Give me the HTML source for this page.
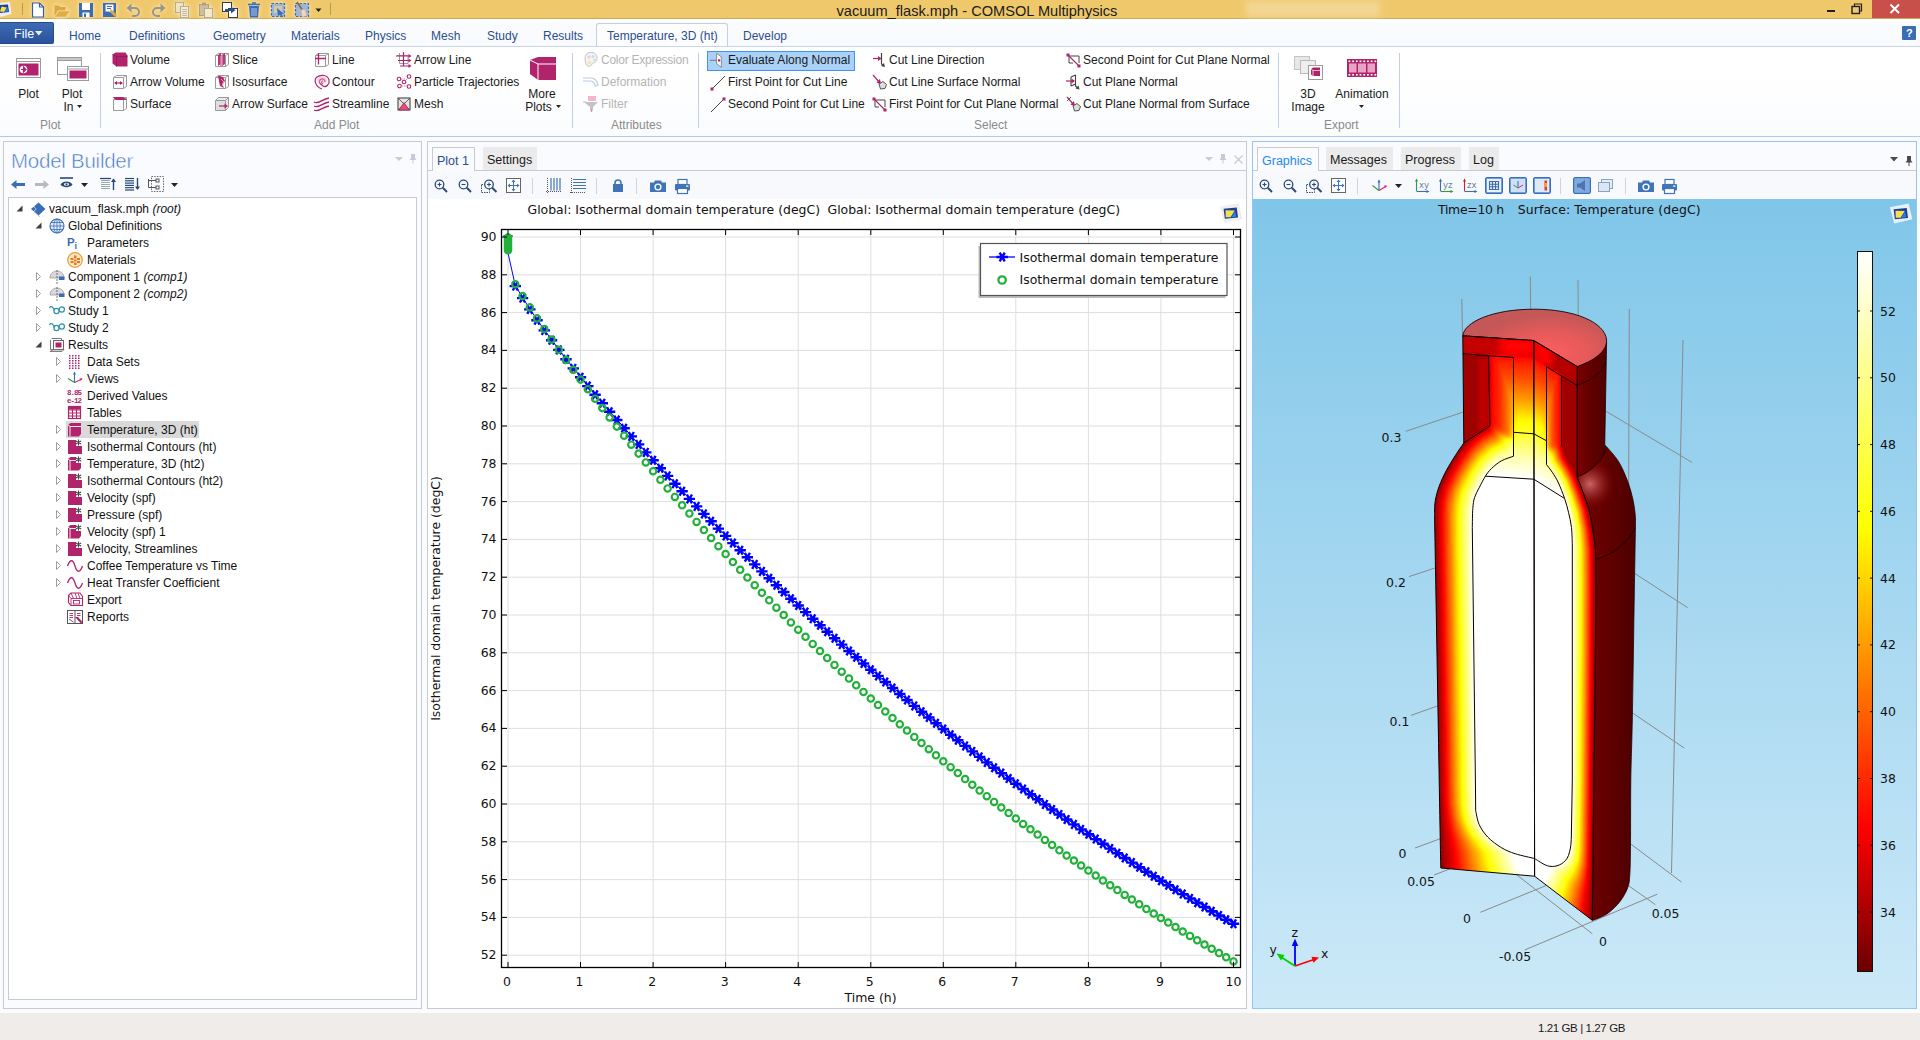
<!DOCTYPE html>
<html lang="en"><head><meta charset="utf-8"><title>vacuum_flask.mph - COMSOL Multiphysics</title>
<style>
html,body{margin:0;padding:0}
body{width:1920px;height:1040px;overflow:hidden;position:relative;background:#fafbfe;font-family:"Liberation Sans",sans-serif;font-size:12px;color:#111}
.a{position:absolute}
.t{position:absolute;white-space:nowrap;line-height:16px;height:16px}
.dj{font-family:"DejaVu Sans","Liberation Sans",sans-serif}
svg{position:absolute;overflow:visible}
#titlebar{left:0;top:0;width:1920px;height:18px;background:#f0c86c;border-bottom:1px solid #cdab55}
#tabs{left:0;top:19px;width:1920px;height:28px;background:linear-gradient(#fff 0,#fff 3px,#fafbfe 3px)}
#ribbon{left:0;top:46px;width:1920px;height:89px;background:linear-gradient(#fff,#fff 25%,#fbfcfe);border-bottom:1px solid #b8c8de;border-top:1px solid #c9d5e6}
#status{left:0;top:1013px;width:1920px;height:27px;background:#f0ecea}
.panel{position:absolute;border:1px solid #c9cacd;background:#fafbfe;box-sizing:border-box}
.rt{color:#1a1a1a}
.rg{color:#8b8b8b}
.dis{color:#b4b4b4}
.tab{color:#2a4f8f}
.sep{position:absolute;width:1px;background:#c2cfe2}
.tsep{position:absolute;width:1px;background:#cfd3da}
i{font-style:italic}

</style></head>
<body>
<div id="titlebar" class="a">
<div class="a" style="left:1246px;top:1px;width:134px;height:16px;background:#f4d898;filter:blur(3px);opacity:.9"></div>
<div class="t" style="left:836.5px;top:1.5px;font-size:14.6px;line-height:19px;height:19px;color:#1b1b1b">vacuum_flask.mph - COMSOL Multiphysics</div>
<svg style="left:0;top:2px" width="14" height="16" viewBox="0 0 14 16"><path d="M-2 1 L10 0 L11.500 12 L1 15 L-2 13Z" fill="#ececf2"/><path d="M-1 3 L8 2.500 L9 10 L-1 11Z" fill="#1d3f9c"/><path d="M0 9.500 L1.500 4.500 L7 5.500 L4 10Z" fill="#f0e04a"/><path d="M4.500 10 L7.500 5.800 L8.300 9.600Z" fill="#2c7fe0"/></svg>
<div class="a" style="left:22px;top:3px;width:1px;height:12px;background:#b99a55"></div>
<div class="a" style="left:330px;top:3px;width:1px;height:12px;background:#b99a55"></div>
<svg style="left:31px;top:2px;filter:drop-shadow(0 0 2px rgba(255,244,214,.9))" width="16" height="16" viewBox="0 0 16 16"><path d="M1.500 1 H8.500 L12.500 5 V15 H1.500Z" fill="#fff" stroke="#2f5fa8" stroke-width="1.200"/><path d="M8.500 1 V5 H12.500" fill="none" stroke="#2f5fa8" stroke-width="1.200"/></svg>
<svg style="left:54px;top:2px;filter:drop-shadow(0 0 2px rgba(255,244,214,.9))" width="16" height="16" viewBox="0 0 16 16"><path d="M.5 3.500 H5 L6.500 5 H11.500 V8.500 H4 L.5 14.500Z" fill="#dba83f"/><path d="M4.500 9 H16 L11.500 15 H.5Z" fill="#e2ad45" stroke="#f3d9a0" stroke-width=".5"/></svg>
<svg style="left:78px;top:2px;filter:drop-shadow(0 0 2px rgba(255,244,214,.9))" width="16" height="16" viewBox="0 0 16 16"><path d="M1 1 H15 V15 H1Z" fill="#3a6db5"/><rect x="4" y="1" width="8" height="7" fill="#fff"/><rect x="4.5" y="10.5" width="7" height="4.5" fill="#fff"/><rect x="6" y="11.5" width="2" height="3.5" fill="#3a6db5"/></svg>
<svg style="left:102px;top:2px;filter:drop-shadow(0 0 2px rgba(255,244,214,.9))" width="16" height="16" viewBox="0 0 16 16"><path d="M1 1 H14 V15 H1Z" fill="#3a6db5"/><rect x="3.5" y="2.5" width="8" height="7" fill="#fff"/><path d="M5 4.5 H10 M5 6.5 H9" stroke="#3a6db5" stroke-width="1"/><path d="M7 9 L9 7 L15 13 L13 15Z" fill="#e0a83a"/><path d="M6.5 8.5 L9 7.5 L7.5 10Z" fill="#fff"/></svg>
<svg style="left:126px;top:2px;filter:drop-shadow(0 0 2px rgba(255,244,214,.9))" width="16" height="16" viewBox="0 0 16 16"><path d="M4 6 H9 A4 4 0 0 1 9 14 H6" fill="none" stroke="#9a9687" stroke-width="2"/><path d="M0.5 6 L5.5 1.5 V10.5Z" fill="#9a9687"/></svg>
<svg style="left:150px;top:2px;filter:drop-shadow(0 0 2px rgba(255,244,214,.9))" width="16" height="16" viewBox="0 0 16 16"><path d="M12 6 H7 A4 4 0 0 0 7 14 H10" fill="none" stroke="#9a9687" stroke-width="2"/><path d="M15.5 6 L10.5 1.5 V10.5Z" fill="#9a9687"/></svg>
<svg style="left:174px;top:2px;filter:drop-shadow(0 0 2px rgba(255,244,214,.9))" width="16" height="16" viewBox="0 0 16 16"><rect x="1.5" y="0.5" width="8" height="10" fill="#efe3c4" stroke="#b8ac90"/><rect x="6.5" y="4.5" width="8" height="11" fill="#f5ecd4" stroke="#b8ac90"/><path d="M8 7.5 H13 M8 9.5 H13 M8 11.5 H13 M8 13.5 H13" stroke="#b8ac90" stroke-width=".8"/></svg>
<svg style="left:198px;top:2px;filter:drop-shadow(0 0 2px rgba(255,244,214,.9))" width="16" height="16" viewBox="0 0 16 16"><rect x="1.5" y="2.5" width="9" height="11" fill="#cdbf9c" stroke="#b0a27e"/><rect x="4" y="0.5" width="4" height="3" fill="#b0a27e"/><rect x="6.5" y="6.5" width="8" height="9" fill="#f4ead0" stroke="#b8ac90"/></svg>
<svg style="left:222px;top:2px;filter:drop-shadow(0 0 2px rgba(255,244,214,.9))" width="16" height="16" viewBox="0 0 16 16"><rect x="0.5" y="0.5" width="9" height="9" fill="#fff" stroke="#3d3d3d"/><rect x="6.500" y="6.5" width="9" height="9" fill="#fff" stroke="#3d3d3d"/><path d="M3 8 H10" stroke="#2b4f8f" stroke-width="2"/><path d="M9 4.500 L13.500 8 L9 11.500Z" fill="#2b4f8f"/></svg>
<svg style="left:246px;top:2px;filter:drop-shadow(0 0 2px rgba(255,244,214,.9))" width="16" height="16" viewBox="0 0 16 16"><path d="M3 4 H13 L12 15.5 H4Z" fill="#3a6db5"/><path d="M2 2.500 H14" stroke="#3a6db5" stroke-width="1.600"/><path d="M6 1 H10" stroke="#3a6db5" stroke-width="1.500"/><path d="M6 6 V14 M8 6 V14 M10 6 V14" stroke="#cfe0f5" stroke-width=".8"/></svg>
<svg style="left:270px;top:2px;filter:drop-shadow(0 0 2px rgba(255,244,214,.9))" width="16" height="16" viewBox="0 0 16 16"><rect x="1.500" y="1.500" width="13" height="13" fill="#9db5d6" stroke="#3a6db5" stroke-dasharray="2.500 1.500" stroke-width="1.200"/><rect x="4" y="4" width="8" height="7" fill="#f3d48f" opacity=".6"/><path d="M7 6 L14 12 L11.500 12 L13 15 L11.500 15.500 L10 12.500 L8 14Z" fill="#3a6db5"/></svg>
<svg style="left:294px;top:2px;filter:drop-shadow(0 0 2px rgba(255,244,214,.9))" width="16" height="16" viewBox="0 0 16 16"><rect x="1.500" y="1.500" width="13" height="13" fill="#9db5d6" stroke="#3a6db5" stroke-dasharray="2.500 1.500" stroke-width="1.200"/><path d="M3 0 L9 9" stroke="#8a6a3a" stroke-width="1.600"/><path d="M7 8 L11 7 L13 14 L8 15Z" fill="#e8d9c0" stroke="#c9a" stroke-width=".5"/></svg>
<svg style="left:315px;top:8px" width="8" height="5" viewBox="0 0 8 5"><path d="M0.500 0.500 H6.500 L3.500 4Z" fill="#222"/></svg>
<div class="a" style="left:1827px;top:10px;width:8px;height:2px;background:#222"></div>
<svg style="left:1851px;top:3px" width="12" height="12" viewBox="0 0 12 12"><path d="M3.500 3 V1 H10.500 V8 H8.500" fill="none" stroke="#222" stroke-width="1.200"/><rect x="1" y="3.500" width="7.500" height="7" fill="none" stroke="#222" stroke-width="1.400"/></svg>
<div class="a" style="left:1872px;top:0;width:48px;height:18px;background:#c9504a"></div>
<svg style="left:1889px;top:3px" width="12" height="12" viewBox="0 0 12 12"><path d="M1.500 1.500 L10 10 M10 1.500 L1.500 10" stroke="#fff" stroke-width="2"/></svg>
</div>
<div id="tabs" class="a">
<div class="a" style="left:0;top:3px;width:54px;height:22px;background:linear-gradient(#3d6cb4,#2a5199);border:1px solid #244a8d;border-left:none;box-sizing:border-box;border-radius:0 2px 2px 0"></div>
<div class="t" style="left:14px;top:7px;color:#fff;font-size:12.500px">File</div>
<svg style="left:35px;top:12px" width="8" height="5" viewBox="0 0 8 5"><path d="M0 0 H7.500 L3.750 4.500Z" fill="#e8eef8"/></svg>
<div class="t tab" style="left:69px;top:9px">Home</div>
<div class="t tab" style="left:129px;top:9px">Definitions</div>
<div class="t tab" style="left:213px;top:9px">Geometry</div>
<div class="t tab" style="left:291px;top:9px">Materials</div>
<div class="t tab" style="left:365px;top:9px">Physics</div>
<div class="t tab" style="left:431px;top:9px">Mesh</div>
<div class="t tab" style="left:487px;top:9px">Study</div>
<div class="t tab" style="left:543px;top:9px">Results</div>
<div class="t tab" style="left:743px;top:9px">Develop</div>
<div class="a" style="left:596px;top:4px;width:132px;height:24px;background:#fdfdfe;border:1px solid #c3d0e3;border-bottom:none;box-sizing:border-box;border-radius:3px 3px 0 0"></div>
<div class="t tab" style="left:607px;top:9px">Temperature, 3D (ht)</div>
<div class="a" style="left:1902px;top:7px;width:14px;height:14px;background:#3a6db5;border-radius:1px"></div><div class="t" style="left:1906px;top:6px;color:#fff;font-size:11px;font-weight:bold">?</div>
</div>
<div id="ribbon" class="a">
<svg style="left:16px;top:11px" width="25" height="20" viewBox="0 0 25 20"><rect x=".5" y=".5" width="24" height="19" fill="#fff" stroke="#9b9b9b"/><path d="M.5 3.5 H24.5" stroke="#9b9b9b"/><rect x="2.5" y="5.5" width="20" height="12" fill="#b1246c"/><circle cx="7.500" cy="11.500" r="3.800" fill="#fff"/><path d="M5 11.500 H8 M7.500 9 L10 11.500 L7.500 14Z" stroke="#b1246c" fill="#b1246c" stroke-width="1.200"/></svg>
<div class="t rt" style="left:-31.5px;width:120px;text-align:center;top:39px">Plot</div>
<svg style="left:57px;top:10px" width="32" height="24" viewBox="0 0 32 24"><rect x=".5" y=".5" width="24" height="17" fill="#fff" stroke="#9b9b9b"/><rect x=".5" y=".5" width="24" height="3" fill="#c8c8c8" stroke="#9b9b9b"/><rect x="10.500" y="9.500" width="21" height="14" fill="#fff" stroke="#9b9b9b"/><path d="M10.500 12 H31.500" stroke="#9b9b9b"/><rect x="12.500" y="13.500" width="17" height="8" fill="#b1246c"/></svg>
<div class="t rt" style="left:12px;width:120px;text-align:center;top:39px">Plot</div>
<div class="t rt" style="left:8.5px;width:120px;text-align:center;top:52px">In</div>
<svg style="left:77px;top:58px" width="6" height="4" viewBox="0 0 6 4"><path d="M0 0 H5 L2.500 3Z" fill="#222"/></svg>
<div class="t rg" style="left:40px;top:70px;">Plot</div>
<div class="sep" style="left:100px;top:6px;height:75px"></div>
<svg style="left:112px;top:5px" width="16" height="16" viewBox="0 0 16 16"><path d="M.5 2.500 L3.500 .5 H13.500 L15.500 3.500 V14.500 H4.500 L.5 11.500Z" fill="#b1246c"/><path d="M.5 2.500 L4.500 4.500 H15.500 M4.500 4.500 V14.500" fill="none" stroke="#8a1a52" stroke-width=".8"/></svg>
<div class="t rt" style="left:130px;top:5px;">Volume</div>
<svg style="left:112px;top:27px" width="16" height="16" viewBox="0 0 16 16"><path d="M1.5 3.5 H11.5 V14.5 H1.5Z M1.5 3.500 L4.500 1.500 H14.500 V12.500 L11.500 14.500 M11.500 3.500 L14.500 1.500" fill="none" stroke="#9b9b9b" stroke-width="1"/><path d="M3 9 H10" stroke="#b1246c" stroke-width="1.200"/><path d="M2 9 L5 7 V11Z M11 9 L8 7 V11Z" fill="#b1246c"/></svg>
<div class="t rt" style="left:130px;top:27px;">Arrow Volume</div>
<svg style="left:112px;top:49px" width="16" height="16" viewBox="0 0 16 16"><path d="M1.5 3.5 H11.5 V14.5 H1.5Z M1.5 3.500 L4.500 1.500 H14.500 V12.500 L11.500 14.500 M11.500 3.500 L14.500 1.500" fill="none" stroke="#9b9b9b" stroke-width="1"/><path d="M.5 1 H11 L15 4 H4Z" fill="#b1246c"/></svg>
<div class="t rt" style="left:130px;top:49px;">Surface</div>
<svg style="left:214px;top:5px" width="16" height="16" viewBox="0 0 16 16"><path d="M1.5 3.5 H11.5 V14.5 H1.5Z M1.5 3.500 L4.500 1.500 H14.500 V12.500 L11.500 14.500 M11.500 3.500 L14.500 1.500" fill="none" stroke="#9b9b9b" stroke-width="1"/><path d="M4 3 L7 1 V12 L4 14Z M8 3 L11 1 V12 L8 14Z" fill="#b1246c" opacity=".9"/><path d="M6 4 L9 2 V13 L6 15Z" fill="#d77aa9" opacity=".8"/></svg>
<div class="t rt" style="left:232px;top:5px;">Slice</div>
<svg style="left:214px;top:27px" width="16" height="16" viewBox="0 0 16 16"><path d="M1.5 3.5 H11.5 V14.5 H1.5Z M1.5 3.500 L4.500 1.500 H14.500 V12.500 L11.500 14.500 M11.500 3.500 L14.500 1.500" fill="none" stroke="#9b9b9b" stroke-width="1"/><path d="M4 1.500 L9 3 L11 7 L8 10 L10 14 L6 12 L5 7Z" fill="#b1246c"/><path d="M7 5 L10 8 L8 12" fill="none" stroke="#e6a3c5" stroke-width="1"/></svg>
<div class="t rt" style="left:232px;top:27px;">Isosurface</div>
<svg style="left:214px;top:49px" width="16" height="16" viewBox="0 0 16 16"><path d="M1.500 4.500 H11.500 V14.500 H1.500Z" fill="#dedede"/><path d="M1.500 4.500 L4.500 1.500 H14.500 L11.500 4.500Z M11.500 4.500 L14.500 1.500 V11.500 L11.500 14.500Z" fill="#e8e8e8"/><path d="M1.500 4.500 H11.500 V14.500 H1.500Z M1.500 4.500 L4.500 1.500 H14.500 V11.500 L11.500 14.500 M11.500 4.500 L14.500 1.500" fill="none" stroke="#9b9b9b"/><path d="M5 10 H12" stroke="#b1246c" stroke-width="1.200"/><path d="M14 10 L10.500 7.500 V12.500Z" fill="#b1246c"/></svg>
<div class="t rt" style="left:232px;top:49px;">Arrow Surface</div>
<svg style="left:314px;top:5px" width="16" height="16" viewBox="0 0 16 16"><path d="M1.500 3.500 H11.500 V14.500 H1.500Z M1.5 3.500 L4.500 1.500 H14.500 V12.500 L11.500 14.500 M11.500 3.500 L14.500 1.500" fill="none" stroke="#9b9b9b" stroke-width="1"/><path d="M4.500 1 V12.500 M1 6.500 H12" stroke="#b1246c" stroke-width="1.300" fill="none"/></svg>
<div class="t rt" style="left:332px;top:5px;">Line</div>
<svg style="left:314px;top:27px" width="16" height="16" viewBox="0 0 16 16"><path d="M8 15 C2 13 -1 6 3 3 C7 0 14 1 15 6 C16 10 12 14 9 12 C6 10 4 8 6 6 C8 4 11 5 11 8" fill="none" stroke="#b1246c" stroke-width="1.200"/><path d="M9 10 C7 9 7 7 9 7" fill="none" stroke="#b1246c" stroke-width="1.200"/><ellipse cx="8" cy="6" rx="5" ry="3.500" fill="#e6a3c5" opacity=".5"/></svg>
<div class="t rt" style="left:332px;top:27px;">Contour</div>
<svg style="left:314px;top:49px" width="16" height="16" viewBox="0 0 16 16"><path d="M0 6 C4 9 8 3 15 2 M0 10 C4 13 8 7 15 6 M0 14 C4 17 8 11 15 10" fill="none" stroke="#b1246c" stroke-width="1.400"/></svg>
<div class="t rt" style="left:332px;top:49px;">Streamline</div>
<svg style="left:396px;top:5px" width="16" height="16" viewBox="0 0 16 16"><path d="M3.500 1 V11.500 H12 M1 3.500 H12 V11.500" fill="none" stroke="#9b9b9b"/><path d="M0 4 H13 M2 8.500 H13 M4 14 H13 M7.500 0 V14" stroke="#b1246c" stroke-width="1.200" fill="none"/><path d="M15.500 4 L12.500 2 V6Z M15.500 8.500 L12.500 6.500 V10.500Z M15.500 14 L12.500 12 V16Z" fill="#b1246c"/></svg>
<div class="t rt" style="left:414px;top:5px;">Arrow Line</div>
<svg style="left:396px;top:27px" width="16" height="16" viewBox="0 0 16 16"><g fill="none" stroke="#b1246c" stroke-width="1.100"><circle cx="3" cy="5" r="1.800"/><circle cx="8" cy="8" r="1.800"/><circle cx="13" cy="2.500" r="1.800"/><circle cx="3.500" cy="12" r="1.800"/><circle cx="13" cy="12.500" r="1.800"/></g><path d="M5 5 H9 M10 6 L12 4 M5.500 12 H11" stroke="#d77aa9" stroke-width="1" stroke-dasharray="1.500 1"/></svg>
<div class="t rt" style="left:414px;top:27px;">Particle Trajectories</div>
<svg style="left:396px;top:49px" width="16" height="16" viewBox="0 0 16 16"><rect x="2" y="2" width="12" height="12" fill="#e4e4e4" stroke="#555" stroke-width="1.200"/><path d="M2 2 L14 14 M14 2 L2 14" stroke="#555" stroke-width=".9"/><path d="M8 6.500 L13 14 H3Z" fill="#e0516f" stroke="#b1246c" stroke-width=".8"/></svg>
<div class="t rt" style="left:414px;top:49px;">Mesh</div>
<svg style="left:530px;top:10px" width="26" height="24" viewBox="0 0 26 24"><path d="M0 3 L8 0 H26 V23 H8 L0 17Z" fill="#b1246c"/><path d="M0 3 L8 7 H26 M8 7 V23" fill="none" stroke="#fdfdfe" stroke-width="1"/></svg>
<div class="t rt" style="left:482px;width:120px;text-align:center;top:39px">More</div>
<div class="t rt" style="left:478.5px;width:120px;text-align:center;top:52px">Plots</div>
<svg style="left:556px;top:58px" width="6" height="4" viewBox="0 0 6 4"><path d="M0 0 H5 L2.500 3Z" fill="#222"/></svg>
<div class="t rg" style="left:314px;top:70px;">Add Plot</div>
<div class="sep" style="left:572px;top:6px;height:75px"></div>
<svg style="left:583px;top:5px" width="16" height="16" viewBox="0 0 16 16"><path d="M5 1 C10 -1 15 2 14 7 C13 12 10 10 9 12 C8 15 4 15 3 12 C2 9 1 3 5 1Z" fill="#f3f3f3" stroke="#c4c4c4"/><circle cx="6" cy="5" r="1.500" fill="#f6c9d9"/><circle cx="10" cy="4.500" r="1.500" fill="#c7dbf2"/><circle cx="11.500" cy="8" r="1.500" fill="#cfeacc"/><circle cx="6.500" cy="10.500" r="1.500" fill="#f7dfb0"/></svg>
<div class="t dis" style="left:601px;top:5px;letter-spacing:-.25px">Color Expression</div>
<svg style="left:583px;top:27px" width="16" height="16" viewBox="0 0 16 16"><path d="M0 4 H8 C12 4 14 7 15 11 M0 7 H7 C10 7 11.500 9 12.500 12" fill="none" stroke="#b9cde6" stroke-width="1.200"/><path d="M12 12.500 L15.500 11" stroke="#b9cde6"/></svg>
<div class="t dis" style="left:601px;top:27px;">Deformation</div>
<svg style="left:583px;top:49px" width="16" height="16" viewBox="0 0 16 16"><rect x="5" y="0" width="8" height="5" fill="#f3b6cf"/><path d="M1 6 H15 L10 11 V14 H7 V11Z" fill="#c4c4c4"/><path d="M8.500 13 V16" stroke="#e98bb3" stroke-width="1.500"/><path d="M0 6 H3" stroke="#c4c4c4"/></svg>
<div class="t dis" style="left:601px;top:49px;">Filter</div>
<div class="t rg" style="left:611px;top:70px;">Attributes</div>
<div class="sep" style="left:698px;top:6px;height:75px"></div>
<div class="a" style="left:707px;top:4px;width:148px;height:20px;background:#aad2f8;border:1px solid #3d94e8;box-sizing:border-box"></div>
<svg style="left:708px;top:5px" width="16" height="16" viewBox="0 0 16 16"><path d="M8.600 1.200 L13.300 4.900 V15.300 L8.600 11.700Z" fill="#fff" stroke="#8a8a8a" stroke-width="1"/><path d="M2 8.300 H8.600" stroke="#777" stroke-width="1"/><rect x="10" y="7.300" width="2.200" height="2.200" fill="#b1246c"/></svg>
<div class="t rt" style="left:728px;top:5px;">Evaluate Along Normal</div>
<svg style="left:710px;top:28px" width="16" height="16" viewBox="0 0 16 16"><path d="M2 14 L15 1" stroke="#444" stroke-width="1"/><rect x="0.500" y="12.500" width="3" height="3" fill="#b1246c"/></svg>
<div class="t rt" style="left:728px;top:27px;">First Point for Cut Line</div>
<svg style="left:710px;top:50px" width="16" height="16" viewBox="0 0 16 16"><path d="M1 15 L14 2" stroke="#444" stroke-width="1"/><rect x="12.500" y="0.500" width="3" height="3" fill="#b1246c"/></svg>
<div class="t rt" style="left:728px;top:49px;">Second Point for Cut Line</div>
<svg style="left:872px;top:5px" width="16" height="16" viewBox="0 0 16 16"><path d="M9.500 1 V12 M9.500 12 L11.500 14" stroke="#444" stroke-width="1.200" fill="none"/><path d="M13 15 L9 14 L12 11Z" fill="#444"/><path d="M1 6.500 H9" stroke="#b1246c" stroke-width="1.200"/><path d="M9.500 6.500 L6 4 V9Z" fill="#b1246c"/></svg>
<div class="t rt" style="left:889px;top:5px;">Cut Line Direction</div>
<svg style="left:872px;top:27px" width="16" height="16" viewBox="0 0 16 16"><path d="M1 1 L8 9" stroke="#b1246c" stroke-width="1.200"/><path d="M9 10.500 L4.500 8.500 L8 5Z" fill="#b1246c"/><path d="M7 10 L11 7.500 L14.500 10.500 L13 14.500 L8.500 15Z" fill="#ddd" stroke="#444" stroke-width=".9"/></svg>
<div class="t rt" style="left:889px;top:27px;">Cut Line Surface Normal</div>
<svg style="left:872px;top:49px" width="16" height="16" viewBox="0 0 16 16"><path d="M3 4 H13 V11 M3 4 V11 H7" fill="none" stroke="#444" stroke-width="1"/><path d="M3 4 L13 14" stroke="#b1246c" stroke-width="1.100"/><rect x="0.500" y="1.500" width="3" height="3" fill="#b1246c"/><rect x="11.500" y="12.500" width="3" height="3" fill="#b1246c"/></svg>
<div class="t rt" style="left:889px;top:49px;">First Point for Cut Plane Normal</div>
<svg style="left:1066px;top:5px" width="16" height="16" viewBox="0 0 16 16"><path d="M3 4 H13 V11 M3 4 V11 H7" fill="none" stroke="#444" stroke-width="1"/><path d="M3 4 L13 14" stroke="#b1246c" stroke-width="1.100"/><rect x="0.500" y="1.500" width="3" height="3" fill="#b1246c"/><rect x="11.500" y="12.500" width="3" height="3" fill="#b1246c"/></svg>
<div class="t rt" style="left:1083px;top:5px;">Second Point for Cut Plane Normal</div>
<svg style="left:1066px;top:27px" width="16" height="16" viewBox="0 0 16 16"><path d="M9.500 1 V12 L12 14.500 M5 3 V12 M5 3 L9.500 1 M5 12 L9.500 10" stroke="#444" stroke-width="1.100" fill="none"/><path d="M13.500 15.500 L9.500 14.500 L12.500 11.500Z" fill="#444"/><path d="M0 7 H8" stroke="#b1246c" stroke-width="1.200"/><path d="M9 7 L5.500 4.500 V9.500Z" fill="#b1246c"/></svg>
<div class="t rt" style="left:1083px;top:27px;">Cut Plane Normal</div>
<svg style="left:1066px;top:49px" width="16" height="16" viewBox="0 0 16 16"><path d="M1 1 L8 9" stroke="#b1246c" stroke-width="1.200"/><path d="M9 10.500 L4.500 8.500 L8 5Z" fill="#b1246c"/><path d="M7 10 L11 7.500 L14.500 10.500 L13 14.500 L8.500 15Z" fill="#ddd" stroke="#444" stroke-width=".9"/><path d="M1 5 L5 1" stroke="#444" stroke-width=".9"/></svg>
<div class="t rt" style="left:1083px;top:49px;">Cut Plane Normal from Surface</div>
<div class="t rg" style="left:974px;top:70px;">Select</div>
<div class="sep" style="left:1278px;top:6px;height:75px"></div>
<svg style="left:1294px;top:9px" width="30" height="24" viewBox="0 0 30 24"><rect x="0.500" y="0.500" width="15" height="13" fill="#e8e8e8" stroke="#c4c4c4"/><rect x="6.500" y="4.500" width="15" height="13" fill="#eee" stroke="#b9b9b9"/><rect x="14.500" y="9.500" width="14" height="14" fill="#fff" stroke="#9b9b9b"/><path d="M17 13 L19 11.500 H26 V20 H19 L17 18.500Z" fill="#b1246c"/><path d="M17 13 L19 14.500 H26 M19 14.500 V20" stroke="#fff" stroke-width=".7" fill="none"/></svg>
<div class="t rt" style="left:1248px;width:120px;text-align:center;top:39px">3D</div>
<div class="t rt" style="left:1248px;width:120px;text-align:center;top:52px">Image</div>
<svg style="left:1347px;top:12px" width="30" height="18" viewBox="0 0 30 18"><rect x="0" y="0" width="30" height="18" fill="#b1246c"/><rect x="1.5" y="1.500" width="1.800" height="1.600" fill="#fff"/><rect x="1.5" y="15" width="1.800" height="1.600" fill="#fff"/><rect x="5.2" y="1.500" width="1.800" height="1.600" fill="#fff"/><rect x="5.2" y="15" width="1.800" height="1.600" fill="#fff"/><rect x="8.9" y="1.500" width="1.800" height="1.600" fill="#fff"/><rect x="8.9" y="15" width="1.800" height="1.600" fill="#fff"/><rect x="12.6" y="1.500" width="1.800" height="1.600" fill="#fff"/><rect x="12.6" y="15" width="1.800" height="1.600" fill="#fff"/><rect x="16.3" y="1.500" width="1.800" height="1.600" fill="#fff"/><rect x="16.3" y="15" width="1.800" height="1.600" fill="#fff"/><rect x="20" y="1.500" width="1.800" height="1.600" fill="#fff"/><rect x="20" y="15" width="1.800" height="1.600" fill="#fff"/><rect x="23.7" y="1.500" width="1.800" height="1.600" fill="#fff"/><rect x="23.7" y="15" width="1.800" height="1.600" fill="#fff"/><rect x="27.4" y="1.500" width="1.800" height="1.600" fill="#fff"/><rect x="27.4" y="15" width="1.800" height="1.600" fill="#fff"/><rect x="2" y="4.500" width="7.500" height="9" fill="#e6a3c5"/><rect x="11" y="4.500" width="8" height="9" fill="#e6a3c5"/><rect x="20.500" y="4.500" width="7.500" height="9" fill="#e6a3c5"/></svg>
<div class="t rt" style="left:1302px;width:120px;text-align:center;top:39px">Animation</div>
<svg style="left:1359px;top:58px" width="6" height="4" viewBox="0 0 6 4"><path d="M0 0 H5 L2.500 3Z" fill="#222"/></svg>
<div class="t rg" style="left:1324px;top:70px;">Export</div>
<div class="sep" style="left:1399px;top:6px;height:75px"></div>
</div>
<div class="panel" style="left:3px;top:141px;width:419px;height:868px"></div>
<div class="a" style="left:8px;top:197px;width:409px;height:803px;border:1px solid #c9cacd;background:#fff;box-sizing:border-box"></div>
<div class="t" style="left:11px;top:147px;font-size:20.500px;line-height:28px;height:28px;color:#3f76c0;letter-spacing:-.25px;-webkit-text-stroke:.55px #fafbfe">Model Builder</div>
<svg style="left:395px;top:157px" width="8" height="5" viewBox="0 0 8 5"><path d="M0 0 H8 L4 4Z" fill="#c5cad6"/></svg>
<svg style="left:409px;top:154px" width="8" height="10" viewBox="0 0 8 10"><path d="M2 0 H6 V4 L7.500 6 H.500 L2 4Z M3.500 6 H4.500 V9.500 H3.500Z" fill="#c5cad6"/></svg>
<svg style="left:11px;top:178.5px" width="14" height="11" viewBox="0 0 14 11"><path d="M0 5.500 L5.500 1 V4 H14 V7 H5.500 V10Z" fill="#3a6db5"/></svg>
<svg style="left:35px;top:178.5px" width="14" height="11" viewBox="0 0 14 11"><path d="M14 5.500 L8.500 1 V4 H0 V7 H8.500 V10Z" fill="#b9b9b9"/></svg>
<svg style="left:59px;top:177px" width="15" height="12" viewBox="0 0 15 12"><path d="M1 1 H14" stroke="#244a78" stroke-width="1.600"/><path d="M1.500 7.500 C4 3.500 11 3.500 13.500 7.500 C11 11 4 11 1.500 7.500Z" fill="#244a78"/><ellipse cx="7.500" cy="7.300" rx="2.600" ry="1.500" fill="#fff"/><circle cx="7.500" cy="7.300" r="1.100" fill="#244a78"/></svg>
<svg style="left:81px;top:182.5px" width="7" height="4" viewBox="0 0 7 4"><path d="M0 0 H7 L3.500 4Z" fill="#222"/></svg>
<svg style="left:100px;top:177px" width="16" height="14" viewBox="0 0 16 14"><path d="M0 1.500 H11" stroke="#244a78" stroke-width="1.300"/><path d="M1 3.5 H10" stroke="#9aa" stroke-width="1"/><path d="M1 5.5 H10" stroke="#9aa" stroke-width="1"/><path d="M1 7.5 H10" stroke="#9aa" stroke-width="1"/><path d="M1 9.5 H10" stroke="#9aa" stroke-width="1"/><path d="M1 11.5 H10" stroke="#9aa" stroke-width="1"/><path d="M13.500 13 V2" stroke="#244a78" stroke-width="1.400"/><path d="M11 5 L13.500 1.500 L16 5Z" fill="#244a78"/></svg>
<svg style="left:124px;top:177px" width="16" height="14" viewBox="0 0 16 14"><path d="M1 1.5 H10" stroke="#244a78" stroke-width="1.200"/><path d="M1 3.8 H10" stroke="#244a78" stroke-width="1.200"/><path d="M1 6.1 H10" stroke="#244a78" stroke-width="1.200"/><path d="M1 8.4 H10" stroke="#244a78" stroke-width="1.200"/><path d="M1 10.7 H10" stroke="#244a78" stroke-width="1.200"/><path d="M1 13 H10" stroke="#244a78" stroke-width="1.200"/><path d="M13.500 1 V12" stroke="#244a78" stroke-width="1.400"/><path d="M11 9.500 L13.500 13 L16 9.500Z" fill="#244a78"/></svg>
<svg style="left:148px;top:176px" width="16" height="16" viewBox="0 0 16 16"><rect x="3.500" y=".5" width="12" height="15" fill="none" stroke="#666" stroke-dasharray="1.500 1.200"/><path d="M.5 3 V11.500 H8 M.5 4.500 H8" fill="none" stroke="#555" stroke-width="1"/><rect x="8" y="3" width="3" height="3" fill="#fff" stroke="#555"/><rect x="8" y="10" width="3" height="3" fill="#fff" stroke="#555"/></svg>
<svg style="left:171px;top:182.5px" width="7" height="4" viewBox="0 0 7 4"><path d="M0 0 H7 L3.500 4Z" fill="#222"/></svg>
<svg style="left:15.5px;top:204.5px" width="7" height="7" viewBox="0 0 7 7"><path d="M6.500 .5 V6.500 H.5Z" fill="#404040"/></svg>
<svg style="left:30px;top:201px" width="16" height="16" viewBox="0 0 16 16"><path d="M8.500 1.500 L15.500 8 L8.500 14.500 L4 10.500 L6.500 8 L4 5.500Z" fill="#3a6db5"/><path d="M3.500 5.800 L6 8 L3.500 10.200 L1 8Z" fill="#3a6db5"/><path d="M8.500 14.500 L9.500 15.500 L4.500 11" fill="none" stroke="#aab" stroke-width=".8"/></svg>
<div class="t" style="left:49px;top:201px;">vacuum_flask.mph <i>(root)</i></div>
<svg style="left:34.5px;top:221.5px" width="7" height="7" viewBox="0 0 7 7"><path d="M6.500 .5 V6.500 H.5Z" fill="#404040"/></svg>
<svg style="left:49px;top:218px" width="16" height="16" viewBox="0 0 16 16"><circle cx="8" cy="8" r="7" fill="#e7eef8" stroke="#3a6db5" stroke-width="1.100"/><ellipse cx="8" cy="8" rx="3.200" ry="7" fill="none" stroke="#3a6db5" stroke-width=".8"/><path d="M1 8 H15 M2 4.500 H14 M2 11.500 H14 M8 1 V15" stroke="#3a6db5" stroke-width=".8"/></svg>
<div class="t" style="left:68px;top:218px;">Global Definitions</div>
<svg style="left:67px;top:235px" width="16" height="16" viewBox="0 0 16 16"><text x="0" y="11" font-family="Liberation Sans,sans-serif" font-size="11.500" font-weight="bold" fill="#3a6db5">P</text><text x="7.500" y="14" font-family="Liberation Sans,sans-serif" font-size="9" font-weight="bold" fill="#3a6db5">i</text></svg>
<div class="t" style="left:87px;top:235px;">Parameters</div>
<svg style="left:67px;top:252px" width="16" height="16" viewBox="0 0 16 16"><circle cx="8" cy="8" r="7.300" fill="#fce9c8" stroke="#f29a2e" stroke-width="1.200"/><g fill="#e8791e"><rect x="3.500" y="6" width="3" height="2"/><rect x="3.500" y="9" width="3" height="2"/><rect x="7" y="3.500" width="2.500" height="3"/><rect x="7" y="7.500" width="2.500" height="2"/><rect x="7" y="10.500" width="2.500" height="2.500"/><rect x="10" y="6" width="3" height="2"/><rect x="10" y="9" width="3" height="2"/></g></svg>
<div class="t" style="left:87px;top:252px;">Materials</div>
<svg style="left:36px;top:271.5px" width="5" height="9" viewBox="0 0 5 9"><path d="M.5 .5 L4.500 4.500 L.5 8.500Z" fill="#fff" stroke="#a0a0a0" stroke-width="1"/></svg>
<svg style="left:49px;top:269px" width="16" height="16" viewBox="0 0 16 16"><path d="M1 9 C1 4 5 2 8 2 C11 2 15 4 15 9 H8Z" fill="#d8d8d8" stroke="#999" stroke-width=".8"/><path d="M8 1 V16" stroke="#555" stroke-width=".8" stroke-dasharray="2 1"/><rect x="10" y="7.500" width="5.500" height="3.500" fill="#3a6db5"/></svg>
<div class="t" style="left:68px;top:269px;">Component 1 <i>(comp1)</i></div>
<svg style="left:36px;top:288.5px" width="5" height="9" viewBox="0 0 5 9"><path d="M.5 .5 L4.500 4.500 L.5 8.500Z" fill="#fff" stroke="#a0a0a0" stroke-width="1"/></svg>
<svg style="left:49px;top:286px" width="16" height="16" viewBox="0 0 16 16"><path d="M1 9 C1 4 5 2 8 2 C11 2 15 4 15 9 H8Z" fill="#d8d8d8" stroke="#999" stroke-width=".8"/><path d="M8 1 V16" stroke="#555" stroke-width=".8" stroke-dasharray="2 1"/><rect x="10" y="7.500" width="5.500" height="3.500" fill="#3a6db5"/></svg>
<div class="t" style="left:68px;top:286px;">Component 2 <i>(comp2)</i></div>
<svg style="left:36px;top:305.5px" width="5" height="9" viewBox="0 0 5 9"><path d="M.5 .5 L4.500 4.500 L.5 8.500Z" fill="#fff" stroke="#a0a0a0" stroke-width="1"/></svg>
<svg style="left:49px;top:303px" width="16" height="16" viewBox="0 0 16 16"><path d="M.5 5 C2 2 4 4 5.500 7.500" fill="none" stroke="#2a93a8" stroke-width="1.200"/><circle cx="7.500" cy="8" r="2.600" fill="none" stroke="#2a93a8" stroke-width="1.200"/><circle cx="12.800" cy="6.500" r="2.600" fill="none" stroke="#2a93a8" stroke-width="1.200"/></svg>
<div class="t" style="left:68px;top:303px;">Study 1</div>
<svg style="left:36px;top:322.5px" width="5" height="9" viewBox="0 0 5 9"><path d="M.5 .5 L4.500 4.500 L.5 8.500Z" fill="#fff" stroke="#a0a0a0" stroke-width="1"/></svg>
<svg style="left:49px;top:320px" width="16" height="16" viewBox="0 0 16 16"><path d="M.5 5 C2 2 4 4 5.500 7.500" fill="none" stroke="#2a93a8" stroke-width="1.200"/><circle cx="7.500" cy="8" r="2.600" fill="none" stroke="#2a93a8" stroke-width="1.200"/><circle cx="12.800" cy="6.500" r="2.600" fill="none" stroke="#2a93a8" stroke-width="1.200"/></svg>
<div class="t" style="left:68px;top:320px;">Study 2</div>
<svg style="left:34.5px;top:340.5px" width="7" height="7" viewBox="0 0 7 7"><path d="M6.500 .5 V6.500 H.5Z" fill="#404040"/></svg>
<svg style="left:49px;top:337px" width="16" height="16" viewBox="0 0 16 16"><path d="M2.500 1.500 H12.500 V10.500 M1.500 3 V12.500 H11" fill="none" stroke="#777" stroke-width="1"/><rect x="4.500" y="3.500" width="10" height="9" fill="#fff" stroke="#666" stroke-width="1"/><rect x="6.500" y="5.500" width="6" height="5" fill="#b1246c"/><path d="M1 14.500 L4 12.500 H15 L13 14.500Z" fill="#ccc" stroke="#666" stroke-width=".8"/></svg>
<div class="t" style="left:68px;top:337px;">Results</div>
<svg style="left:56px;top:356.5px" width="5" height="9" viewBox="0 0 5 9"><path d="M.5 .5 L4.500 4.500 L.5 8.500Z" fill="#fff" stroke="#a0a0a0" stroke-width="1"/></svg>
<svg style="left:67px;top:354px" width="16" height="16" viewBox="0 0 16 16"><rect x="2" y="1" width="1.500" height="1.500" fill="#b1246c"/><rect x="2" y="3.5" width="1.500" height="1.500" fill="#b1246c"/><rect x="2" y="6" width="1.500" height="1.500" fill="#b1246c"/><rect x="2" y="8.5" width="1.500" height="1.500" fill="#b1246c"/><rect x="2" y="11" width="1.500" height="1.500" fill="#b1246c"/><rect x="2" y="13.5" width="1.500" height="1.500" fill="#b1246c"/><rect x="5" y="1" width="1.500" height="1.500" fill="#b1246c"/><rect x="5" y="3.5" width="1.500" height="1.500" fill="#b1246c"/><rect x="5" y="6" width="1.500" height="1.500" fill="#b1246c"/><rect x="5" y="8.5" width="1.500" height="1.500" fill="#b1246c"/><rect x="5" y="11" width="1.500" height="1.500" fill="#b1246c"/><rect x="5" y="13.5" width="1.500" height="1.500" fill="#b1246c"/><rect x="8" y="1" width="1.500" height="1.500" fill="#b1246c"/><rect x="8" y="3.5" width="1.500" height="1.500" fill="#b1246c"/><rect x="8" y="6" width="1.500" height="1.500" fill="#b1246c"/><rect x="8" y="8.5" width="1.500" height="1.500" fill="#b1246c"/><rect x="8" y="11" width="1.500" height="1.500" fill="#b1246c"/><rect x="8" y="13.5" width="1.500" height="1.500" fill="#b1246c"/><rect x="11" y="1" width="1.500" height="1.500" fill="#b1246c"/><rect x="11" y="3.5" width="1.500" height="1.500" fill="#b1246c"/><rect x="11" y="6" width="1.500" height="1.500" fill="#b1246c"/><rect x="11" y="8.5" width="1.500" height="1.500" fill="#b1246c"/><rect x="11" y="11" width="1.500" height="1.500" fill="#b1246c"/><rect x="11" y="13.5" width="1.500" height="1.500" fill="#b1246c"/></svg>
<div class="t" style="left:87px;top:354px;">Data Sets</div>
<svg style="left:56px;top:373.5px" width="5" height="9" viewBox="0 0 5 9"><path d="M.5 .5 L4.500 4.500 L.5 8.500Z" fill="#fff" stroke="#a0a0a0" stroke-width="1"/></svg>
<svg style="left:67px;top:371px" width="16" height="16" viewBox="0 0 16 16"><path d="M7.500 11.500 V1.500" stroke="#3a6db5" stroke-width="1.100"/><path d="M6 3.500 L7.500 0.500 L9 3.500Z" fill="#3a6db5"/><path d="M7.500 11.500 L1 7.500" stroke="#2e9c3a" stroke-width="1.100"/><path d="M7.500 11.500 L15 8" stroke="#c8286e" stroke-width="1.100"/><path d="M15.500 7.500 L12.500 7.300 L13.700 9.800Z" fill="#c8286e"/></svg>
<div class="t" style="left:87px;top:371px;">Views</div>
<svg style="left:67px;top:388px" width="16" height="16" viewBox="0 0 16 16"><text x="0" y="7" font-family="Liberation Mono,monospace" font-size="7.500" font-weight="bold" fill="#b1246c" textLength="15">8.85</text><text x="0" y="14.500" font-family="Liberation Mono,monospace" font-size="7.500" font-weight="bold" fill="#b1246c" textLength="15">e-12</text></svg>
<div class="t" style="left:87px;top:388px;">Derived Values</div>
<svg style="left:67px;top:405px" width="16" height="16" viewBox="0 0 16 16"><rect x="1.500" y="1.500" width="12" height="12" fill="#fff" stroke="#b1246c" stroke-width="1.200"/><path d="M1.500 5 H13.500 M1.500 8 H13.500 M1.500 11 H13.500 M5.500 1.500 V13.500 M9.500 1.500 V13.500" stroke="#b1246c" stroke-width="1"/><rect x="1.500" y="1.500" width="12" height="3" fill="#b1246c"/></svg>
<div class="t" style="left:87px;top:405px;">Tables</div>
<svg style="left:56px;top:424.5px" width="5" height="9" viewBox="0 0 5 9"><path d="M.5 .5 L4.500 4.500 L.5 8.500Z" fill="#fff" stroke="#a0a0a0" stroke-width="1"/></svg>
<div class="a" style="left:66px;top:421px;width:133px;height:17px;background:#d9d9d9"></div>
<svg style="left:67px;top:422px" width="16" height="16" viewBox="0 0 16 16"><path d="M1 3 L3.500 1 H14 V12 L12 14.500 H1Z" fill="#b1246c"/><path d="M1 3 L3 4.500 H14 M3 4.500 V14.500" fill="none" stroke="#fff" stroke-width=".9"/></svg>
<div class="t" style="left:87px;top:422px;">Temperature, 3D (ht)</div>
<svg style="left:56px;top:441.5px" width="5" height="9" viewBox="0 0 5 9"><path d="M.5 .5 L4.500 4.500 L.5 8.500Z" fill="#fff" stroke="#a0a0a0" stroke-width="1"/></svg>
<svg style="left:67px;top:439px" width="16" height="16" viewBox="0 0 16 16"><path d="M1 1 H9 V7 H15 V15 H1Z" fill="#b1246c"/><path d="M11.500 .5 V6.500 M8.900 2 L14.100 5 M8.900 5 L14.100 2" stroke="#444" stroke-width="1.100"/></svg>
<div class="t" style="left:87px;top:439px;">Isothermal Contours (ht)</div>
<svg style="left:56px;top:458.5px" width="5" height="9" viewBox="0 0 5 9"><path d="M.5 .5 L4.500 4.500 L.5 8.500Z" fill="#fff" stroke="#a0a0a0" stroke-width="1"/></svg>
<svg style="left:67px;top:456px" width="16" height="16" viewBox="0 0 16 16"><path d="M1 3 L3.500 1 H9 V7 H14 V12 L12 14.500 H1Z" fill="#b1246c"/><path d="M1 3 L3 4.500 H9 M3 4.500 V14.500" fill="none" stroke="#fff" stroke-width=".9"/><path d="M11.500 .5 V6.500 M8.900 2 L14.100 5 M8.900 5 L14.100 2" stroke="#444" stroke-width="1.100"/></svg>
<div class="t" style="left:87px;top:456px;">Temperature, 3D (ht2)</div>
<svg style="left:56px;top:475.5px" width="5" height="9" viewBox="0 0 5 9"><path d="M.5 .5 L4.500 4.500 L.5 8.500Z" fill="#fff" stroke="#a0a0a0" stroke-width="1"/></svg>
<svg style="left:67px;top:473px" width="16" height="16" viewBox="0 0 16 16"><path d="M1 1 H9 V7 H15 V15 H1Z" fill="#b1246c"/><path d="M11.500 .5 V6.500 M8.900 2 L14.100 5 M8.900 5 L14.100 2" stroke="#444" stroke-width="1.100"/></svg>
<div class="t" style="left:87px;top:473px;">Isothermal Contours (ht2)</div>
<svg style="left:56px;top:492.5px" width="5" height="9" viewBox="0 0 5 9"><path d="M.5 .5 L4.500 4.500 L.5 8.500Z" fill="#fff" stroke="#a0a0a0" stroke-width="1"/></svg>
<svg style="left:67px;top:490px" width="16" height="16" viewBox="0 0 16 16"><path d="M1 1 H9 V7 H15 V15 H1Z" fill="#b1246c"/><path d="M11.500 .5 V6.500 M8.900 2 L14.100 5 M8.900 5 L14.100 2" stroke="#444" stroke-width="1.100"/></svg>
<div class="t" style="left:87px;top:490px;">Velocity (spf)</div>
<svg style="left:56px;top:509.5px" width="5" height="9" viewBox="0 0 5 9"><path d="M.5 .5 L4.500 4.500 L.5 8.500Z" fill="#fff" stroke="#a0a0a0" stroke-width="1"/></svg>
<svg style="left:67px;top:507px" width="16" height="16" viewBox="0 0 16 16"><path d="M1 1 H9 V7 H15 V15 H1Z" fill="#b1246c"/><path d="M11.500 .5 V6.500 M8.900 2 L14.100 5 M8.900 5 L14.100 2" stroke="#444" stroke-width="1.100"/></svg>
<div class="t" style="left:87px;top:507px;">Pressure (spf)</div>
<svg style="left:56px;top:526.5px" width="5" height="9" viewBox="0 0 5 9"><path d="M.5 .5 L4.500 4.500 L.5 8.500Z" fill="#fff" stroke="#a0a0a0" stroke-width="1"/></svg>
<svg style="left:67px;top:524px" width="16" height="16" viewBox="0 0 16 16"><path d="M1 3 L3.500 1 H9 V7 H14 V12 L12 14.500 H1Z" fill="#b1246c"/><path d="M1 3 L3 4.500 H9 M3 4.500 V14.500" fill="none" stroke="#fff" stroke-width=".9"/><path d="M11.500 .5 V6.500 M8.900 2 L14.100 5 M8.900 5 L14.100 2" stroke="#444" stroke-width="1.100"/></svg>
<div class="t" style="left:87px;top:524px;">Velocity (spf) 1</div>
<svg style="left:56px;top:543.5px" width="5" height="9" viewBox="0 0 5 9"><path d="M.5 .5 L4.500 4.500 L.5 8.500Z" fill="#fff" stroke="#a0a0a0" stroke-width="1"/></svg>
<svg style="left:67px;top:541px" width="16" height="16" viewBox="0 0 16 16"><path d="M1 1 H9 V7 H15 V15 H1Z" fill="#b1246c"/><path d="M11.500 .5 V6.500 M8.900 2 L14.100 5 M8.900 5 L14.100 2" stroke="#444" stroke-width="1.100"/></svg>
<div class="t" style="left:87px;top:541px;">Velocity, Streamlines</div>
<svg style="left:56px;top:560.5px" width="5" height="9" viewBox="0 0 5 9"><path d="M.5 .5 L4.500 4.500 L.5 8.500Z" fill="#fff" stroke="#a0a0a0" stroke-width="1"/></svg>
<svg style="left:67px;top:558px" width="16" height="16" viewBox="0 0 16 16"><path d="M.5 8 C3 1 6 1 8 8 C10 15 13 15 15.500 8" fill="none" stroke="#b1246c" stroke-width="1.300"/></svg>
<div class="t" style="left:87px;top:558px;">Coffee Temperature vs Time</div>
<svg style="left:56px;top:577.5px" width="5" height="9" viewBox="0 0 5 9"><path d="M.5 .5 L4.500 4.500 L.5 8.500Z" fill="#fff" stroke="#a0a0a0" stroke-width="1"/></svg>
<svg style="left:67px;top:575px" width="16" height="16" viewBox="0 0 16 16"><path d="M.5 8 C3 1 6 1 8 8 C10 15 13 15 15.500 8" fill="none" stroke="#b1246c" stroke-width="1.300"/></svg>
<div class="t" style="left:87px;top:575px;">Heat Transfer Coefficient</div>
<svg style="left:67px;top:592px" width="16" height="16" viewBox="0 0 16 16"><path d="M1.500 3.500 L4 1 H13 L15.500 4.500 V13.500 H4 L1.500 10.500Z" fill="#fff" stroke="#b1246c" stroke-width="1.100"/><path d="M1.500 3.500 L4 6.500 H15.500 M4 6.500 V13.500 M4 1 L6.500 6.500 M8 1 L10 6.500 M11 1 L13 6.500" fill="none" stroke="#b1246c" stroke-width=".9"/><rect x="6.500" y="8.500" width="6" height="3.500" fill="none" stroke="#b1246c" stroke-width=".9"/></svg>
<div class="t" style="left:87px;top:592px;">Export</div>
<svg style="left:67px;top:609px" width="16" height="16" viewBox="0 0 16 16"><rect x=".5" y="1.500" width="15" height="13" fill="#fff" stroke="#555" stroke-width="1"/><path d="M8 1.500 V14.500" stroke="#555" stroke-width="1"/><path d="M2.500 4.500 H6 M2.500 6.500 H6 M2.500 8.500 H6 M10 4.500 H13.500 M10 6.500 H13.500" stroke="#b1246c" stroke-width=".9"/><path d="M8 8 L14 14.500 L15.500 13 L11 8Z" fill="#b1246c"/><path d="M2 10 L6.500 13" stroke="#b1246c" stroke-width=".9"/></svg>
<div class="t" style="left:87px;top:609px;">Reports</div>
<div class="panel" style="left:427px;top:141px;width:820px;height:868px"></div>
<div class="a" style="left:428px;top:170px;width:818px;height:1px;background:#c9cacd"></div>
<div class="a" style="left:432px;top:147px;width:43px;height:24px;background:#fafbfe;border:1px solid #c9cacd;border-bottom:none;box-sizing:border-box"></div>
<div class="t" style="left:437px;top:152.5px;color:#2a4f8f;font-size:12.500px">Plot 1</div>
<div class="a" style="left:483px;top:147px;width:54px;height:23px;background:#ebebeb"></div>
<div class="t" style="left:487px;top:151.8px;font-size:12.500px;color:#1a1a1a">Settings</div>
<svg style="left:1205px;top:157px" width="8" height="5" viewBox="0 0 8 5"><path d="M0 0 H8 L4 4Z" fill="#c5cad6"/></svg>
<svg style="left:1219px;top:154px" width="8" height="10" viewBox="0 0 8 10"><path d="M2 0 H6 V4 L7.500 6 H.500 L2 4Z M3.500 6 H4.500 V9.500 H3.500Z" fill="#c5cad6"/></svg>
<svg style="left:1234px;top:154.5px" width="9" height="9" viewBox="0 0 9 9"><path d="M.5 .5 L8.500 8.500 M8.500 .5 L.5 8.500" stroke="#c5cad6" stroke-width="1.200"/></svg>
<div class="a" style="left:428px;top:171px;width:818px;height:28px;background:#f8f9fd"></div>
<svg style="left:434px;top:178.5px" width="14" height="14" viewBox="0 0 14 14"><circle cx="5.500" cy="5.500" r="4.300" fill="none" stroke="#2d4d77" stroke-width="1.300"/><path d="M8.800 8.800 L13 13" stroke="#2d4d77" stroke-width="2"/><path d="M3.500 5.500 H7.500" stroke="#2d4d77" stroke-width="1.100"/><path d="M5.500 3.500 V7.500" stroke="#2d4d77" stroke-width="1.100"/></svg>
<svg style="left:458px;top:178.5px" width="14" height="14" viewBox="0 0 14 14"><circle cx="5.500" cy="5.500" r="4.300" fill="none" stroke="#2d4d77" stroke-width="1.300"/><path d="M8.800 8.800 L13 13" stroke="#2d4d77" stroke-width="2"/><path d="M3.500 5.500 H7.500" stroke="#2d4d77" stroke-width="1.100"/></svg>
<svg style="left:481px;top:178.5px" width="16" height="14" viewBox="0 0 16 14"><rect x=".5" y="5.500" width="8" height="8" fill="none" stroke="#2d4d77" stroke-dasharray="1.500 1" stroke-width="1"/><circle cx="8" cy="5.500" r="4.300" fill="#f8f9fd" stroke="#2d4d77" stroke-width="1.300"/><path d="M11.200 8.800 L15.500 13" stroke="#2d4d77" stroke-width="2"/><path d="M6 5.500 H10 M8 3.500 V7.500" stroke="#2d4d77" stroke-width="1.100"/></svg>
<svg style="left:506px;top:178px" width="15" height="15" viewBox="0 0 15 15"><rect x=".5" y=".5" width="14" height="14" fill="#fff" stroke="#666" stroke-width="1"/><path d="M7.500 2 V13 M2 7.500 H13" stroke="#3f74b8" stroke-width="1"/><path d="M7.500 1.500 L9.500 4 H5.500Z M7.500 13.500 L9.500 11 H5.500Z M1.500 7.500 L4 5.500 V9.500Z M13.500 7.500 L11 5.500 V9.500Z" fill="#3f74b8"/></svg>
<div class="tsep" style="left:532px;top:178px;height:16px"></div>
<div class="tsep" style="left:596px;top:178px;height:16px"></div>
<div class="tsep" style="left:636px;top:178px;height:16px"></div>
<svg style="left:546px;top:177.5px" width="16" height="16" viewBox="0 0 16 16"><path d="M1.500 0 V15 M0 13.500 H16" stroke="#555" stroke-width="1" stroke-dasharray="1 1"/><path d="M5 0 V12.500 M8 0 V12.500 M11 0 V12.500 M14 0 V12.500" stroke="#3f74b8" stroke-width="1.200"/></svg>
<svg style="left:570px;top:177.5px" width="16" height="16" viewBox="0 0 16 16"><path d="M1.500 0 V15 M0 14.500 H16" stroke="#555" stroke-width="1" stroke-dasharray="1 1"/><path d="M3 1.500 H16 M3 4.500 H16 M3 7.500 H16 M3 10.500 H16" stroke="#3f74b8" stroke-width="1.200"/></svg>
<svg style="left:613px;top:178.5px" width="10" height="13" viewBox="0 0 10 13"><rect x="0" y="5" width="10" height="8" fill="#3f74b8"/><path d="M2 5.500 V4 A3 3 0 0 1 8 4 V5.500" fill="none" stroke="#3f74b8" stroke-width="1.600"/></svg>
<svg style="left:650px;top:180px" width="16" height="12" viewBox="0 0 16 12"><path d="M0 2.500 H4 L5 .5 H11 L12 2.500 H16 V12 H0Z" fill="#3f74b8"/><circle cx="8" cy="7" r="3.600" fill="#fff"/><circle cx="8" cy="7" r="2.200" fill="#3f74b8"/></svg>
<svg style="left:675px;top:178.5px" width="15" height="15" viewBox="0 0 15 15"><rect x="3" y=".5" width="9" height="5" fill="#fff" stroke="#3f74b8" stroke-width="1.200"/><rect x="0" y="5" width="15" height="6.500" rx="1" fill="#3f74b8"/><rect x="2.500" y="9.500" width="10" height="5" fill="#fff" stroke="#3f74b8" stroke-width="1.200"/><rect x="11" y="6.500" width="2.500" height="1.200" fill="#fff"/></svg>
<div class="a" style="left:428px;top:199px;width:818px;height:809px;background:#fff"></div>
<svg style="left:0;top:0" width="1920" height="1040" viewBox="0 0 1920 1040">
<defs><marker id="mstar" markerWidth="12" markerHeight="12" refX="6" refY="5.4" markerUnits="userSpaceOnUse"><path d="M.3 6 H11.700 M3.450 1.580 L8.550 10.420 M8.550 1.580 L3.450 10.420" stroke="#0000ff" stroke-width="2.400" fill="none"/></marker>
<marker id="mcirc" markerWidth="12" markerHeight="12" refX="6" refY="6" markerUnits="userSpaceOnUse"><circle cx="6" cy="6" r="3.200" fill="none" stroke="#22b03a" stroke-width="2.150"/></marker></defs>
<path d="M508.0 229.5 V967.5 M580.5 229.5 V967.5 M653.1 229.5 V967.5 M725.6 229.5 V967.5 M798.2 229.5 V967.5 M870.8 229.5 V967.5 M943.3 229.5 V967.5 M1015.8 229.5 V967.5 M1088.4 229.5 V967.5 M1160.9 229.5 V967.5 M1233.5 229.5 V967.5 M501.5 955.2 H1240.5 M501.5 917.4 H1240.5 M501.5 879.6 H1240.5 M501.5 841.8 H1240.5 M501.5 804.0 H1240.5 M501.5 766.2 H1240.5 M501.5 728.4 H1240.5 M501.5 690.6 H1240.5 M501.5 652.8 H1240.5 M501.5 615.0 H1240.5 M501.5 577.2 H1240.5 M501.5 539.4 H1240.5 M501.5 501.6 H1240.5 M501.5 463.8 H1240.5 M501.5 426.0 H1240.5 M501.5 388.2 H1240.5 M501.5 350.4 H1240.5 M501.5 312.6 H1240.5 M501.5 274.8 H1240.5 M501.5 237.0 H1240.5" stroke="#dedede" stroke-width="1" fill="none"/>
<polyline points="508.0,237.0 508.2,254.0 515.3,285.5 522.5,297.5 529.8,308.8 537.0,319.6 544.3,329.8 551.5,339.7 558.8,349.3 566.0,358.7 573.3,367.8 580.5,376.7 587.8,385.5 595.1,394.1 602.3,402.7 609.6,411.1 616.8,419.4 624.1,427.6 631.3,435.8 638.6,443.8 645.8,451.8 653.1,459.7 660.4,467.6 667.6,475.3 674.9,483.1 682.1,490.7 689.4,498.3 696.6,505.8 703.9,513.3 711.1,520.6 718.4,528.0 725.6,535.3 732.9,542.5 740.2,549.6 747.4,556.7 754.7,563.8 761.9,570.8 769.2,577.7 776.4,584.6 783.7,591.4 790.9,598.2 798.2,604.9 805.5,611.5 812.7,618.1 820.0,624.7 827.2,631.2 834.5,637.6 841.7,644.0 849.0,650.4 856.2,656.7 863.5,662.9 870.8,669.1 878.0,675.3 885.3,681.4 892.5,687.4 899.8,693.4 907.0,699.4 914.3,705.3 921.5,711.1 928.8,716.9 936.0,722.7 943.3,728.4 950.6,734.1 957.8,739.7 965.1,745.3 972.3,750.8 979.6,756.3 986.8,761.8 994.1,767.2 1001.3,772.5 1008.6,777.9 1015.8,783.1 1023.1,788.4 1030.4,793.6 1037.6,798.7 1044.9,803.8 1052.1,808.9 1059.4,813.9 1066.6,818.9 1073.9,823.8 1081.1,828.8 1088.4,833.6 1095.7,838.5 1102.9,843.2 1110.2,848.0 1117.4,852.7 1124.7,857.4 1131.9,862.0 1139.2,866.6 1146.4,871.2 1153.7,875.7 1160.9,880.2 1168.2,884.7 1175.5,889.1 1182.7,893.5 1190.0,897.8 1197.2,902.2 1204.5,906.4 1211.7,910.7 1219.0,914.9 1226.2,919.1 1233.5,923.2" fill="none" stroke="#0000ff" stroke-width="1"/>
<polyline points="515.3,285.5 522.5,297.5 529.8,308.8 537.0,319.6 544.3,329.8 551.5,339.7 558.8,349.3 566.0,358.7 573.3,367.8 580.5,376.7 587.8,385.5 595.1,394.1 602.3,402.7 609.6,411.1 616.8,419.4 624.1,427.6 631.3,435.8 638.6,443.8 645.8,451.8 653.1,459.7 660.4,467.6 667.6,475.3 674.9,483.1 682.1,490.7 689.4,498.3 696.6,505.8 703.9,513.3 711.1,520.6 718.4,528.0 725.6,535.3 732.9,542.5 740.2,549.6 747.4,556.7 754.7,563.8 761.9,570.8 769.2,577.7 776.4,584.6 783.7,591.4 790.9,598.2 798.2,604.9 805.5,611.5 812.7,618.1 820.0,624.7 827.2,631.2 834.5,637.6 841.7,644.0 849.0,650.4 856.2,656.7 863.5,662.9 870.8,669.1 878.0,675.3 885.3,681.4 892.5,687.4 899.8,693.4 907.0,699.4 914.3,705.3 921.5,711.1 928.8,716.9 936.0,722.7 943.3,728.4 950.6,734.1 957.8,739.7 965.1,745.3 972.3,750.8 979.6,756.3 986.8,761.8 994.1,767.2 1001.3,772.5 1008.6,777.9 1015.8,783.1 1023.1,788.4 1030.4,793.6 1037.6,798.7 1044.9,803.8 1052.1,808.9 1059.4,813.9 1066.6,818.9 1073.9,823.8 1081.1,828.8 1088.4,833.6 1095.7,838.5 1102.9,843.2 1110.2,848.0 1117.4,852.7 1124.7,857.4 1131.9,862.0 1139.2,866.6 1146.4,871.2 1153.7,875.7 1160.9,880.2 1168.2,884.7 1175.5,889.1 1182.7,893.5 1190.0,897.8 1197.2,902.2 1204.5,906.4 1211.7,910.7 1219.0,914.9 1226.2,919.1 1233.5,923.2" fill="none" stroke="none" marker-start="url(#mstar)" marker-mid="url(#mstar)" marker-end="url(#mstar)"/>
<path d="M508.0 235.1 V237.9" stroke="#0000ff" stroke-width="9" stroke-dasharray="2 2"/>
<polyline points="515.3,284.2 522.5,296.0 529.8,307.4 537.0,318.4 544.3,329.1 551.5,339.6 558.8,349.8 566.0,359.9 573.3,369.8 580.5,379.6 587.8,389.2 595.1,398.7 602.3,408.1 609.6,417.4 616.8,426.6 624.1,435.7 631.3,444.7 638.6,453.6 645.8,462.4 653.1,471.2 660.4,479.8 667.6,488.4 674.9,496.9 682.1,505.3 689.4,513.6 696.6,521.9 703.9,530.0 711.1,538.1 718.4,546.2 725.6,554.1 732.9,562.0 740.2,569.8 747.4,577.5 754.7,585.2 761.9,592.8 769.2,600.3 776.4,607.7 783.7,615.1 790.9,622.4 798.2,629.7 805.5,636.8 812.7,643.9 820.0,651.0 827.2,658.0 834.5,664.9 841.7,671.7 849.0,678.5 856.2,685.3 863.5,691.9 870.8,698.5 878.0,705.1 885.3,711.5 892.5,718.0 899.8,724.3 907.0,730.6 914.3,736.9 921.5,743.1 928.8,749.2 936.0,755.3 943.3,761.3 950.6,767.2 957.8,773.1 965.1,779.0 972.3,784.8 979.6,790.5 986.8,796.2 994.1,801.9 1001.3,807.5 1008.6,813.0 1015.8,818.5 1023.1,823.9 1030.4,829.3 1037.6,834.6 1044.9,839.9 1052.1,845.1 1059.4,850.3 1066.6,855.5 1073.9,860.6 1081.1,865.6 1088.4,870.6 1095.7,875.6 1102.9,880.5 1110.2,885.3 1117.4,890.1 1124.7,894.9 1131.9,899.6 1139.2,904.3 1146.4,909.0 1153.7,913.6 1160.9,918.1 1168.2,922.6 1175.5,927.1 1182.7,931.5 1190.0,935.9 1197.2,940.3 1204.5,944.6 1211.7,948.8 1219.0,953.1 1226.2,957.3 1233.5,961.4" fill="none" stroke="none" marker-start="url(#mcirc)" marker-mid="url(#mcirc)" marker-end="url(#mcirc)"/>
<path d="M508.0 237.4 V250.2" stroke="#22b03a" stroke-width="8.500" stroke-linecap="round"/>
<path d="M508.0 229.5 v5.500 M508.0 967.5 v-5.500 M580.5 229.5 v5.500 M580.5 967.5 v-5.500 M653.1 229.5 v5.500 M653.1 967.5 v-5.500 M725.6 229.5 v5.500 M725.6 967.5 v-5.500 M798.2 229.5 v5.500 M798.2 967.5 v-5.500 M870.8 229.5 v5.500 M870.8 967.5 v-5.500 M943.3 229.5 v5.500 M943.3 967.5 v-5.500 M1015.8 229.5 v5.500 M1015.8 967.5 v-5.500 M1088.4 229.5 v5.500 M1088.4 967.5 v-5.500 M1160.9 229.5 v5.500 M1160.9 967.5 v-5.500 M1233.5 229.5 v5.500 M1233.5 967.5 v-5.500 M501.5 955.2 h5.500 M1240.5 955.2 h-5.500 M501.5 917.4 h5.500 M1240.5 917.4 h-5.500 M501.5 879.6 h5.500 M1240.5 879.6 h-5.500 M501.5 841.8 h5.500 M1240.5 841.8 h-5.500 M501.5 804.0 h5.500 M1240.5 804.0 h-5.500 M501.5 766.2 h5.500 M1240.5 766.2 h-5.500 M501.5 728.4 h5.500 M1240.5 728.4 h-5.500 M501.5 690.6 h5.500 M1240.5 690.6 h-5.500 M501.5 652.8 h5.500 M1240.5 652.8 h-5.500 M501.5 615.0 h5.500 M1240.5 615.0 h-5.500 M501.5 577.2 h5.500 M1240.5 577.2 h-5.500 M501.5 539.4 h5.500 M1240.5 539.4 h-5.500 M501.5 501.6 h5.500 M1240.5 501.6 h-5.500 M501.5 463.8 h5.500 M1240.5 463.8 h-5.500 M501.5 426.0 h5.500 M1240.5 426.0 h-5.500 M501.5 388.2 h5.500 M1240.5 388.2 h-5.500 M501.5 350.4 h5.500 M1240.5 350.4 h-5.500 M501.5 312.6 h5.500 M1240.5 312.6 h-5.500 M501.5 274.8 h5.500 M1240.5 274.8 h-5.500 M501.5 237.0 h5.500 M1240.5 237.0 h-5.500" stroke="#000" stroke-width="1" fill="none"/>
<rect x="501.5" y="229.5" width="739.0" height="738.0" fill="none" stroke="#000" stroke-width="1.300"/>
<g font-family="DejaVu Sans, Liberation Sans, sans-serif" font-size="12.450" fill="#111">
<text x="496.500" y="959.1" text-anchor="end">52</text>
<text x="496.500" y="921.3" text-anchor="end">54</text>
<text x="496.500" y="883.5" text-anchor="end">56</text>
<text x="496.500" y="845.7" text-anchor="end">58</text>
<text x="496.500" y="807.9" text-anchor="end">60</text>
<text x="496.500" y="770.1" text-anchor="end">62</text>
<text x="496.500" y="732.3" text-anchor="end">64</text>
<text x="496.500" y="694.5" text-anchor="end">66</text>
<text x="496.500" y="656.7" text-anchor="end">68</text>
<text x="496.500" y="618.9" text-anchor="end">70</text>
<text x="496.500" y="581.1" text-anchor="end">72</text>
<text x="496.500" y="543.3" text-anchor="end">74</text>
<text x="496.500" y="505.5" text-anchor="end">76</text>
<text x="496.500" y="467.7" text-anchor="end">78</text>
<text x="496.500" y="429.9" text-anchor="end">80</text>
<text x="496.500" y="392.1" text-anchor="end">82</text>
<text x="496.500" y="354.3" text-anchor="end">84</text>
<text x="496.500" y="316.5" text-anchor="end">86</text>
<text x="496.500" y="278.7" text-anchor="end">88</text>
<text x="496.500" y="240.9" text-anchor="end">90</text>
<text x="507.0" y="986" text-anchor="middle">0</text>
<text x="579.5" y="986" text-anchor="middle">1</text>
<text x="652.1" y="986" text-anchor="middle">2</text>
<text x="724.6" y="986" text-anchor="middle">3</text>
<text x="797.2" y="986" text-anchor="middle">4</text>
<text x="869.8" y="986" text-anchor="middle">5</text>
<text x="942.3" y="986" text-anchor="middle">6</text>
<text x="1014.8" y="986" text-anchor="middle">7</text>
<text x="1087.4" y="986" text-anchor="middle">8</text>
<text x="1159.9" y="986" text-anchor="middle">9</text>
<text x="1233.5" y="986" text-anchor="middle">10</text>
<text x="870.500" y="1001.500" text-anchor="middle">Time (h)</text>
<text x="527.500" y="213.500" xml:space="preserve">Global: Isothermal domain temperature (degC)</text>
<text x="827.500" y="213.500">Global: Isothermal domain temperature (degC)</text>
<text transform="translate(440 598.500) rotate(-90)" text-anchor="middle">Isothermal domain temperature (degC)</text>
<rect x="978.500" y="246" width="247" height="52" fill="#bdbdbd"/>
<rect x="980.500" y="243.500" width="246.500" height="52" fill="#fff" stroke="#555" stroke-width="1.200"/>
<path d="M989 257 H1015" stroke="#0000ff" stroke-width="1.300"/><path d="M996.400 257 H1008 M999.650 252.580 L1004.750 261.420 M1004.750 252.580 L999.650 261.420" stroke="#0000ff" stroke-width="2.400" fill="none"/>
<circle cx="1002.100" cy="280" r="3.700" fill="none" stroke="#22b03a" stroke-width="2.300"/>
<text x="1019.500" y="261.500">Isothermal domain temperature</text>
<text x="1019.500" y="283.500">Isothermal domain temperature</text>
</g>
<g transform="translate(1230.5 213) scale(1.250)"><path d="M-8.500 -5 L6.500 -8 L9.500 4.500 L-5 8Z" fill="#eeeeee" opacity=".92"/><path d="M-5.500 -3.500 L5 -4.500 L6 3.500 L-4.500 4.500Z" fill="#1d3f9c"/><path d="M-3.800 3.300 L-4 -2.300 L3.500 -2 L0 3.300Z" fill="#f4e04a"/><path d="M0.500 3.300 L3.800 -1.500 L4.500 3Z" fill="#2c7fe0"/></g>
</svg>
<div class="panel" style="left:1252px;top:141px;width:665px;height:868px;border-color:#93c6f4"></div>
<div class="a" style="left:1253px;top:170px;width:663px;height:1px;background:#c9cacd"></div>
<div class="a" style="left:1257px;top:147px;width:62px;height:24px;background:#fafbfe;border:1px solid #c9cacd;border-bottom:none;box-sizing:border-box"></div>
<div class="t" style="left:1262px;top:152.5px;color:#1e88ee;font-size:12.500px">Graphics</div>
<div class="a" style="left:1326px;top:147px;width:67px;height:23px;background:#ebebeb"></div>
<div class="t" style="left:1330px;top:151.8px;font-size:12.500px;color:#1a1a1a">Messages</div>
<div class="a" style="left:1401px;top:147px;width:60px;height:23px;background:#ebebeb"></div>
<div class="t" style="left:1405px;top:151.8px;font-size:12.500px;color:#1a1a1a">Progress</div>
<div class="a" style="left:1469px;top:147px;width:30px;height:23px;background:#ebebeb"></div>
<div class="t" style="left:1473px;top:151.8px;font-size:12.500px;color:#1a1a1a">Log</div>
<svg style="left:1890px;top:157px" width="8" height="5" viewBox="0 0 8 5"><path d="M0 0 H8 L4 4.500Z" fill="#4a4a4a"/></svg>
<svg style="left:1905px;top:155.5px" width="8" height="10" viewBox="0 0 8 10"><path d="M2 0 H6 V4.500 L7.500 6.500 H.500 L2 4.500Z M3.500 6.500 H4.500 V10 H3.500Z" fill="#4a4a4a"/></svg>
<div class="a" style="left:1253px;top:171px;width:663px;height:28px;background:#f8f9fd"></div>
<svg style="left:1259px;top:178.5px" width="14" height="14" viewBox="0 0 14 14"><circle cx="5.500" cy="5.500" r="4.300" fill="none" stroke="#2d4d77" stroke-width="1.300"/><path d="M8.800 8.800 L13 13" stroke="#2d4d77" stroke-width="2"/><path d="M3.500 5.500 H7.500" stroke="#2d4d77" stroke-width="1.100"/><path d="M5.500 3.500 V7.500" stroke="#2d4d77" stroke-width="1.100"/></svg>
<svg style="left:1283px;top:178.5px" width="14" height="14" viewBox="0 0 14 14"><circle cx="5.500" cy="5.500" r="4.300" fill="none" stroke="#2d4d77" stroke-width="1.300"/><path d="M8.800 8.800 L13 13" stroke="#2d4d77" stroke-width="2"/><path d="M3.500 5.500 H7.500" stroke="#2d4d77" stroke-width="1.100"/></svg>
<svg style="left:1306px;top:178.5px" width="16" height="14" viewBox="0 0 16 14"><rect x=".5" y="5.500" width="8" height="8" fill="none" stroke="#2d4d77" stroke-dasharray="1.500 1" stroke-width="1"/><circle cx="8" cy="5.500" r="4.300" fill="#f8f9fd" stroke="#2d4d77" stroke-width="1.300"/><path d="M11.200 8.800 L15.500 13" stroke="#2d4d77" stroke-width="2"/><path d="M6 5.500 H10 M8 3.500 V7.500" stroke="#2d4d77" stroke-width="1.100"/></svg>
<svg style="left:1331px;top:178px" width="15" height="15" viewBox="0 0 15 15"><rect x=".5" y=".5" width="14" height="14" fill="#fff" stroke="#666" stroke-width="1"/><path d="M7.500 2 V13 M2 7.500 H13" stroke="#3f74b8" stroke-width="1"/><path d="M7.500 1.500 L9.500 4 H5.500Z M7.500 13.500 L9.500 11 H5.500Z M1.500 7.500 L4 5.500 V9.500Z M13.500 7.500 L11 5.500 V9.500Z" fill="#3f74b8"/></svg>
<div class="tsep" style="left:1357px;top:178px;height:16px"></div>
<div class="tsep" style="left:1560px;top:178px;height:16px"></div>
<div class="tsep" style="left:1625px;top:178px;height:16px"></div>
<svg style="left:1371px;top:178.5px" width="16" height="13" viewBox="0 0 16 13"><path d="M8 11.500 V1.500" stroke="#3a6db5" stroke-width="1.100"/><path d="M6.500 3.500 L8 0.500 L9.500 3.500Z" fill="#3a6db5"/><path d="M8 11.500 L1.500 6.500" stroke="#2e9c3a" stroke-width="1.100"/><path d="M8 11.500 L15.500 7" stroke="#d8286e" stroke-width="1.100"/><path d="M16 6.500 L13 6.500 L14.200 9Z" fill="#d8286e"/></svg>
<svg style="left:1394.5px;top:183.5px" width="7" height="4" viewBox="0 0 7 4"><path d="M0 0 H7 L3.500 4Z" fill="#222"/></svg>
<svg style="left:1414px;top:177.5px" width="16" height="16" viewBox="0 0 16 16"><path d="M2.500 13 V1.500" stroke="#2e9c3a" stroke-width="1.100"/><path d="M1 3.500 L2.500 .5 L4 3.500Z" fill="#2e9c3a"/><path d="M2.500 13.500 H14" stroke="#3a6db5" stroke-width="1.100"/><path d="M15.500 13.500 L12.500 12 V15Z" fill="#3a6db5"/><text x="5" y="9.500" font-family="DejaVu Sans,sans-serif" font-size="8.500" fill="#6b7f9c">xy</text></svg>
<svg style="left:1438px;top:177.5px" width="16" height="16" viewBox="0 0 16 16"><path d="M2.500 13 V1.500" stroke="#3a6db5" stroke-width="1.100"/><path d="M1 3.500 L2.500 .5 L4 3.500Z" fill="#3a6db5"/><path d="M2.500 13.500 H14" stroke="#2e9c3a" stroke-width="1.100"/><path d="M15.500 13.500 L12.500 12 V15Z" fill="#2e9c3a"/><text x="5" y="9.500" font-family="DejaVu Sans,sans-serif" font-size="8.500" fill="#6b7f9c">yz</text></svg>
<svg style="left:1462px;top:177.5px" width="16" height="16" viewBox="0 0 16 16"><path d="M2.500 13 V1.500" stroke="#cc2222" stroke-width="1.100"/><path d="M1 3.500 L2.500 .5 L4 3.500Z" fill="#cc2222"/><path d="M2.500 13.500 H14" stroke="#3a6db5" stroke-width="1.100"/><path d="M15.500 13.500 L12.500 12 V15Z" fill="#3a6db5"/><text x="5" y="9.500" font-family="DejaVu Sans,sans-serif" font-size="8.500" fill="#6b7f9c">zx</text></svg>
<div class="a" style="left:1485px;top:177px;width:18px;height:17px;background:#6f9fdc;border:1px solid #3a6db5;box-sizing:border-box;border-radius:2px"></div>
<svg style="left:1487px;top:179px" width="14" height="13" viewBox="0 0 14 13"><rect x="0" y="0" width="14" height="13" fill="#eaf1fb"/><path d="M2.500 2.500 H11.500 V10.500 H2.500Z M5.500 2.500 V10.500 M8.500 2.500 V10.500 M2.500 5.200 H11.500 M2.500 7.800 H11.500" fill="none" stroke="#3a6db5" stroke-width="1.100"/></svg>
<div class="a" style="left:1509px;top:177px;width:18px;height:17px;background:#6f9fdc;border:1px solid #3a6db5;box-sizing:border-box;border-radius:2px"></div>
<svg style="left:1511px;top:179px" width="14" height="13" viewBox="0 0 14 13"><rect x="0" y="0" width="14" height="13" fill="#cfe0f6"/><path d="M7 9 V2" stroke="#3a6db5"/><path d="M7 9 L2.500 6" stroke="#2e9c3a"/><path d="M7 9 L12 6" stroke="#d8286e"/></svg>
<div class="a" style="left:1533px;top:177px;width:18px;height:17px;background:#6f9fdc;border:1px solid #3a6db5;box-sizing:border-box;border-radius:2px"></div>
<svg style="left:1535px;top:179px" width="14" height="13" viewBox="0 0 14 13"><rect x="0" y="0" width="14" height="13" fill="#dfeaf8"/><rect x="9.500" y="1.500" width="2.500" height="10" fill="#e33"/><rect x="9.500" y="4" width="2.500" height="4" fill="#f5a623"/></svg>
<div class="a" style="left:1573px;top:177px;width:18px;height:17px;background:#6f9fdc;border:1px solid #3a6db5;box-sizing:border-box;border-radius:2px"></div>
<svg style="left:1575px;top:179px" width="14" height="13" viewBox="0 0 14 13"><path d="M2 4.500 H5 L10 1 V12 L5 8.500 H2Z" fill="#244a90"/><rect x="0" y="0" width="14" height="13" fill="#9fc0ea" opacity=".35"/></svg>
<svg style="left:1598px;top:178.5px" width="16" height="14" viewBox="0 0 16 14"><rect x="3.500" y=".5" width="11" height="9" fill="#e8eef6" stroke="#8aa3c4"/><rect x=".5" y="3.500" width="11" height="9" fill="#dce6f3" stroke="#8aa3c4"/></svg>
<svg style="left:1638px;top:180px" width="16" height="12" viewBox="0 0 16 12"><path d="M0 2.500 H4 L5 .5 H11 L12 2.500 H16 V12 H0Z" fill="#3f74b8"/><circle cx="8" cy="7" r="3.600" fill="#fff"/><circle cx="8" cy="7" r="2.200" fill="#3f74b8"/></svg>
<svg style="left:1662px;top:178.5px" width="15" height="15" viewBox="0 0 15 15"><rect x="3" y=".5" width="9" height="5" fill="#fff" stroke="#3f74b8" stroke-width="1.200"/><rect x="0" y="5" width="15" height="6.500" rx="1" fill="#3f74b8"/><rect x="2.500" y="9.500" width="10" height="5" fill="#fff" stroke="#3f74b8" stroke-width="1.200"/><rect x="11" y="6.500" width="2.500" height="1.200" fill="#fff"/></svg>
<div class="a" style="left:1253px;top:199px;width:663px;height:809px;background:linear-gradient(#80c6e9,#cce9f8)"></div>
<svg style="left:0;top:0" width="1920" height="1040" viewBox="0 0 1920 1040">
<defs>
<filter id="cm" x="1400" y="300" width="260" height="680" filterUnits="userSpaceOnUse" color-interpolation-filters="sRGB"><feGaussianBlur stdDeviation="1.2"/><feComponentTransfer><feFuncR type="table" tableValues="0.420 0.492 0.565 0.637 0.710 0.782 0.855 0.927 1.000 1.000 1.000 1.000 1.000 1.000 1.000 1.000 1.000 1.000 1.000 1.000 1.000 1.000 1.000 1.000 1.000 1.000 1.000 1.000 1.000 1.000 1.000 1.000 1.000 1.000 1.000 1.000 1.000 1.000 1.000 1.000 1.000"/><feFuncG type="table" tableValues="0.000 0.000 0.000 0.000 0.000 0.000 0.000 0.000 0.000 0.060 0.120 0.181 0.241 0.301 0.361 0.422 0.482 0.542 0.602 0.663 0.723 0.783 0.843 0.904 0.964 1.000 1.000 1.000 1.000 1.000 1.000 1.000 1.000 1.000 1.000 1.000 1.000 1.000 1.000 1.000 1.000"/><feFuncB type="table" tableValues="0.000 0.000 0.000 0.000 0.000 0.000 0.000 0.000 0.000 0.000 0.000 0.000 0.000 0.000 0.000 0.000 0.000 0.000 0.000 0.000 0.000 0.000 0.000 0.000 0.000 0.026 0.091 0.156 0.221 0.286 0.351 0.416 0.481 0.545 0.610 0.675 0.740 0.805 0.870 0.935 1.000"/><feFuncA type="linear" slope="0" intercept="1"/></feComponentTransfer></filter>
<filter id="b4" x="-20%" y="-20%" width="140%" height="140%"><feGaussianBlur stdDeviation="5"/></filter>
<filter id="b1" x="-20%" y="-20%" width="140%" height="140%"><feGaussianBlur stdDeviation="1.500"/></filter>
<filter id="b2" x="-20%" y="-20%" width="140%" height="140%"><feGaussianBlur stdDeviation="2.500"/></filter>
<clipPath id="cL"><path d="M1462.8 335.8L1533.8 340.5 L1534.6 876.2 L1440.8 868.0 C1440.5 853.3 1439.9 821.3 1439.2 780.0 C1438.5 738.7 1437.1 661.7 1436.4 620.0 C1435.7 578.3 1435.1 548.0 1434.8 530.0 C1434.5 512.0 1434.5 517.3 1434.6 512.3 C1434.7 507.3 1434.6 504.4 1435.4 500.0 C1436.2 495.6 1437.4 491.1 1439.2 486.2 C1441.0 481.3 1443.5 475.9 1446.2 470.8 C1448.9 465.7 1452.5 460.0 1455.4 455.4 C1458.3 450.8 1462.4 445.1 1463.8 443.0 L1462.8 335.8Z"/></clipPath>
<clipPath id="cR"><path d="M1533.8 340.5L1577.2 366.5 L1577.2 477.0 C1578.2 479.6 1581.0 486.7 1583.0 492.3 C1585.0 497.9 1587.5 504.4 1589.2 510.8 C1590.9 517.2 1592.0 524.1 1593.0 530.8 C1594.0 537.5 1594.9 542.6 1595.4 550.8 C1595.9 559.0 1595.8 563.5 1595.8 580.0 C1595.8 596.5 1595.7 616.7 1595.4 650.0 C1595.1 683.3 1594.3 735.0 1593.8 780.0 C1593.3 825.0 1592.5 896.9 1592.3 920.3 L1534.6 876.2Z"/></clipPath>
<linearGradient id="gNeck" x1="0" y1="330" x2="0" y2="480" gradientUnits="userSpaceOnUse" gradientTransform="translate(1534 0) skewY(3.800) translate(-1534 0)"><stop offset="0.067" stop-color="#333333"/><stop offset="0.180" stop-color="#383838"/><stop offset="0.333" stop-color="#545454"/><stop offset="0.467" stop-color="#737373"/><stop offset="0.600" stop-color="#999999"/><stop offset="0.687" stop-color="#adadad"/><stop offset="0.840" stop-color="#dbdbdb"/><stop offset="0.987" stop-color="#ffffff"/></linearGradient>
<linearGradient id="gNeckR" x1="0" y1="330" x2="0" y2="480" gradientUnits="userSpaceOnUse" gradientTransform="translate(1534 0) skewY(31) translate(-1534 0)"><stop offset="0.067" stop-color="#333333"/><stop offset="0.180" stop-color="#383838"/><stop offset="0.333" stop-color="#545454"/><stop offset="0.467" stop-color="#737373"/><stop offset="0.600" stop-color="#999999"/><stop offset="0.687" stop-color="#adadad"/><stop offset="0.840" stop-color="#dbdbdb"/><stop offset="0.987" stop-color="#ffffff"/></linearGradient>
<linearGradient id="gNW" x1="1489" y1="0" x2="1513.500" y2="0" gradientUnits="userSpaceOnUse"><stop offset="0" stop-color="#2e2e2e"/><stop offset=".45" stop-color="#454545"/><stop offset=".86" stop-color="#6b6b6b"/><stop offset="1" stop-color="#858585"/></linearGradient>
<linearGradient id="gNWR" x1="1561.500" y1="0" x2="1546.500" y2="0" gradientUnits="userSpaceOnUse"><stop offset="0" stop-color="#2e2e2e"/><stop offset=".45" stop-color="#454545"/><stop offset=".86" stop-color="#6b6b6b"/><stop offset="1" stop-color="#858585"/></linearGradient>
<linearGradient id="gBody" x1="1594" y1="0" x2="1636" y2="0" gradientUnits="userSpaceOnUse"><stop offset="0" stop-color="#6c0000"/><stop offset=".5" stop-color="#5c0000"/><stop offset="1" stop-color="#4c0000"/></linearGradient>
<linearGradient id="gCap" x1="1577" y1="0" x2="1606" y2="0" gradientUnits="userSpaceOnUse"><stop offset="0" stop-color="#7c0000"/><stop offset=".5" stop-color="#600000"/><stop offset="1" stop-color="#520000"/></linearGradient>
<radialGradient id="gTop" cx="1548" cy="352" r="75" gradientUnits="userSpaceOnUse" gradientTransform="translate(0 176) scale(1 .5)"><stop offset="0" stop-color="#fb5f5f"/><stop offset=".5" stop-color="#e85a5a"/><stop offset="1" stop-color="#c45757"/></radialGradient>
<radialGradient id="gSpec" cx="1590" cy="484" r="26" gradientUnits="userSpaceOnUse"><stop offset="0" stop-color="#d06a6a" stop-opacity=".95"/><stop offset=".4" stop-color="#b04040" stop-opacity=".6"/><stop offset="1" stop-color="#800000" stop-opacity="0"/></radialGradient>
<linearGradient id="gBar" x1="0" y1="971" x2="0" y2="251" gradientUnits="userSpaceOnUse"><stop offset="0" stop-color="#6b0000"/><stop offset=".2" stop-color="#ff0000"/><stop offset=".615" stop-color="#ffff00"/><stop offset="1" stop-color="#ffffff"/></linearGradient>
</defs>
<path d="M1461.8 299 L1462.5 336 M1530.3 276.6 L1530.6 309 M1578 280 L1578.2 318 M1629.3 309 L1628.6 500 M1683 340 L1671.5 873 M1604.7 410.5 L1692 462.4 M1634 573 L1687.7 607.7 M1630.4 711.5 L1684.2 748 M1630.5 843.8 L1681.5 882 M1405.7 431.3 L1462.8 412.2 M1409 576.6 L1435 568 M1411 715.4 L1438 705.8 M1415 848 L1440.8 838.5 M1434 875 L1449.6 869 M1480.4 912.3 L1547.5 885 M1524.6 950 L1657.3 894.2 M1515.4 873.8 L1592.3 933.8 M1629 886 L1655.4 904.6" stroke="#8a8a8a" stroke-width="1" fill="none"/>
<path d="M1577.2 477.0 C1578.2 479.6 1581.0 486.7 1583.0 492.3 C1585.0 497.9 1587.5 504.4 1589.2 510.8 C1590.9 517.2 1592.0 524.1 1593.0 530.8 C1594.0 537.5 1594.9 542.6 1595.4 550.8 C1595.9 559.0 1595.8 563.5 1595.8 580.0 C1595.8 596.5 1595.7 616.7 1595.4 650.0 C1595.1 683.3 1594.3 735.0 1593.8 780.0 C1593.3 825.0 1592.5 896.9 1592.3 920.3 C1593.8 919.8 1598.2 918.3 1601.0 917.0 C1603.8 915.7 1606.0 914.9 1609.2 912.3 C1612.4 909.7 1616.9 905.6 1620.0 901.5 C1623.1 897.4 1626.1 892.1 1627.7 887.7 C1629.3 883.3 1629.3 882.2 1629.8 875.0 C1630.3 867.8 1630.3 860.4 1630.5 844.6 C1630.7 828.8 1630.5 800.8 1630.8 780.0 C1631.1 759.2 1631.7 750.0 1632.3 720.0 C1632.9 690.0 1633.7 632.0 1634.2 600.0 C1634.7 568.0 1635.2 541.9 1635.4 527.7 C1635.6 513.5 1635.6 519.6 1635.2 515.0 C1634.8 510.4 1634.2 505.6 1633.0 500.0 C1631.8 494.4 1630.1 487.9 1627.7 481.5 C1625.3 475.1 1622.2 467.5 1618.5 461.5 C1614.8 455.5 1607.6 448.1 1605.4 445.4 L1604.6 453 Q1596 470 1577.2 477Z" fill="url(#gBody)" stroke="#1a0000" stroke-width=".8"/>
<path d="M1577.2 477.0 C1578.2 479.6 1581.0 486.7 1583.0 492.3 C1585.0 497.9 1587.5 504.4 1589.2 510.8 C1590.9 517.2 1592.0 524.1 1593.0 530.8 C1594.0 537.5 1594.9 542.6 1595.4 550.8 C1595.9 559.0 1595.8 563.5 1595.8 580.0 C1595.8 596.5 1595.7 616.7 1595.4 650.0 C1595.1 683.3 1594.3 735.0 1593.8 780.0 C1593.3 825.0 1592.5 896.9 1592.3 920.3 C1593.8 919.8 1598.2 918.3 1601.0 917.0 C1603.8 915.7 1606.0 914.9 1609.2 912.3 C1612.4 909.7 1616.9 905.6 1620.0 901.5 C1623.1 897.4 1626.1 892.1 1627.7 887.7 C1629.3 883.3 1629.3 882.2 1629.8 875.0 C1630.3 867.8 1630.3 860.4 1630.5 844.6 C1630.7 828.8 1630.5 800.8 1630.8 780.0 C1631.1 759.2 1631.7 750.0 1632.3 720.0 C1632.9 690.0 1633.7 632.0 1634.2 600.0 C1634.7 568.0 1635.2 541.9 1635.4 527.7 C1635.6 513.5 1635.6 519.6 1635.2 515.0 C1634.8 510.4 1634.2 505.6 1633.0 500.0 C1631.8 494.4 1630.1 487.9 1627.7 481.5 C1625.3 475.1 1622.2 467.5 1618.5 461.5 C1614.8 455.5 1607.6 448.1 1605.4 445.4 L1604.6 453 Q1596 470 1577.2 477Z" fill="url(#gSpec)"/>
<path d="M1595.8 559.2 C1612 555 1628 543 1635.400 527.700" fill="none" stroke="#1a0000" stroke-width=".9"/>
<path d="M1577.200 366.500 C1590 362 1602 354 1606.600 342.300 L1604.600 453 Q1596 470 1577.200 477Z" fill="url(#gCap)" stroke="#1a0000" stroke-width=".8"/>
<path d="M1577.200 385.400 C1590 381 1601 374 1605.600 362" fill="none" stroke="#1a0000" stroke-width=".9"/>
<g clip-path="url(#cL)"><g filter="url(#cm)">
<rect x="1400" y="300" width="260" height="680" fill="#fff"/>
<path d="M1417.8 902.9L1417.7 896.7 L1417.5 890.6 L1417.4 884.4 L1417.3 878.2 L1417.2 872.1 L1417.0 865.9 L1417.4 863.5 L1417.7 861.2 L1418.0 858.8 L1418.4 856.4 L1418.7 854.1 L1419.0 851.7 L1419.5 848.9 L1419.9 846.1 L1420.4 843.4 L1420.8 840.6 L1421.2 837.8 L1421.7 835.0 L1422.3 832.7 L1422.9 830.4 L1423.5 828.0 L1424.1 825.7 L1424.7 823.4 L1425.3 821.1 L1425.7 818.8 L1426.0 816.6 L1426.4 814.3 L1426.7 812.0 L1427.1 809.8 L1427.5 807.5 L1427.6 805.2 L1427.8 802.8 L1427.9 800.5 L1428.0 798.2 L1428.2 795.8 L1428.3 793.5 L1428.3 790.8 L1428.2 788.0 L1428.2 785.2 L1428.2 782.5 L1428.1 779.8 L1428.1 777.0 L1427.9 764.0 L1427.7 751.0 L1427.5 738.0 L1427.3 725.1 L1427.1 712.1 L1426.9 699.1 L1426.6 685.8 L1426.4 672.5 L1426.1 659.2 L1425.9 646.0 L1425.6 632.7 L1425.4 619.4 L1425.1 606.9 L1424.8 594.3 L1424.6 581.8 L1424.3 569.2 L1424.0 556.6 L1423.8 544.1 L1423.7 538.4 L1423.6 532.7 L1423.5 527.0 L1423.4 521.4 L1423.3 515.7 L1423.2 510.0 L1423.3 507.9 L1423.5 505.8 L1423.6 503.6 L1423.8 501.5 L1423.9 499.4 L1424.1 497.3 L1424.8 494.9 L1425.5 492.5 L1426.3 490.1 L1427.0 487.6 L1427.7 485.2 L1428.5 482.8 L1429.8 480.0 L1431.0 477.1 L1432.3 474.3 L1433.6 471.5 L1434.9 468.6 L1436.2 465.8 L1437.9 463.0 L1439.6 460.2 L1441.3 457.4 L1443.0 454.6 L1444.7 451.9 L1446.3 449.1 L1447.8 446.8 L1449.3 444.5 L1450.8 442.2 L1452.3 439.9 L1453.8 437.6 L1455.3 435.4 L1456.9 433.6 L1458.4 431.8 L1459.9 430.0 L1461.4 428.2 L1462.9 426.4 L1464.5 424.6 L1466.5 422.9 L1468.5 421.1 L1470.5 419.4 L1472.5 417.7 L1474.5 416.0 L1476.5 414.2 L1474.7 412.7 L1472.9 411.1 L1471.2 409.5 L1469.4 407.9 L1467.7 406.4 L1465.9 404.8 L1465.1 402.9 L1464.3 401.0 L1463.5 399.1 L1462.8 397.3 L1462.0 395.4 L1461.2 393.5 L1461.2 382.1 L1461.2 370.7 L1461.2 359.2 L1461.2 347.8 L1461.2 336.4 L1461.2 325.0L1560.0 325.0 L1560.0 912.0Z" fill="#101010"/>
<path d="M1444.7 905.3L1444.5 899.1 L1444.4 892.9 L1444.2 886.8 L1444.1 880.6 L1444.0 874.4 L1443.8 868.3 L1443.7 865.6 L1443.6 862.9 L1443.5 860.2 L1443.4 857.4 L1443.3 854.7 L1443.2 852.0 L1443.1 849.8 L1443.0 847.5 L1442.9 845.2 L1442.8 842.9 L1442.7 840.7 L1442.6 838.4 L1442.5 836.2 L1442.3 834.1 L1442.2 831.9 L1442.1 829.8 L1442.0 827.6 L1441.9 825.5 L1441.8 823.3 L1441.7 821.2 L1441.6 819.0 L1441.5 816.9 L1441.4 814.7 L1441.3 812.6 L1441.2 810.2 L1441.1 807.9 L1441.0 805.6 L1441.0 803.2 L1440.9 800.9 L1440.8 798.6 L1440.7 795.5 L1440.7 792.5 L1440.6 789.5 L1440.5 786.4 L1440.5 783.4 L1440.4 780.4 L1440.2 767.0 L1440.0 753.6 L1439.8 740.2 L1439.6 726.9 L1439.4 713.5 L1439.2 700.1 L1439.0 686.8 L1438.7 673.4 L1438.5 660.1 L1438.3 646.8 L1438.0 633.4 L1437.8 620.1 L1437.6 607.6 L1437.4 595.1 L1437.1 582.6 L1436.9 570.1 L1436.7 557.6 L1436.4 545.1 L1436.4 539.7 L1436.3 534.3 L1436.2 528.9 L1436.2 523.4 L1436.1 518.0 L1436.1 512.6 L1436.2 510.6 L1436.3 508.5 L1436.5 506.5 L1436.6 504.4 L1436.7 502.4 L1436.9 500.3 L1437.5 498.1 L1438.1 495.8 L1438.7 493.5 L1439.3 491.2 L1440.0 488.9 L1440.6 486.6 L1441.7 484.1 L1442.9 481.6 L1444.0 479.0 L1445.2 476.5 L1446.3 474.0 L1447.5 471.4 L1449.0 468.9 L1450.5 466.4 L1452.0 463.8 L1453.5 461.3 L1455.0 458.8 L1456.6 456.2 L1457.9 454.2 L1459.3 452.1 L1460.7 450.1 L1462.1 448.1 L1463.5 446.0 L1464.9 444.0 L1466.4 442.3 L1468.0 440.7 L1469.5 439.0 L1471.0 437.4 L1472.6 435.7 L1474.1 434.1 L1476.1 432.6 L1478.1 431.1 L1480.1 429.7 L1482.1 428.2 L1484.1 426.7 L1486.1 425.2 L1485.4 423.2 L1484.7 421.1 L1484.0 419.1 L1483.2 417.0 L1482.5 415.0 L1481.8 412.9 L1481.5 410.0 L1481.3 407.0 L1481.0 404.1 L1480.7 401.1 L1480.4 398.1 L1480.2 395.2 L1480.2 383.5 L1480.2 371.8 L1480.2 360.1 L1480.2 348.4 L1480.2 336.7 L1480.2 325.0L1560.0 325.0 L1560.0 912.0Z" fill="#181818"/>
<path d="M1447.7 905.5L1447.6 899.4 L1447.4 893.2 L1447.3 887.0 L1447.2 880.9 L1447.0 874.7 L1446.9 868.5 L1446.7 865.8 L1446.6 863.1 L1446.4 860.3 L1446.3 857.6 L1446.1 854.8 L1446.0 852.1 L1445.8 849.9 L1445.7 847.6 L1445.5 845.4 L1445.3 843.2 L1445.1 841.0 L1445.0 838.8 L1444.8 836.6 L1444.6 834.5 L1444.4 832.4 L1444.2 830.3 L1444.0 828.1 L1443.8 826.0 L1443.6 823.9 L1443.5 821.7 L1443.3 819.6 L1443.1 817.4 L1443.0 815.3 L1442.8 813.2 L1442.7 810.8 L1442.6 808.5 L1442.5 806.2 L1442.4 803.8 L1442.3 801.5 L1442.2 799.2 L1442.2 796.1 L1442.1 793.0 L1442.0 790.0 L1441.9 786.9 L1441.9 783.8 L1441.8 780.8 L1441.6 767.3 L1441.4 753.9 L1441.2 740.5 L1441.0 727.1 L1440.8 713.7 L1440.6 700.2 L1440.4 686.9 L1440.1 673.5 L1439.9 660.2 L1439.7 646.8 L1439.5 633.5 L1439.2 620.2 L1439.0 607.7 L1438.8 595.2 L1438.6 582.7 L1438.3 570.2 L1438.1 557.7 L1437.9 545.2 L1437.8 539.8 L1437.8 534.5 L1437.7 529.1 L1437.6 523.7 L1437.6 518.3 L1437.5 512.9 L1437.7 510.9 L1437.8 508.8 L1437.9 506.8 L1438.0 504.8 L1438.2 502.7 L1438.3 500.7 L1438.9 498.4 L1439.5 496.2 L1440.1 493.9 L1440.7 491.6 L1441.3 489.3 L1442.0 487.1 L1443.1 484.6 L1444.2 482.1 L1445.4 479.6 L1446.5 477.1 L1447.6 474.6 L1448.8 472.1 L1450.3 469.6 L1451.7 467.1 L1453.2 464.6 L1454.7 462.0 L1456.2 459.5 L1457.7 457.0 L1459.1 455.0 L1460.5 453.0 L1461.8 451.0 L1463.2 449.0 L1464.6 447.0 L1466.0 445.0 L1467.5 443.3 L1469.0 441.7 L1470.6 440.1 L1472.1 438.4 L1473.7 436.8 L1475.2 435.2 L1477.2 433.7 L1479.2 432.3 L1481.2 430.8 L1483.2 429.4 L1485.2 427.9 L1487.2 426.5 L1486.6 424.4 L1486.0 422.3 L1485.4 420.2 L1484.8 418.1 L1484.2 416.0 L1483.6 413.8 L1483.4 410.8 L1483.2 407.7 L1483.0 404.6 L1482.7 401.5 L1482.5 398.5 L1482.3 395.4 L1482.3 383.7 L1482.3 371.9 L1482.3 360.2 L1482.3 348.5 L1482.3 336.7 L1482.3 325.0L1560.0 325.0 L1560.0 912.0Z" fill="#1f1f1f"/>
<path d="M1450.8 905.8L1450.6 899.6 L1450.5 893.5 L1450.3 887.3 L1450.2 881.1 L1450.1 875.0 L1449.9 868.8 L1449.7 866.0 L1449.5 863.2 L1449.3 860.5 L1449.1 857.7 L1448.9 854.9 L1448.8 852.1 L1448.5 850.0 L1448.3 847.8 L1448.0 845.6 L1447.8 843.5 L1447.6 841.3 L1447.3 839.2 L1447.1 837.0 L1446.8 834.9 L1446.5 832.8 L1446.2 830.7 L1445.9 828.6 L1445.7 826.5 L1445.4 824.4 L1445.2 822.2 L1445.0 820.1 L1444.8 818.0 L1444.6 815.9 L1444.4 813.7 L1444.3 811.4 L1444.2 809.1 L1444.0 806.7 L1443.9 804.4 L1443.8 802.1 L1443.7 799.7 L1443.6 796.6 L1443.5 793.5 L1443.4 790.4 L1443.4 787.3 L1443.3 784.2 L1443.2 781.2 L1443.0 767.7 L1442.8 754.2 L1442.6 740.8 L1442.4 727.3 L1442.2 713.8 L1442.0 700.3 L1441.8 687.0 L1441.5 673.6 L1441.3 660.3 L1441.1 646.9 L1440.9 633.6 L1440.6 620.2 L1440.4 607.8 L1440.2 595.3 L1440.0 582.8 L1439.8 570.3 L1439.5 557.8 L1439.3 545.3 L1439.3 540.0 L1439.2 534.6 L1439.1 529.3 L1439.1 523.9 L1439.0 518.5 L1439.0 513.2 L1439.1 511.2 L1439.2 509.1 L1439.4 507.1 L1439.5 505.1 L1439.6 503.1 L1439.8 501.0 L1440.4 498.8 L1441.0 496.5 L1441.5 494.3 L1442.1 492.0 L1442.7 489.8 L1443.3 487.5 L1444.4 485.0 L1445.6 482.6 L1446.7 480.1 L1447.8 477.7 L1448.9 475.2 L1450.0 472.7 L1451.5 470.2 L1453.0 467.8 L1454.5 465.3 L1455.9 462.8 L1457.4 460.3 L1458.9 457.8 L1460.2 455.9 L1461.6 453.9 L1463.0 451.9 L1464.3 449.9 L1465.7 447.9 L1467.1 445.9 L1468.6 444.3 L1470.1 442.7 L1471.7 441.1 L1473.2 439.5 L1474.7 437.8 L1476.3 436.2 L1478.3 434.8 L1480.3 433.4 L1482.3 432.0 L1484.3 430.6 L1486.3 429.2 L1488.3 427.8 L1487.8 425.6 L1487.3 423.4 L1486.9 421.3 L1486.4 419.1 L1485.9 416.9 L1485.4 414.8 L1485.3 411.6 L1485.1 408.4 L1484.9 405.2 L1484.8 402.0 L1484.6 398.8 L1484.5 395.6 L1484.5 383.8 L1484.5 372.1 L1484.5 360.3 L1484.5 348.5 L1484.5 336.8 L1484.5 325.0L1560.0 325.0 L1560.0 912.0Z" fill="#262626"/>
<path d="M1453.8 906.1L1453.7 899.9 L1453.5 893.7 L1453.4 887.6 L1453.3 881.4 L1453.1 875.2 L1453.0 869.1 L1452.7 866.3 L1452.5 863.4 L1452.2 860.6 L1452.0 857.8 L1451.7 855.0 L1451.5 852.2 L1451.2 850.1 L1450.9 847.9 L1450.6 845.8 L1450.3 843.7 L1450.0 841.6 L1449.7 839.5 L1449.3 837.4 L1449.0 835.4 L1448.6 833.3 L1448.3 831.2 L1447.9 829.1 L1447.5 827.0 L1447.3 824.9 L1447.0 822.8 L1446.8 820.7 L1446.5 818.5 L1446.2 816.4 L1446.0 814.3 L1445.8 812.0 L1445.7 809.6 L1445.5 807.3 L1445.4 805.0 L1445.2 802.6 L1445.1 800.3 L1445.0 797.2 L1444.9 794.1 L1444.8 790.9 L1444.8 787.8 L1444.7 784.7 L1444.6 781.5 L1444.4 768.0 L1444.2 754.5 L1444.0 741.0 L1443.8 727.5 L1443.6 714.0 L1443.4 700.5 L1443.2 687.1 L1443.0 673.7 L1442.7 660.4 L1442.5 647.0 L1442.3 633.7 L1442.1 620.3 L1441.8 607.8 L1441.6 595.4 L1441.4 582.9 L1441.2 570.4 L1441.0 557.9 L1440.8 545.5 L1440.7 540.1 L1440.7 534.8 L1440.6 529.5 L1440.5 524.1 L1440.5 518.8 L1440.4 513.5 L1440.6 511.5 L1440.7 509.5 L1440.8 507.4 L1441.0 505.4 L1441.1 503.4 L1441.2 501.4 L1441.8 499.1 L1442.4 496.9 L1443.0 494.7 L1443.5 492.4 L1444.1 490.2 L1444.7 487.9 L1445.8 485.5 L1446.9 483.1 L1448.0 480.7 L1449.1 478.2 L1450.2 475.8 L1451.3 473.4 L1452.8 470.9 L1454.2 468.5 L1455.7 466.0 L1457.1 463.6 L1458.6 461.1 L1460.0 458.6 L1461.4 456.7 L1462.7 454.7 L1464.1 452.8 L1465.4 450.8 L1466.8 448.9 L1468.1 446.9 L1469.7 445.3 L1471.2 443.7 L1472.8 442.1 L1474.3 440.5 L1475.8 438.9 L1477.4 437.3 L1479.4 435.9 L1481.4 434.5 L1483.4 433.2 L1485.4 431.8 L1487.4 430.4 L1489.4 429.0 L1489.0 426.8 L1488.7 424.6 L1488.3 422.3 L1487.9 420.1 L1487.6 417.9 L1487.2 415.7 L1487.1 412.4 L1487.0 409.1 L1486.9 405.7 L1486.8 402.4 L1486.7 399.1 L1486.6 395.8 L1486.6 384.0 L1486.6 372.2 L1486.6 360.4 L1486.6 348.6 L1486.6 336.8 L1486.6 325.0L1560.0 325.0 L1560.0 912.0Z" fill="#2e2e2e"/>
<path d="M1456.9 906.3L1456.7 900.2 L1456.6 894.0 L1456.4 887.8 L1456.3 881.7 L1456.2 875.5 L1456.0 869.3 L1455.7 866.5 L1455.4 863.6 L1455.1 860.8 L1454.8 857.9 L1454.5 855.1 L1454.2 852.2 L1453.9 850.1 L1453.5 848.1 L1453.2 846.1 L1452.8 844.0 L1452.4 842.0 L1452.1 839.9 L1451.6 837.9 L1451.2 835.8 L1450.8 833.7 L1450.3 831.6 L1449.9 829.6 L1449.4 827.5 L1449.1 825.4 L1448.8 823.3 L1448.5 821.2 L1448.2 819.1 L1447.9 817.0 L1447.5 814.9 L1447.4 812.6 L1447.2 810.2 L1447.0 807.9 L1446.8 805.6 L1446.7 803.2 L1446.5 800.9 L1446.4 797.7 L1446.3 794.6 L1446.2 791.4 L1446.2 788.2 L1446.1 785.1 L1446.0 781.9 L1445.8 768.4 L1445.6 754.8 L1445.4 741.2 L1445.2 727.7 L1445.0 714.1 L1444.8 700.6 L1444.6 687.2 L1444.4 673.8 L1444.1 660.5 L1443.9 647.1 L1443.7 633.8 L1443.5 620.4 L1443.3 607.9 L1443.0 595.4 L1442.8 583.0 L1442.6 570.5 L1442.4 558.0 L1442.2 545.6 L1442.1 540.3 L1442.1 535.0 L1442.0 529.7 L1442.0 524.4 L1442.0 519.1 L1441.9 513.8 L1442.0 511.8 L1442.2 509.8 L1442.3 507.8 L1442.4 505.7 L1442.5 503.7 L1442.7 501.7 L1443.2 499.5 L1443.8 497.3 L1444.4 495.1 L1444.9 492.8 L1445.5 490.6 L1446.1 488.4 L1447.2 486.0 L1448.3 483.6 L1449.3 481.2 L1450.4 478.8 L1451.5 476.4 L1452.6 474.0 L1454.0 471.6 L1455.5 469.2 L1456.9 466.7 L1458.3 464.3 L1459.8 461.9 L1461.2 459.5 L1462.5 457.5 L1463.9 455.6 L1465.2 453.7 L1466.6 451.8 L1467.9 449.8 L1469.2 447.9 L1470.8 446.3 L1472.3 444.7 L1473.9 443.1 L1475.4 441.6 L1476.9 440.0 L1478.5 438.4 L1480.5 437.0 L1482.5 435.7 L1484.5 434.3 L1486.5 433.0 L1488.5 431.6 L1490.5 430.2 L1490.2 428.0 L1490.0 425.7 L1489.8 423.4 L1489.5 421.2 L1489.3 418.9 L1489.0 416.6 L1489.0 413.2 L1488.9 409.7 L1488.9 406.3 L1488.9 402.8 L1488.8 399.4 L1488.8 396.0 L1488.8 384.1 L1488.8 372.3 L1488.8 360.5 L1488.8 348.7 L1488.8 336.8 L1488.8 325.0L1560.0 325.0 L1560.0 912.0Z" fill="#363636"/>
<path d="M1459.9 906.6L1459.8 900.4 L1459.6 894.3 L1459.5 888.1 L1459.4 881.9 L1459.2 875.8 L1459.1 869.6 L1458.7 866.7 L1458.4 863.8 L1458.0 860.9 L1457.7 858.0 L1457.3 855.1 L1457.0 852.2 L1456.6 850.2 L1456.2 848.3 L1455.7 846.3 L1455.3 844.3 L1454.9 842.3 L1454.5 840.3 L1453.9 838.3 L1453.4 836.2 L1452.9 834.2 L1452.4 832.1 L1451.8 830.1 L1451.3 828.0 L1450.9 825.9 L1450.6 823.8 L1450.2 821.7 L1449.8 819.6 L1449.5 817.6 L1449.1 815.5 L1448.9 813.1 L1448.7 810.8 L1448.5 808.5 L1448.3 806.1 L1448.1 803.8 L1447.9 801.5 L1447.8 798.3 L1447.7 795.1 L1447.7 791.9 L1447.6 788.7 L1447.5 785.5 L1447.4 782.3 L1447.2 768.7 L1447.0 755.1 L1446.8 741.5 L1446.6 727.9 L1446.4 714.3 L1446.2 700.7 L1446.0 687.3 L1445.8 673.9 L1445.5 660.6 L1445.3 647.2 L1445.1 633.8 L1444.9 620.5 L1444.7 608.0 L1444.5 595.5 L1444.3 583.1 L1444.1 570.6 L1443.8 558.2 L1443.6 545.7 L1443.6 540.4 L1443.5 535.2 L1443.5 529.9 L1443.5 524.6 L1443.4 519.3 L1443.4 514.1 L1443.5 512.1 L1443.6 510.1 L1443.7 508.1 L1443.9 506.1 L1444.0 504.1 L1444.1 502.1 L1444.7 499.9 L1445.2 497.7 L1445.8 495.4 L1446.3 493.2 L1446.9 491.0 L1447.5 488.8 L1448.5 486.4 L1449.6 484.1 L1450.7 481.7 L1451.7 479.4 L1452.8 477.0 L1453.9 474.7 L1455.3 472.3 L1456.7 469.9 L1458.1 467.5 L1459.5 465.1 L1461.0 462.7 L1462.4 460.3 L1463.7 458.4 L1465.0 456.5 L1466.3 454.6 L1467.7 452.7 L1469.0 450.8 L1470.3 448.9 L1471.9 447.3 L1473.4 445.7 L1474.9 444.2 L1476.5 442.6 L1478.0 441.0 L1479.6 439.5 L1481.6 438.1 L1483.6 436.8 L1485.6 435.5 L1487.6 434.2 L1489.6 432.8 L1491.6 431.5 L1491.5 429.2 L1491.3 426.8 L1491.2 424.5 L1491.1 422.2 L1491.0 419.9 L1490.8 417.5 L1490.9 414.0 L1490.9 410.4 L1490.9 406.8 L1490.9 403.3 L1490.9 399.7 L1490.9 396.2 L1490.9 384.3 L1490.9 372.4 L1490.9 360.6 L1490.9 348.7 L1490.9 336.9 L1490.9 325.0L1560.0 325.0 L1560.0 912.0Z" fill="#3f3f3f"/>
<path d="M1463.0 906.9L1462.8 900.7 L1462.7 894.6 L1462.5 888.4 L1462.4 882.2 L1462.3 876.1 L1462.1 869.9 L1461.7 866.9 L1461.3 864.0 L1460.9 861.1 L1460.5 858.1 L1460.1 855.2 L1459.8 852.3 L1459.3 850.3 L1458.8 848.4 L1458.3 846.5 L1457.8 844.6 L1457.3 842.6 L1456.8 840.7 L1456.2 838.7 L1455.6 836.6 L1455.0 834.6 L1454.4 832.6 L1453.8 830.5 L1453.2 828.5 L1452.8 826.4 L1452.4 824.3 L1451.9 822.3 L1451.5 820.2 L1451.1 818.1 L1450.7 816.0 L1450.5 813.7 L1450.2 811.4 L1450.0 809.0 L1449.8 806.7 L1449.6 804.4 L1449.3 802.0 L1449.2 798.8 L1449.2 795.6 L1449.1 792.4 L1449.0 789.1 L1448.9 785.9 L1448.8 782.7 L1448.6 769.0 L1448.4 755.4 L1448.2 741.8 L1448.0 728.1 L1447.8 714.5 L1447.6 700.8 L1447.4 687.4 L1447.2 674.1 L1447.0 660.7 L1446.7 647.3 L1446.5 633.9 L1446.3 620.5 L1446.1 608.1 L1445.9 595.6 L1445.7 583.2 L1445.5 570.7 L1445.3 558.3 L1445.1 545.8 L1445.0 540.6 L1445.0 535.3 L1445.0 530.1 L1444.9 524.9 L1444.9 519.6 L1444.8 514.4 L1445.0 512.4 L1445.1 510.4 L1445.2 508.4 L1445.3 506.4 L1445.5 504.4 L1445.6 502.4 L1446.1 500.2 L1446.7 498.0 L1447.2 495.8 L1447.8 493.6 L1448.3 491.4 L1448.8 489.2 L1449.9 486.9 L1450.9 484.6 L1452.0 482.3 L1453.1 479.9 L1454.1 477.6 L1455.2 475.3 L1456.6 472.9 L1458.0 470.6 L1459.3 468.2 L1460.7 465.8 L1462.1 463.4 L1463.5 461.1 L1464.8 459.2 L1466.2 457.3 L1467.5 455.5 L1468.8 453.6 L1470.1 451.7 L1471.4 449.9 L1472.9 448.3 L1474.5 446.8 L1476.0 445.2 L1477.6 443.6 L1479.1 442.1 L1480.7 440.5 L1482.7 439.2 L1484.7 437.9 L1486.7 436.6 L1488.7 435.3 L1490.7 434.0 L1492.7 432.8 L1492.7 430.4 L1492.7 428.0 L1492.7 425.6 L1492.7 423.2 L1492.7 420.8 L1492.7 418.5 L1492.7 414.8 L1492.8 411.1 L1492.9 407.4 L1492.9 403.7 L1493.0 400.0 L1493.1 396.3 L1493.1 384.5 L1493.1 372.6 L1493.1 360.7 L1493.1 348.8 L1493.1 336.9 L1493.1 325.0L1560.0 325.0 L1560.0 912.0Z" fill="#494949"/>
<path d="M1466.0 907.2L1465.9 901.0 L1465.7 894.8 L1465.6 888.7 L1465.5 882.5 L1465.3 876.3 L1465.2 870.2 L1464.7 867.2 L1464.3 864.2 L1463.8 861.2 L1463.4 858.3 L1462.9 855.3 L1462.5 852.3 L1462.0 850.4 L1461.4 848.6 L1460.9 846.7 L1460.3 844.8 L1459.8 842.9 L1459.2 841.1 L1458.5 839.1 L1457.8 837.1 L1457.1 835.0 L1456.5 833.0 L1455.8 831.0 L1455.1 829.0 L1454.6 826.9 L1454.1 824.9 L1453.7 822.8 L1453.2 820.7 L1452.7 818.7 L1452.3 816.6 L1452.0 814.3 L1451.8 811.9 L1451.5 809.6 L1451.3 807.3 L1451.0 804.9 L1450.8 802.6 L1450.7 799.4 L1450.6 796.1 L1450.5 792.8 L1450.4 789.6 L1450.3 786.3 L1450.2 783.1 L1450.0 769.4 L1449.8 755.7 L1449.6 742.0 L1449.4 728.3 L1449.2 714.6 L1449.0 700.9 L1448.8 687.5 L1448.6 674.2 L1448.4 660.8 L1448.1 647.4 L1447.9 634.0 L1447.7 620.6 L1447.5 608.2 L1447.3 595.7 L1447.1 583.3 L1446.9 570.8 L1446.7 558.4 L1446.5 545.9 L1446.5 540.7 L1446.4 535.5 L1446.4 530.3 L1446.4 525.1 L1446.3 519.9 L1446.3 514.7 L1446.4 512.7 L1446.5 510.7 L1446.7 508.7 L1446.8 506.7 L1446.9 504.8 L1447.0 502.8 L1447.6 500.6 L1448.1 498.4 L1448.6 496.2 L1449.2 494.0 L1449.7 491.9 L1450.2 489.7 L1451.3 487.4 L1452.3 485.1 L1453.3 482.8 L1454.4 480.5 L1455.4 478.2 L1456.4 475.9 L1457.8 473.6 L1459.2 471.3 L1460.6 468.9 L1461.9 466.6 L1463.3 464.2 L1464.7 461.9 L1466.0 460.1 L1467.3 458.2 L1468.6 456.4 L1469.9 454.5 L1471.2 452.7 L1472.5 450.8 L1474.0 449.3 L1475.6 447.8 L1477.1 446.2 L1478.7 444.7 L1480.2 443.2 L1481.8 441.6 L1483.8 440.3 L1485.8 439.1 L1487.8 437.8 L1489.8 436.5 L1491.8 435.3 L1493.8 434.0 L1493.9 431.6 L1494.0 429.1 L1494.1 426.7 L1494.2 424.3 L1494.3 421.8 L1494.5 419.4 L1494.6 415.6 L1494.7 411.8 L1494.8 408.0 L1495.0 404.2 L1495.1 400.3 L1495.2 396.5 L1495.2 384.6 L1495.2 372.7 L1495.2 360.8 L1495.2 348.8 L1495.2 336.9 L1495.2 325.0L1560.0 325.0 L1560.0 912.0Z" fill="#525252"/>
<path d="M1469.1 907.4L1468.9 901.3 L1468.8 895.1 L1468.6 888.9 L1468.5 882.8 L1468.4 876.6 L1468.2 870.4 L1467.7 867.4 L1467.2 864.4 L1466.7 861.4 L1466.2 858.4 L1465.7 855.4 L1465.2 852.3 L1464.6 850.5 L1464.0 848.7 L1463.4 846.9 L1462.8 845.1 L1462.2 843.3 L1461.6 841.5 L1460.8 839.5 L1460.0 837.5 L1459.3 835.5 L1458.5 833.5 L1457.7 831.5 L1457.0 829.5 L1456.4 827.4 L1455.9 825.4 L1455.4 823.3 L1454.9 821.3 L1454.3 819.2 L1453.8 817.2 L1453.5 814.9 L1453.3 812.5 L1453.0 810.2 L1452.7 807.9 L1452.4 805.5 L1452.2 803.2 L1452.1 799.9 L1452.0 796.6 L1451.9 793.3 L1451.8 790.0 L1451.7 786.8 L1451.6 783.5 L1451.4 769.7 L1451.2 756.0 L1451.0 742.2 L1450.8 728.5 L1450.6 714.8 L1450.4 701.0 L1450.2 687.6 L1450.0 674.3 L1449.8 660.9 L1449.6 647.5 L1449.3 634.1 L1449.1 620.7 L1448.9 608.2 L1448.7 595.8 L1448.5 583.4 L1448.3 570.9 L1448.1 558.5 L1447.9 546.0 L1447.9 540.9 L1447.9 535.7 L1447.8 530.5 L1447.8 525.3 L1447.8 520.1 L1447.8 515.0 L1447.9 513.0 L1448.0 511.0 L1448.1 509.0 L1448.2 507.1 L1448.4 505.1 L1448.5 503.1 L1449.0 500.9 L1449.5 498.8 L1450.0 496.6 L1450.6 494.4 L1451.1 492.3 L1451.6 490.1 L1452.6 487.9 L1453.6 485.6 L1454.7 483.3 L1455.7 481.1 L1456.7 478.8 L1457.7 476.6 L1459.1 474.3 L1460.4 472.0 L1461.8 469.6 L1463.1 467.3 L1464.5 465.0 L1465.9 462.7 L1467.1 460.9 L1468.4 459.1 L1469.7 457.3 L1471.0 455.5 L1472.3 453.6 L1473.6 451.8 L1475.1 450.3 L1476.7 448.8 L1478.2 447.3 L1479.8 445.7 L1481.3 444.2 L1482.9 442.7 L1484.9 441.5 L1486.9 440.2 L1488.9 439.0 L1490.9 437.7 L1492.9 436.5 L1494.9 435.2 L1495.1 432.8 L1495.3 430.3 L1495.6 427.8 L1495.8 425.3 L1496.0 422.8 L1496.3 420.3 L1496.5 416.4 L1496.6 412.4 L1496.8 408.5 L1497.0 404.6 L1497.2 400.7 L1497.4 396.7 L1497.4 384.8 L1497.4 372.8 L1497.4 360.9 L1497.4 348.9 L1497.4 337.0 L1497.4 325.0L1560.0 325.0 L1560.0 912.0Z" fill="#5c5c5c"/>
<path d="M1472.1 907.7L1472.0 901.5 L1471.8 895.4 L1471.7 889.2 L1471.6 883.0 L1471.4 876.9 L1471.3 870.7 L1470.7 867.6 L1470.2 864.6 L1469.6 861.5 L1469.1 858.5 L1468.5 855.4 L1468.0 852.4 L1467.3 850.6 L1466.7 848.9 L1466.0 847.1 L1465.3 845.4 L1464.6 843.6 L1464.0 841.8 L1463.1 839.9 L1462.3 837.9 L1461.4 835.9 L1460.6 833.9 L1459.7 832.0 L1458.8 830.0 L1458.3 828.0 L1457.7 825.9 L1457.1 823.9 L1456.5 821.8 L1456.0 819.8 L1455.4 817.8 L1455.1 815.4 L1454.8 813.1 L1454.5 810.8 L1454.2 808.4 L1453.9 806.1 L1453.6 803.8 L1453.5 800.4 L1453.4 797.1 L1453.3 793.8 L1453.2 790.5 L1453.1 787.2 L1453.0 783.8 L1452.8 770.1 L1452.6 756.3 L1452.4 742.5 L1452.2 728.7 L1452.0 714.9 L1451.8 701.2 L1451.6 687.8 L1451.4 674.4 L1451.2 661.0 L1451.0 647.6 L1450.8 634.2 L1450.6 620.8 L1450.4 608.3 L1450.2 595.9 L1450.0 583.5 L1449.8 571.0 L1449.6 558.6 L1449.4 546.2 L1449.4 541.0 L1449.3 535.9 L1449.3 530.7 L1449.3 525.6 L1449.2 520.4 L1449.2 515.3 L1449.3 513.3 L1449.5 511.3 L1449.6 509.4 L1449.7 507.4 L1449.8 505.4 L1449.9 503.5 L1450.4 501.3 L1450.9 499.2 L1451.5 497.0 L1452.0 494.9 L1452.5 492.7 L1453.0 490.5 L1454.0 488.3 L1455.0 486.1 L1456.0 483.9 L1457.0 481.7 L1458.0 479.4 L1459.0 477.2 L1460.3 474.9 L1461.7 472.7 L1463.0 470.4 L1464.3 468.1 L1465.7 465.8 L1467.0 463.5 L1468.3 461.7 L1469.6 459.9 L1470.8 458.2 L1472.1 456.4 L1473.4 454.6 L1474.6 452.8 L1476.2 451.3 L1477.8 449.8 L1479.3 448.3 L1480.9 446.8 L1482.4 445.3 L1484.0 443.8 L1486.0 442.6 L1488.0 441.3 L1490.0 440.1 L1492.0 438.9 L1494.0 437.7 L1496.0 436.5 L1496.3 434.0 L1496.7 431.4 L1497.0 428.9 L1497.4 426.3 L1497.7 423.8 L1498.1 421.2 L1498.3 417.2 L1498.6 413.1 L1498.8 409.1 L1499.1 405.0 L1499.3 401.0 L1499.5 396.9 L1499.5 384.9 L1499.5 372.9 L1499.5 361.0 L1499.5 349.0 L1499.5 337.0 L1499.5 325.0L1560.0 325.0 L1560.0 912.0Z" fill="#656565"/>
<path d="M1475.2 908.0L1475.0 901.8 L1474.9 895.6 L1474.8 889.5 L1474.6 883.3 L1474.5 877.1 L1474.3 871.0 L1473.7 867.9 L1473.1 864.8 L1472.5 861.7 L1471.9 858.6 L1471.3 855.5 L1470.8 852.4 L1470.0 850.7 L1469.3 849.0 L1468.5 847.3 L1467.8 845.6 L1467.1 843.9 L1466.3 842.2 L1465.4 840.3 L1464.5 838.3 L1463.5 836.4 L1462.6 834.4 L1461.7 832.5 L1460.7 830.5 L1460.1 828.5 L1459.5 826.4 L1458.8 824.4 L1458.2 822.4 L1457.6 820.4 L1457.0 818.3 L1456.6 816.0 L1456.3 813.7 L1456.0 811.3 L1455.7 809.0 L1455.3 806.7 L1455.0 804.3 L1454.9 801.0 L1454.8 797.6 L1454.7 794.3 L1454.6 790.9 L1454.5 787.6 L1454.4 784.2 L1454.2 770.4 L1454.0 756.6 L1453.8 742.8 L1453.6 728.9 L1453.4 715.1 L1453.2 701.3 L1453.0 687.9 L1452.8 674.5 L1452.6 661.1 L1452.4 647.7 L1452.2 634.2 L1452.0 620.8 L1451.8 608.4 L1451.6 596.0 L1451.4 583.6 L1451.2 571.1 L1451.0 558.7 L1450.8 546.3 L1450.8 541.2 L1450.8 536.0 L1450.8 530.9 L1450.7 525.8 L1450.7 520.7 L1450.7 515.6 L1450.8 513.6 L1450.9 511.6 L1451.0 509.7 L1451.2 507.7 L1451.3 505.8 L1451.4 503.8 L1451.9 501.7 L1452.4 499.5 L1452.9 497.4 L1453.4 495.3 L1453.9 493.1 L1454.3 491.0 L1455.3 488.8 L1456.3 486.6 L1457.3 484.4 L1458.3 482.2 L1459.3 480.1 L1460.3 477.9 L1461.6 475.6 L1462.9 473.4 L1464.2 471.1 L1465.5 468.8 L1466.9 466.6 L1468.2 464.3 L1469.4 462.6 L1470.7 460.8 L1472.0 459.1 L1473.2 457.3 L1474.5 455.5 L1475.7 453.8 L1477.3 452.3 L1478.8 450.8 L1480.4 449.3 L1481.9 447.8 L1483.5 446.3 L1485.1 444.8 L1487.1 443.7 L1489.1 442.5 L1491.1 441.3 L1493.1 440.1 L1495.1 438.9 L1497.1 437.8 L1497.5 435.2 L1498.0 432.6 L1498.5 430.0 L1498.9 427.4 L1499.4 424.8 L1499.9 422.2 L1500.2 418.0 L1500.5 413.8 L1500.8 409.6 L1501.1 405.5 L1501.4 401.3 L1501.7 397.1 L1501.7 385.1 L1501.7 373.1 L1501.7 361.1 L1501.7 349.0 L1501.7 337.0 L1501.7 325.0L1560.0 325.0 L1560.0 912.0Z" fill="#6f6f6f"/>
<path d="M1478.2 908.2L1478.1 902.1 L1477.9 895.9 L1477.8 889.7 L1477.7 883.6 L1477.5 877.4 L1477.4 871.2 L1476.7 868.1 L1476.1 865.0 L1475.4 861.8 L1474.8 858.7 L1474.1 855.6 L1473.5 852.5 L1472.7 850.8 L1471.9 849.2 L1471.1 847.5 L1470.3 845.9 L1469.5 844.3 L1468.7 842.6 L1467.7 840.7 L1466.7 838.7 L1465.7 836.8 L1464.7 834.9 L1463.6 832.9 L1462.6 831.0 L1461.9 829.0 L1461.3 827.0 L1460.6 825.0 L1459.9 822.9 L1459.2 820.9 L1458.5 818.9 L1458.2 816.6 L1457.8 814.3 L1457.5 811.9 L1457.1 809.6 L1456.8 807.3 L1456.4 804.9 L1456.3 801.5 L1456.2 798.2 L1456.1 794.8 L1456.0 791.4 L1455.9 788.0 L1455.8 784.6 L1455.6 770.7 L1455.4 756.9 L1455.2 743.0 L1455.0 729.1 L1454.8 715.3 L1454.6 701.4 L1454.4 688.0 L1454.2 674.6 L1454.0 661.2 L1453.8 647.7 L1453.6 634.3 L1453.4 620.9 L1453.2 608.5 L1453.0 596.1 L1452.8 583.7 L1452.6 571.2 L1452.4 558.8 L1452.3 546.4 L1452.2 541.3 L1452.2 536.2 L1452.2 531.1 L1452.2 526.0 L1452.2 520.9 L1452.1 515.9 L1452.3 513.9 L1452.4 512.0 L1452.5 510.0 L1452.6 508.1 L1452.7 506.1 L1452.8 504.2 L1453.3 502.0 L1453.8 499.9 L1454.3 497.8 L1454.8 495.7 L1455.2 493.5 L1455.7 491.4 L1456.7 489.3 L1457.7 487.1 L1458.6 485.0 L1459.6 482.8 L1460.6 480.7 L1461.6 478.5 L1462.9 476.3 L1464.2 474.1 L1465.5 471.8 L1466.7 469.6 L1468.0 467.4 L1469.3 465.1 L1470.6 463.4 L1471.8 461.7 L1473.1 460.0 L1474.3 458.2 L1475.6 456.5 L1476.8 454.8 L1478.4 453.3 L1479.9 451.8 L1481.5 450.3 L1483.0 448.9 L1484.6 447.4 L1486.2 445.9 L1488.2 444.8 L1490.2 443.6 L1492.2 442.5 L1494.2 441.3 L1496.2 440.2 L1498.2 439.0 L1498.7 436.3 L1499.3 433.7 L1499.9 431.0 L1500.5 428.4 L1501.1 425.7 L1501.7 423.1 L1502.1 418.8 L1502.4 414.5 L1502.8 410.2 L1503.1 405.9 L1503.5 401.6 L1503.8 397.3 L1503.8 385.3 L1503.8 373.2 L1503.8 361.2 L1503.8 349.1 L1503.8 337.1 L1503.8 325.0L1560.0 325.0 L1560.0 912.0Z" fill="#787878"/>
<path d="M1481.3 908.5L1481.2 902.3 L1481.0 896.2 L1480.8 890.0 L1480.7 883.8 L1480.6 877.7 L1480.4 871.5 L1479.7 868.3 L1479.0 865.2 L1478.3 862.0 L1477.6 858.8 L1476.9 855.7 L1476.2 852.5 L1475.4 850.9 L1474.5 849.3 L1473.7 847.8 L1472.8 846.2 L1472.0 844.6 L1471.1 843.0 L1470.0 841.1 L1468.9 839.2 L1467.8 837.2 L1466.7 835.3 L1465.6 833.4 L1464.5 831.5 L1463.8 829.5 L1463.0 827.5 L1462.3 825.5 L1461.6 823.5 L1460.8 821.5 L1460.1 819.5 L1459.7 817.2 L1459.3 814.8 L1459.0 812.5 L1458.6 810.2 L1458.2 807.8 L1457.8 805.5 L1457.7 802.1 L1457.6 798.7 L1457.5 795.2 L1457.4 791.8 L1457.3 788.4 L1457.2 785.0 L1457.0 771.1 L1456.8 757.2 L1456.6 743.2 L1456.4 729.3 L1456.2 715.4 L1456.0 701.5 L1455.8 688.1 L1455.6 674.7 L1455.4 661.2 L1455.2 647.8 L1455.0 634.4 L1454.8 621.0 L1454.6 608.6 L1454.4 596.2 L1454.2 583.8 L1454.1 571.3 L1453.9 558.9 L1453.7 546.5 L1453.7 541.4 L1453.7 536.4 L1453.7 531.3 L1453.6 526.3 L1453.6 521.2 L1453.6 516.1 L1453.7 514.2 L1453.8 512.3 L1454.0 510.3 L1454.1 508.4 L1454.2 506.4 L1454.3 504.5 L1454.8 502.4 L1455.2 500.3 L1455.7 498.2 L1456.2 496.1 L1456.6 494.0 L1457.1 491.9 L1458.1 489.7 L1459.0 487.6 L1460.0 485.5 L1460.9 483.4 L1461.9 481.3 L1462.8 479.1 L1464.1 477.0 L1465.4 474.8 L1466.7 472.6 L1468.0 470.4 L1469.2 468.1 L1470.5 465.9 L1471.7 464.2 L1473.0 462.5 L1474.2 460.9 L1475.4 459.1 L1476.7 457.4 L1477.9 455.8 L1479.5 454.3 L1481.0 452.8 L1482.6 451.4 L1484.1 449.9 L1485.7 448.5 L1487.2 447.0 L1489.2 445.9 L1491.2 444.8 L1493.2 443.6 L1495.2 442.5 L1497.2 441.4 L1499.2 440.2 L1500.0 437.5 L1500.7 434.8 L1501.4 432.1 L1502.1 429.4 L1502.8 426.7 L1503.5 424.0 L1503.9 419.6 L1504.3 415.2 L1504.8 410.8 L1505.2 406.3 L1505.6 401.9 L1506.0 397.5 L1506.0 385.4 L1506.0 373.3 L1506.0 361.2 L1506.0 349.2 L1506.0 337.1 L1506.0 325.0L1560.0 325.0 L1560.0 912.0Z" fill="#828282"/>
<path d="M1484.4 908.8L1484.2 902.6 L1484.1 896.4 L1483.9 890.3 L1483.7 884.1 L1483.6 877.9 L1483.4 871.8 L1482.7 868.6 L1482.0 865.4 L1481.2 862.2 L1480.5 858.9 L1479.7 855.7 L1479.0 852.5 L1478.1 851.0 L1477.2 849.5 L1476.2 848.0 L1475.3 846.4 L1474.4 844.9 L1473.5 843.4 L1472.3 841.5 L1471.1 839.6 L1469.9 837.7 L1468.7 835.8 L1467.6 833.9 L1466.4 832.0 L1465.6 830.0 L1464.8 828.0 L1464.0 826.0 L1463.2 824.1 L1462.5 822.1 L1461.7 820.1 L1461.3 817.7 L1460.9 815.4 L1460.5 813.1 L1460.1 810.7 L1459.7 808.4 L1459.3 806.1 L1459.2 802.6 L1459.0 799.2 L1458.9 795.7 L1458.8 792.3 L1458.7 788.8 L1458.6 785.4 L1458.4 771.4 L1458.2 757.5 L1458.0 743.5 L1457.8 729.5 L1457.6 715.6 L1457.4 701.6 L1457.2 688.2 L1457.0 674.8 L1456.8 661.3 L1456.6 647.9 L1456.4 634.5 L1456.2 621.1 L1456.0 608.7 L1455.9 596.3 L1455.7 583.8 L1455.5 571.4 L1455.3 559.0 L1455.1 546.6 L1455.1 541.6 L1455.1 536.6 L1455.1 531.5 L1455.1 526.5 L1455.1 521.5 L1455.1 516.4 L1455.2 514.5 L1455.3 512.6 L1455.4 510.6 L1455.5 508.7 L1455.6 506.8 L1455.8 504.8 L1456.2 502.8 L1456.7 500.7 L1457.1 498.6 L1457.6 496.5 L1458.0 494.4 L1458.5 492.3 L1459.4 490.2 L1460.4 488.1 L1461.3 486.0 L1462.2 484.0 L1463.2 481.9 L1464.1 479.8 L1465.4 477.6 L1466.6 475.4 L1467.9 473.3 L1469.2 471.1 L1470.4 468.9 L1471.7 466.8 L1472.9 465.1 L1474.1 463.4 L1475.3 461.7 L1476.5 460.1 L1477.8 458.4 L1479.0 456.7 L1480.5 455.3 L1482.1 453.8 L1483.7 452.4 L1485.2 451.0 L1486.8 449.5 L1488.3 448.1 L1490.3 447.0 L1492.3 445.9 L1494.3 444.8 L1496.3 443.7 L1498.3 442.6 L1500.3 441.5 L1501.2 438.7 L1502.0 436.0 L1502.8 433.2 L1503.7 430.4 L1504.5 427.7 L1505.3 424.9 L1505.8 420.4 L1506.3 415.8 L1506.7 411.3 L1507.2 406.8 L1507.7 402.2 L1508.2 397.7 L1508.2 385.6 L1508.2 373.5 L1508.2 361.3 L1508.2 349.2 L1508.2 337.1 L1508.2 325.0L1560.0 325.0 L1560.0 912.0Z" fill="#8b8b8b"/>
<path d="M1487.4 909.0L1487.3 902.9 L1487.1 896.7 L1486.9 890.5 L1486.8 884.4 L1486.6 878.2 L1486.5 872.0 L1485.7 868.8 L1484.9 865.6 L1484.1 862.3 L1483.3 859.1 L1482.5 855.8 L1481.8 852.6 L1480.8 851.1 L1479.8 849.6 L1478.8 848.2 L1477.8 846.7 L1476.8 845.2 L1475.9 843.8 L1474.6 841.9 L1473.3 840.0 L1472.1 838.1 L1470.8 836.3 L1469.5 834.4 L1468.3 832.5 L1467.4 830.5 L1466.6 828.6 L1465.8 826.6 L1464.9 824.6 L1464.1 822.6 L1463.2 820.7 L1462.8 818.3 L1462.4 816.0 L1462.0 813.7 L1461.5 811.3 L1461.1 809.0 L1460.7 806.7 L1460.6 803.2 L1460.5 799.7 L1460.3 796.2 L1460.2 792.7 L1460.1 789.2 L1460.0 785.8 L1459.8 771.8 L1459.6 757.8 L1459.4 743.8 L1459.2 729.7 L1459.0 715.7 L1458.8 701.7 L1458.6 688.3 L1458.4 674.9 L1458.2 661.4 L1458.0 648.0 L1457.8 634.6 L1457.6 621.2 L1457.5 608.8 L1457.3 596.3 L1457.1 583.9 L1456.9 571.5 L1456.8 559.1 L1456.6 546.7 L1456.6 541.7 L1456.6 536.7 L1456.5 531.7 L1456.5 526.7 L1456.5 521.7 L1456.5 516.7 L1456.6 514.8 L1456.8 512.9 L1456.9 511.0 L1457.0 509.0 L1457.1 507.1 L1457.2 505.2 L1457.6 503.1 L1458.1 501.0 L1458.5 499.0 L1459.0 496.9 L1459.4 494.8 L1459.9 492.7 L1460.8 490.7 L1461.7 488.6 L1462.6 486.6 L1463.6 484.5 L1464.5 482.5 L1465.4 480.4 L1466.6 478.3 L1467.9 476.1 L1469.1 474.0 L1470.4 471.9 L1471.6 469.7 L1472.8 467.6 L1474.0 465.9 L1475.2 464.3 L1476.4 462.6 L1477.7 461.0 L1478.9 459.4 L1480.1 457.7 L1481.6 456.3 L1483.2 454.9 L1484.8 453.4 L1486.3 452.0 L1487.9 450.6 L1489.4 449.2 L1491.4 448.1 L1493.4 447.0 L1495.4 446.0 L1497.4 444.9 L1499.4 443.8 L1501.4 442.8 L1502.4 439.9 L1503.3 437.1 L1504.3 434.3 L1505.2 431.5 L1506.2 428.7 L1507.1 425.8 L1507.6 421.2 L1508.2 416.5 L1508.7 411.9 L1509.2 407.2 L1509.8 402.5 L1510.3 397.9 L1510.3 385.7 L1510.3 373.6 L1510.3 361.4 L1510.3 349.3 L1510.3 337.1 L1510.3 325.0L1560.0 325.0 L1560.0 912.0Z" fill="#949494"/>
<path d="M1490.5 909.3L1490.3 903.1 L1490.2 897.0 L1490.0 890.8 L1489.8 884.6 L1489.7 878.5 L1489.5 872.3 L1488.7 869.0 L1487.9 865.7 L1487.0 862.5 L1486.2 859.2 L1485.3 855.9 L1484.5 852.6 L1483.5 851.2 L1482.4 849.8 L1481.4 848.4 L1480.3 847.0 L1479.3 845.6 L1478.2 844.2 L1476.9 842.3 L1475.5 840.4 L1474.2 838.6 L1472.8 836.7 L1471.5 834.9 L1470.2 833.0 L1469.3 831.0 L1468.4 829.1 L1467.5 827.1 L1466.6 825.2 L1465.7 823.2 L1464.8 821.2 L1464.4 818.9 L1463.9 816.6 L1463.5 814.2 L1463.0 811.9 L1462.6 809.6 L1462.1 807.2 L1462.0 803.7 L1461.9 800.2 L1461.8 796.7 L1461.6 793.2 L1461.5 789.7 L1461.4 786.2 L1461.2 772.1 L1461.0 758.1 L1460.8 744.0 L1460.6 729.9 L1460.4 715.9 L1460.2 701.8 L1460.0 688.4 L1459.8 675.0 L1459.6 661.5 L1459.4 648.1 L1459.2 634.7 L1459.0 621.2 L1458.9 608.8 L1458.7 596.4 L1458.5 584.0 L1458.4 571.6 L1458.2 559.2 L1458.0 546.8 L1458.0 541.9 L1458.0 536.9 L1458.0 531.9 L1458.0 527.0 L1458.0 522.0 L1458.0 517.0 L1458.1 515.1 L1458.2 513.2 L1458.3 511.3 L1458.4 509.4 L1458.5 507.5 L1458.7 505.5 L1459.1 503.5 L1459.5 501.4 L1459.9 499.3 L1460.4 497.3 L1460.8 495.2 L1461.2 493.2 L1462.1 491.1 L1463.1 489.1 L1464.0 487.1 L1464.9 485.1 L1465.8 483.1 L1466.7 481.1 L1467.9 479.0 L1469.1 476.8 L1470.3 474.7 L1471.6 472.6 L1472.8 470.5 L1474.0 468.4 L1475.2 466.8 L1476.4 465.2 L1477.6 463.5 L1478.8 461.9 L1480.0 460.3 L1481.2 458.7 L1482.7 457.3 L1484.3 455.9 L1485.8 454.5 L1487.4 453.1 L1489.0 451.6 L1490.5 450.2 L1492.5 449.2 L1494.5 448.2 L1496.5 447.1 L1498.5 446.1 L1500.5 445.0 L1502.5 444.0 L1503.6 441.1 L1504.7 438.3 L1505.7 435.4 L1506.8 432.5 L1507.9 429.6 L1508.9 426.8 L1509.5 422.0 L1510.1 417.2 L1510.7 412.4 L1511.3 407.6 L1511.9 402.9 L1512.5 398.1 L1512.5 385.9 L1512.5 373.7 L1512.5 361.5 L1512.5 349.4 L1512.5 337.2 L1512.5 325.0L1560.0 325.0 L1560.0 912.0Z" fill="#9e9e9e"/>
<path d="M1493.5 909.6L1493.4 903.4 L1493.2 897.2 L1493.0 891.1 L1492.9 884.9 L1492.7 878.7 L1492.6 872.6 L1491.7 869.3 L1490.8 865.9 L1489.9 862.6 L1489.0 859.3 L1488.1 856.0 L1487.2 852.7 L1486.1 851.3 L1485.0 849.9 L1483.9 848.6 L1482.8 847.2 L1481.7 845.9 L1480.6 844.5 L1479.2 842.7 L1477.8 840.9 L1476.3 839.0 L1474.9 837.2 L1473.5 835.3 L1472.0 833.5 L1471.1 831.6 L1470.2 829.6 L1469.2 827.7 L1468.3 825.7 L1467.3 823.8 L1466.4 821.8 L1465.9 819.5 L1465.4 817.1 L1465.0 814.8 L1464.5 812.5 L1464.0 810.1 L1463.5 807.8 L1463.4 804.3 L1463.3 800.7 L1463.2 797.2 L1463.0 793.6 L1462.9 790.1 L1462.8 786.5 L1462.6 772.4 L1462.4 758.3 L1462.2 744.2 L1462.0 730.2 L1461.8 716.1 L1461.6 702.0 L1461.4 688.5 L1461.2 675.1 L1461.0 661.6 L1460.8 648.2 L1460.7 634.8 L1460.5 621.3 L1460.3 608.9 L1460.1 596.5 L1460.0 584.1 L1459.8 571.7 L1459.6 559.4 L1459.5 547.0 L1459.5 542.0 L1459.5 537.1 L1459.5 532.1 L1459.4 527.2 L1459.4 522.3 L1459.4 517.3 L1459.6 515.4 L1459.7 513.5 L1459.8 511.6 L1459.9 509.7 L1460.0 507.8 L1460.1 505.9 L1460.5 503.8 L1460.9 501.8 L1461.4 499.7 L1461.8 497.7 L1462.2 495.6 L1462.6 493.6 L1463.5 491.6 L1464.4 489.6 L1465.3 487.7 L1466.2 485.7 L1467.1 483.7 L1468.0 481.7 L1469.2 479.6 L1470.4 477.5 L1471.6 475.5 L1472.8 473.4 L1474.0 471.3 L1475.1 469.2 L1476.3 467.6 L1477.5 466.0 L1478.7 464.4 L1479.9 462.8 L1481.1 461.3 L1482.2 459.7 L1483.8 458.3 L1485.4 456.9 L1486.9 455.5 L1488.5 454.1 L1490.1 452.7 L1491.6 451.3 L1493.6 450.3 L1495.6 449.3 L1497.6 448.3 L1499.6 447.3 L1501.6 446.3 L1503.6 445.2 L1504.8 442.3 L1506.0 439.4 L1507.2 436.5 L1508.4 433.5 L1509.5 430.6 L1510.7 427.7 L1511.4 422.8 L1512.0 417.9 L1512.7 413.0 L1513.3 408.1 L1514.0 403.2 L1514.6 398.3 L1514.6 386.1 L1514.6 373.8 L1514.6 361.6 L1514.6 349.4 L1514.6 337.2 L1514.6 325.0L1560.0 325.0 L1560.0 912.0Z" fill="#a8a8a8"/>
<path d="M1496.6 909.8L1496.4 903.7 L1496.3 897.5 L1496.1 891.3 L1495.9 885.2 L1495.8 879.0 L1495.6 872.8 L1494.7 869.5 L1493.8 866.1 L1492.8 862.8 L1491.9 859.4 L1490.9 856.1 L1490.0 852.7 L1488.8 851.4 L1487.7 850.1 L1486.5 848.8 L1485.3 847.5 L1484.2 846.2 L1483.0 844.9 L1481.5 843.1 L1480.0 841.3 L1478.5 839.5 L1476.9 837.6 L1475.4 835.8 L1473.9 834.0 L1472.9 832.1 L1471.9 830.1 L1470.9 828.2 L1469.9 826.3 L1468.9 824.3 L1467.9 822.4 L1467.4 820.1 L1466.9 817.7 L1466.4 815.4 L1465.9 813.1 L1465.4 810.7 L1464.9 808.4 L1464.8 804.8 L1464.7 801.2 L1464.6 797.7 L1464.4 794.1 L1464.3 790.5 L1464.2 786.9 L1464.0 772.8 L1463.8 758.6 L1463.6 744.5 L1463.4 730.4 L1463.2 716.2 L1463.0 702.1 L1462.8 688.6 L1462.6 675.2 L1462.4 661.7 L1462.3 648.3 L1462.1 634.8 L1461.9 621.4 L1461.7 609.0 L1461.5 596.6 L1461.4 584.2 L1461.2 571.8 L1461.1 559.5 L1460.9 547.1 L1460.9 542.2 L1460.9 537.3 L1460.9 532.4 L1460.9 527.4 L1460.9 522.5 L1460.9 517.6 L1461.0 515.7 L1461.1 513.8 L1461.2 511.9 L1461.3 510.0 L1461.5 508.1 L1461.6 506.2 L1462.0 504.2 L1462.4 502.2 L1462.8 500.1 L1463.2 498.1 L1463.6 496.1 L1464.0 494.0 L1464.9 492.1 L1465.7 490.1 L1466.6 488.2 L1467.5 486.2 L1468.4 484.3 L1469.3 482.4 L1470.4 480.3 L1471.6 478.2 L1472.8 476.2 L1474.0 474.1 L1475.1 472.1 L1476.3 470.0 L1477.5 468.4 L1478.6 466.9 L1479.8 465.3 L1481.0 463.8 L1482.2 462.2 L1483.3 460.7 L1484.9 459.3 L1486.5 457.9 L1488.0 456.5 L1489.6 455.1 L1491.2 453.8 L1492.7 452.4 L1494.7 451.4 L1496.7 450.4 L1498.7 449.4 L1500.7 448.5 L1502.7 447.5 L1504.7 446.5 L1506.0 443.5 L1507.3 440.5 L1508.6 437.6 L1509.9 434.6 L1511.2 431.6 L1512.5 428.6 L1513.2 423.6 L1513.9 418.6 L1514.7 413.5 L1515.4 408.5 L1516.1 403.5 L1516.8 398.5 L1516.8 386.2 L1516.8 374.0 L1516.8 361.7 L1516.8 349.5 L1516.8 337.2 L1516.8 325.0L1560.0 325.0 L1560.0 912.0Z" fill="#b2b2b2"/>
<path d="M1499.6 910.1L1499.5 903.9 L1499.3 897.8 L1499.1 891.6 L1499.0 885.4 L1498.8 879.3 L1498.7 873.1 L1497.7 869.7 L1496.7 866.3 L1495.7 862.9 L1494.7 859.5 L1493.7 856.1 L1492.8 852.7 L1491.5 851.5 L1490.3 850.3 L1489.1 849.0 L1487.8 847.8 L1486.6 846.5 L1485.4 845.3 L1483.8 843.5 L1482.2 841.7 L1480.6 839.9 L1479.0 838.1 L1477.4 836.3 L1475.8 834.5 L1474.8 832.6 L1473.7 830.7 L1472.7 828.7 L1471.6 826.8 L1470.6 824.9 L1469.5 823.0 L1469.0 820.6 L1468.5 818.3 L1467.9 816.0 L1467.4 813.6 L1466.9 811.3 L1466.4 809.0 L1466.2 805.4 L1466.1 801.7 L1466.0 798.1 L1465.9 794.5 L1465.7 790.9 L1465.6 787.3 L1465.4 773.1 L1465.2 758.9 L1465.0 744.8 L1464.8 730.6 L1464.6 716.4 L1464.4 702.2 L1464.2 688.7 L1464.0 675.3 L1463.8 661.8 L1463.7 648.4 L1463.5 634.9 L1463.3 621.5 L1463.1 609.1 L1463.0 596.7 L1462.8 584.3 L1462.7 571.9 L1462.5 559.6 L1462.3 547.2 L1462.3 542.3 L1462.3 537.4 L1462.3 532.6 L1462.4 527.7 L1462.4 522.8 L1462.4 517.9 L1462.5 516.0 L1462.6 514.1 L1462.7 512.3 L1462.8 510.4 L1462.9 508.5 L1463.0 506.6 L1463.4 504.6 L1463.8 502.5 L1464.2 500.5 L1464.6 498.5 L1465.0 496.5 L1465.4 494.5 L1466.2 492.5 L1467.1 490.6 L1467.9 488.7 L1468.8 486.8 L1469.7 484.9 L1470.5 483.0 L1471.7 481.0 L1472.8 478.9 L1474.0 476.9 L1475.2 474.9 L1476.3 472.8 L1477.5 470.8 L1478.6 469.3 L1479.8 467.8 L1480.9 466.2 L1482.1 464.7 L1483.3 463.2 L1484.4 461.6 L1486.0 460.3 L1487.5 458.9 L1489.1 457.5 L1490.7 456.2 L1492.3 454.8 L1493.8 453.5 L1495.8 452.5 L1497.8 451.6 L1499.8 450.6 L1501.8 449.7 L1503.8 448.7 L1505.8 447.8 L1507.2 444.7 L1508.7 441.7 L1510.1 438.6 L1511.5 435.6 L1512.9 432.6 L1514.3 429.5 L1515.1 424.4 L1515.9 419.2 L1516.6 414.1 L1517.4 408.9 L1518.2 403.8 L1518.9 398.7 L1518.9 386.4 L1518.9 374.1 L1518.9 361.8 L1518.9 349.6 L1518.9 337.3 L1518.9 325.0L1560.0 325.0 L1560.0 912.0Z" fill="#bdbdbd"/>
<path d="M1502.7 910.4L1502.5 904.2 L1502.4 898.1 L1502.2 891.9 L1502.0 885.7 L1501.9 879.6 L1501.7 873.4 L1500.7 869.9 L1499.6 866.5 L1498.6 863.1 L1497.6 859.6 L1496.5 856.2 L1495.5 852.8 L1494.2 851.6 L1492.9 850.4 L1491.6 849.2 L1490.3 848.1 L1489.0 846.9 L1487.7 845.7 L1486.1 843.9 L1484.4 842.1 L1482.7 840.3 L1481.0 838.6 L1479.4 836.8 L1477.7 835.0 L1476.6 833.1 L1475.5 831.2 L1474.4 829.3 L1473.3 827.4 L1472.2 825.4 L1471.1 823.5 L1470.5 821.2 L1470.0 818.9 L1469.4 816.5 L1468.9 814.2 L1468.3 811.9 L1467.8 809.5 L1467.7 805.9 L1467.5 802.3 L1467.4 798.6 L1467.3 795.0 L1467.1 791.3 L1467.0 787.7 L1466.8 773.5 L1466.6 759.2 L1466.4 745.0 L1466.2 730.8 L1466.0 716.5 L1465.8 702.3 L1465.6 688.8 L1465.4 675.4 L1465.3 661.9 L1465.1 648.5 L1464.9 635.0 L1464.7 621.5 L1464.6 609.2 L1464.4 596.8 L1464.2 584.4 L1464.1 572.1 L1463.9 559.7 L1463.8 547.3 L1463.8 542.5 L1463.8 537.6 L1463.8 532.8 L1463.8 527.9 L1463.8 523.1 L1463.8 518.2 L1463.9 516.3 L1464.0 514.5 L1464.2 512.6 L1464.3 510.7 L1464.4 508.8 L1464.5 506.9 L1464.9 504.9 L1465.2 502.9 L1465.6 500.9 L1466.0 498.9 L1466.4 496.9 L1466.7 494.9 L1467.6 493.0 L1468.4 491.1 L1469.3 489.3 L1470.1 487.4 L1471.0 485.5 L1471.8 483.6 L1473.0 481.6 L1474.1 479.6 L1475.2 477.6 L1476.4 475.6 L1477.5 473.6 L1478.6 471.6 L1479.8 470.1 L1480.9 468.6 L1482.1 467.1 L1483.2 465.6 L1484.3 464.1 L1485.5 462.6 L1487.1 461.3 L1488.6 459.9 L1490.2 458.6 L1491.8 457.2 L1493.4 455.9 L1494.9 454.5 L1496.9 453.6 L1498.9 452.7 L1500.9 451.8 L1502.9 450.8 L1504.9 449.9 L1506.9 449.0 L1508.5 445.9 L1510.0 442.8 L1511.5 439.7 L1513.1 436.6 L1514.6 433.6 L1516.2 430.5 L1517.0 425.2 L1517.8 419.9 L1518.6 414.7 L1519.4 409.4 L1520.3 404.1 L1521.1 398.8 L1521.1 386.5 L1521.1 374.2 L1521.1 361.9 L1521.1 349.6 L1521.1 337.3 L1521.1 325.0L1560.0 325.0 L1560.0 912.0Z" fill="#c7c7c7"/>
<path d="M1505.7 910.7L1505.6 904.5 L1505.4 898.3 L1505.2 892.2 L1505.1 886.0 L1504.9 879.8 L1504.8 873.7 L1503.7 870.2 L1502.6 866.7 L1501.5 863.2 L1500.4 859.8 L1499.3 856.3 L1498.2 852.8 L1496.9 851.7 L1495.5 850.6 L1494.2 849.4 L1492.8 848.3 L1491.5 847.2 L1490.1 846.1 L1488.4 844.3 L1486.6 842.6 L1484.8 840.8 L1483.1 839.0 L1481.3 837.3 L1479.6 835.5 L1478.4 833.6 L1477.3 831.7 L1476.1 829.8 L1475.0 827.9 L1473.8 826.0 L1472.7 824.1 L1472.1 821.8 L1471.5 819.4 L1470.9 817.1 L1470.4 814.8 L1469.8 812.4 L1469.2 810.1 L1469.1 806.4 L1468.9 802.8 L1468.8 799.1 L1468.7 795.4 L1468.5 791.8 L1468.4 788.1 L1468.2 773.8 L1468.0 759.5 L1467.8 745.2 L1467.6 731.0 L1467.4 716.7 L1467.2 702.4 L1467.0 689.0 L1466.8 675.5 L1466.7 662.0 L1466.5 648.6 L1466.3 635.1 L1466.1 621.6 L1466.0 609.2 L1465.8 596.9 L1465.7 584.5 L1465.5 572.2 L1465.4 559.8 L1465.2 547.4 L1465.2 542.6 L1465.2 537.8 L1465.2 533.0 L1465.3 528.2 L1465.3 523.3 L1465.3 518.5 L1465.4 516.6 L1465.5 514.8 L1465.6 512.9 L1465.7 511.0 L1465.8 509.1 L1465.9 507.3 L1466.3 505.3 L1466.7 503.3 L1467.0 501.3 L1467.4 499.3 L1467.8 497.3 L1468.1 495.3 L1468.9 493.5 L1469.8 491.6 L1470.6 489.8 L1471.4 488.0 L1472.3 486.1 L1473.1 484.3 L1474.2 482.3 L1475.3 480.3 L1476.4 478.4 L1477.6 476.4 L1478.7 474.4 L1479.8 472.4 L1480.9 471.0 L1482.1 469.5 L1483.2 468.0 L1484.3 466.5 L1485.4 465.1 L1486.6 463.6 L1488.2 462.3 L1489.7 460.9 L1491.3 459.6 L1492.9 458.3 L1494.4 456.9 L1496.0 455.6 L1498.0 454.7 L1500.0 453.8 L1502.0 452.9 L1504.0 452.0 L1506.0 451.1 L1508.0 450.2 L1509.7 447.1 L1511.3 444.0 L1513.0 440.8 L1514.6 437.7 L1516.3 434.5 L1518.0 431.4 L1518.8 426.0 L1519.7 420.6 L1520.6 415.2 L1521.5 409.8 L1522.4 404.4 L1523.2 399.0 L1523.2 386.7 L1523.2 374.4 L1523.2 362.0 L1523.2 349.7 L1523.2 337.3 L1523.2 325.0L1560.0 325.0 L1560.0 912.0Z" fill="#d1d1d1"/>
<path d="M1508.8 910.9L1508.6 904.8 L1508.5 898.6 L1508.3 892.4 L1508.1 886.3 L1508.0 880.1 L1507.8 873.9 L1506.7 870.4 L1505.5 866.9 L1504.4 863.4 L1503.3 859.9 L1502.1 856.4 L1501.0 852.8 L1499.6 851.8 L1498.2 850.7 L1496.7 849.7 L1495.3 848.6 L1493.9 847.5 L1492.5 846.5 L1490.7 844.7 L1488.8 843.0 L1487.0 841.2 L1485.1 839.5 L1483.3 837.7 L1481.5 836.0 L1480.3 834.1 L1479.0 832.2 L1477.8 830.3 L1476.6 828.5 L1475.4 826.6 L1474.2 824.7 L1473.6 822.4 L1473.0 820.0 L1472.4 817.7 L1471.8 815.4 L1471.2 813.0 L1470.6 810.7 L1470.5 807.0 L1470.3 803.3 L1470.2 799.6 L1470.1 795.9 L1469.9 792.2 L1469.8 788.5 L1469.6 774.1 L1469.4 759.8 L1469.2 745.5 L1469.0 731.2 L1468.8 716.9 L1468.6 702.5 L1468.4 689.1 L1468.2 675.6 L1468.1 662.1 L1467.9 648.6 L1467.7 635.2 L1467.5 621.7 L1467.4 609.3 L1467.2 597.0 L1467.1 584.6 L1466.9 572.3 L1466.8 559.9 L1466.6 547.5 L1466.7 542.8 L1466.7 538.0 L1466.7 533.2 L1466.7 528.4 L1466.7 523.6 L1466.8 518.8 L1466.9 516.9 L1467.0 515.1 L1467.1 513.2 L1467.2 511.3 L1467.3 509.5 L1467.4 507.6 L1467.7 505.6 L1468.1 503.7 L1468.4 501.7 L1468.8 499.7 L1469.1 497.7 L1469.5 495.8 L1470.3 494.0 L1471.1 492.2 L1471.9 490.3 L1472.7 488.5 L1473.6 486.7 L1474.4 484.9 L1475.5 483.0 L1476.6 481.0 L1477.7 479.1 L1478.8 477.1 L1479.9 475.2 L1481.0 473.3 L1482.1 471.8 L1483.2 470.4 L1484.3 468.9 L1485.4 467.5 L1486.5 466.0 L1487.7 464.6 L1489.2 463.3 L1490.8 461.9 L1492.4 460.6 L1494.0 459.3 L1495.5 458.0 L1497.1 456.7 L1499.1 455.8 L1501.1 455.0 L1503.1 454.1 L1505.1 453.2 L1507.1 452.4 L1509.1 451.5 L1510.9 448.3 L1512.7 445.1 L1514.4 441.9 L1516.2 438.7 L1518.0 435.5 L1519.8 432.3 L1520.7 426.8 L1521.6 421.3 L1522.6 415.8 L1523.5 410.3 L1524.4 404.7 L1525.4 399.2 L1525.4 386.9 L1525.4 374.5 L1525.4 362.1 L1525.4 349.7 L1525.4 337.4 L1525.4 325.0L1560.0 325.0 L1560.0 912.0Z" fill="#dbdbdb"/>
<path d="M1511.8 911.2L1511.7 905.0 L1511.5 898.9 L1511.3 892.7 L1511.2 886.5 L1511.0 880.4 L1510.9 874.2 L1509.7 870.6 L1508.5 867.1 L1507.3 863.5 L1506.1 860.0 L1504.9 856.4 L1503.8 852.9 L1502.3 851.9 L1500.8 850.9 L1499.3 849.9 L1497.8 848.9 L1496.3 847.9 L1494.9 846.8 L1492.9 845.1 L1491.0 843.4 L1489.1 841.7 L1487.2 839.9 L1485.3 838.2 L1483.3 836.5 L1482.1 834.6 L1480.8 832.8 L1479.6 830.9 L1478.3 829.0 L1477.1 827.1 L1475.8 825.3 L1475.2 822.9 L1474.5 820.6 L1473.9 818.3 L1473.3 815.9 L1472.7 813.6 L1472.0 811.3 L1471.9 807.5 L1471.8 803.8 L1471.6 800.1 L1471.5 796.3 L1471.3 792.6 L1471.2 788.8 L1471.0 774.5 L1470.8 760.1 L1470.6 745.8 L1470.4 731.4 L1470.2 717.0 L1470.0 702.7 L1469.8 689.2 L1469.7 675.7 L1469.5 662.2 L1469.3 648.7 L1469.1 635.2 L1469.0 621.8 L1468.8 609.4 L1468.7 597.1 L1468.5 584.7 L1468.4 572.4 L1468.2 560.0 L1468.1 547.7 L1468.1 542.9 L1468.1 538.1 L1468.2 533.4 L1468.2 528.6 L1468.2 523.9 L1468.2 519.1 L1468.3 517.3 L1468.4 515.4 L1468.5 513.5 L1468.6 511.7 L1468.7 509.8 L1468.8 508.0 L1469.2 506.0 L1469.5 504.0 L1469.9 502.1 L1470.2 500.1 L1470.5 498.2 L1470.9 496.2 L1471.7 494.4 L1472.5 492.7 L1473.3 490.9 L1474.1 489.1 L1474.9 487.3 L1475.7 485.6 L1476.7 483.7 L1477.8 481.7 L1478.9 479.8 L1480.0 477.9 L1481.0 476.0 L1482.1 474.1 L1483.2 472.6 L1484.3 471.2 L1485.4 469.8 L1486.5 468.4 L1487.6 467.0 L1488.7 465.6 L1490.3 464.3 L1491.9 463.0 L1493.5 461.7 L1495.1 460.4 L1496.6 459.1 L1498.2 457.8 L1500.2 456.9 L1502.2 456.1 L1504.2 455.3 L1506.2 454.4 L1508.2 453.6 L1510.2 452.8 L1512.1 449.5 L1514.0 446.2 L1515.9 443.0 L1517.8 439.7 L1519.7 436.5 L1521.6 433.2 L1522.6 427.6 L1523.6 422.0 L1524.6 416.3 L1525.6 410.7 L1526.5 405.1 L1527.5 399.4 L1527.5 387.0 L1527.5 374.6 L1527.5 362.2 L1527.5 349.8 L1527.5 337.4 L1527.5 325.0L1560.0 325.0 L1560.0 912.0Z" fill="#e5e5e5"/>
<path d="M1514.9 911.5L1514.7 905.3 L1514.6 899.1 L1514.4 893.0 L1514.2 886.8 L1514.1 880.6 L1513.9 874.5 L1512.7 870.9 L1511.4 867.3 L1510.2 863.7 L1509.0 860.1 L1507.7 856.5 L1506.5 852.9 L1505.0 852.0 L1503.4 851.0 L1501.9 850.1 L1500.3 849.1 L1498.8 848.2 L1497.2 847.2 L1495.2 845.5 L1493.2 843.8 L1491.2 842.1 L1489.2 840.4 L1487.2 838.7 L1485.2 837.0 L1483.9 835.1 L1482.6 833.3 L1481.3 831.4 L1480.0 829.6 L1478.7 827.7 L1477.4 825.8 L1476.7 823.5 L1476.1 821.2 L1475.4 818.8 L1474.8 816.5 L1474.1 814.2 L1473.5 811.8 L1473.3 808.1 L1473.2 804.3 L1473.0 800.5 L1472.9 796.8 L1472.7 793.0 L1472.6 789.2 L1472.4 774.8 L1472.2 760.4 L1472.0 746.0 L1471.8 731.6 L1471.6 717.2 L1471.4 702.8 L1471.2 689.3 L1471.1 675.8 L1470.9 662.3 L1470.7 648.8 L1470.5 635.3 L1470.4 621.8 L1470.2 609.5 L1470.1 597.2 L1469.9 584.8 L1469.8 572.5 L1469.7 560.1 L1469.5 547.8 L1469.5 543.0 L1469.6 538.3 L1469.6 533.6 L1469.6 528.9 L1469.7 524.1 L1469.7 519.4 L1469.8 517.6 L1469.9 515.7 L1470.0 513.9 L1470.1 512.0 L1470.2 510.2 L1470.3 508.3 L1470.6 506.4 L1470.9 504.4 L1471.3 502.5 L1471.6 500.5 L1471.9 498.6 L1472.2 496.6 L1473.0 494.9 L1473.8 493.2 L1474.6 491.4 L1475.4 489.7 L1476.2 488.0 L1476.9 486.2 L1478.0 484.3 L1479.1 482.4 L1480.1 480.5 L1481.2 478.7 L1482.2 476.8 L1483.3 474.9 L1484.4 473.5 L1485.5 472.1 L1486.6 470.7 L1487.6 469.3 L1488.7 467.9 L1489.8 466.5 L1491.4 465.3 L1493.0 464.0 L1494.6 462.7 L1496.1 461.4 L1497.7 460.1 L1499.3 458.8 L1501.3 458.0 L1503.3 457.2 L1505.3 456.4 L1507.3 455.6 L1509.3 454.8 L1511.3 454.0 L1513.3 450.7 L1515.3 447.4 L1517.3 444.1 L1519.4 440.8 L1521.4 437.5 L1523.4 434.2 L1524.4 428.4 L1525.5 422.6 L1526.5 416.9 L1527.6 411.1 L1528.6 405.4 L1529.7 399.6 L1529.7 387.2 L1529.7 374.7 L1529.7 362.3 L1529.7 349.9 L1529.7 337.4 L1529.7 325.0L1560.0 325.0 L1560.0 912.0Z" fill="#f0f0f0"/>
<path d="M1517.9 911.7L1517.8 905.6 L1517.6 899.4 L1517.5 893.2 L1517.3 887.1 L1517.1 880.9 L1517.0 874.7 L1515.7 871.1 L1514.4 867.5 L1513.1 863.8 L1511.8 860.2 L1510.5 856.6 L1509.2 853.0 L1507.6 852.1 L1506.0 851.2 L1504.4 850.3 L1502.8 849.4 L1501.2 848.5 L1499.6 847.6 L1497.5 845.9 L1495.5 844.2 L1493.4 842.6 L1491.3 840.9 L1489.2 839.2 L1487.1 837.5 L1485.8 835.7 L1484.4 833.8 L1483.0 832.0 L1481.7 830.1 L1480.3 828.3 L1478.9 826.4 L1478.3 824.1 L1477.6 821.8 L1476.9 819.4 L1476.2 817.1 L1475.6 814.8 L1474.9 812.4 L1474.7 808.6 L1474.6 804.8 L1474.4 801.0 L1474.3 797.2 L1474.1 793.4 L1474.0 789.6 L1473.8 775.2 L1473.6 760.7 L1473.4 746.2 L1473.2 731.8 L1473.0 717.3 L1472.8 702.9 L1472.6 689.4 L1472.5 675.9 L1472.3 662.4 L1472.1 648.9 L1472.0 635.4 L1471.8 621.9 L1471.6 609.6 L1471.5 597.2 L1471.4 584.9 L1471.2 572.6 L1471.1 560.2 L1471.0 547.9 L1471.0 543.2 L1471.0 538.5 L1471.0 533.8 L1471.1 529.1 L1471.1 524.4 L1471.1 519.7 L1471.2 517.9 L1471.3 516.0 L1471.4 514.2 L1471.5 512.3 L1471.6 510.5 L1471.7 508.7 L1472.1 506.7 L1472.4 504.8 L1472.7 502.9 L1473.0 500.9 L1473.3 499.0 L1473.6 497.1 L1474.4 495.4 L1475.2 493.7 L1475.9 492.0 L1476.7 490.3 L1477.5 488.6 L1478.2 486.9 L1479.3 485.0 L1480.3 483.1 L1481.3 481.3 L1482.4 479.4 L1483.4 477.5 L1484.4 475.7 L1485.5 474.3 L1486.6 473.0 L1487.7 471.6 L1488.8 470.2 L1489.8 468.9 L1490.9 467.5 L1492.5 466.3 L1494.1 465.0 L1495.7 463.7 L1497.2 462.5 L1498.8 461.2 L1500.4 459.9 L1502.4 459.1 L1504.4 458.4 L1506.4 457.6 L1508.4 456.8 L1510.4 456.0 L1512.4 455.2 L1514.5 451.9 L1516.7 448.5 L1518.8 445.2 L1520.9 441.8 L1523.1 438.4 L1525.2 435.1 L1526.3 429.2 L1527.4 423.3 L1528.5 417.4 L1529.6 411.6 L1530.7 405.7 L1531.8 399.8 L1531.8 387.3 L1531.8 374.9 L1531.8 362.4 L1531.8 349.9 L1531.8 337.5 L1531.8 325.0L1560.0 325.0 L1560.0 912.0Z" fill="#fafafa"/>
<path d="M1521.0 912.0L1520.8 905.8 L1520.7 899.7 L1520.5 893.5 L1520.3 887.3 L1520.2 881.2 L1520.0 875.0 L1518.7 871.3 L1517.3 867.7 L1516.0 864.0 L1514.7 860.3 L1513.3 856.7 L1512.0 853.0 L1510.3 852.2 L1508.7 851.3 L1507.0 850.5 L1505.3 849.7 L1503.7 848.8 L1502.0 848.0 L1499.8 846.3 L1497.7 844.7 L1495.5 843.0 L1493.3 841.3 L1491.2 839.7 L1489.0 838.0 L1487.6 836.2 L1486.2 834.3 L1484.8 832.5 L1483.3 830.7 L1481.9 828.8 L1480.5 827.0 L1479.8 824.7 L1479.1 822.3 L1478.4 820.0 L1477.7 817.7 L1477.0 815.3 L1476.3 813.0 L1476.2 809.2 L1476.0 805.3 L1475.8 801.5 L1475.7 797.7 L1475.6 793.8 L1475.4 790.0 L1475.2 775.5 L1475.0 761.0 L1474.8 746.5 L1474.6 732.0 L1474.4 717.5 L1474.2 703.0 L1474.0 689.5 L1473.9 676.0 L1473.7 662.5 L1473.5 649.0 L1473.4 635.5 L1473.2 622.0 L1473.1 609.7 L1472.9 597.3 L1472.8 585.0 L1472.7 572.7 L1472.5 560.3 L1472.4 548.0 L1472.4 543.3 L1472.5 538.7 L1472.5 534.0 L1472.5 529.3 L1472.6 524.7 L1472.6 520.0 L1472.7 518.2 L1472.8 516.3 L1472.9 514.5 L1473.0 512.7 L1473.1 510.8 L1473.2 509.0 L1473.5 507.1 L1473.8 505.2 L1474.1 503.2 L1474.4 501.3 L1474.7 499.4 L1475.0 497.5 L1475.8 495.8 L1476.5 494.2 L1477.2 492.5 L1478.0 490.8 L1478.8 489.2 L1479.5 487.5 L1480.5 485.7 L1481.5 483.8 L1482.5 482.0 L1483.6 480.2 L1484.6 478.3 L1485.6 476.5 L1486.7 475.2 L1487.7 473.8 L1488.8 472.5 L1489.9 471.2 L1490.9 469.8 L1492.0 468.5 L1493.6 467.2 L1495.2 466.0 L1496.8 464.8 L1498.3 463.5 L1499.9 462.2 L1501.5 461.0 L1503.5 460.2 L1505.5 459.5 L1507.5 458.8 L1509.5 458.0 L1511.5 457.2 L1513.5 456.5 L1515.8 453.1 L1518.0 449.7 L1520.2 446.2 L1522.5 442.8 L1524.8 439.4 L1527.0 436.0 L1528.2 430.0 L1529.3 424.0 L1530.5 418.0 L1531.7 412.0 L1532.8 406.0 L1534.0 400.0 L1534.0 387.5 L1534.0 375.0 L1534.0 362.5 L1534.0 350.0 L1534.0 337.5 L1534.0 325.0L1560.0 325.0 L1560.0 912.0Z" fill="#ffffff"/>
<rect x="1484" y="325" width="60" height="170" fill="url(#gNeck)" style="mix-blend-mode:darken"/>
<g style="mix-blend-mode:darken"><path d="M1486 350 H1513.500 V441 L1486 424Z" fill="url(#gNW)" filter="url(#b2)"/></g>
<path d="M1455 330 H1489 V426 L1463.800 443 H1455Z" fill="#121212"/>
<path d="M1478 358 H1489.500 V425 L1478 432Z" fill="#1c1c1c" filter="url(#b2)"/>
<path d="M1455 330 H1534 V357.500 L1462 353.500Z" fill="#1f1f1f"/>
<path d="M1500 336 H1536 V358 L1500 356Z" fill="#363636" filter="url(#b4)"/>
</g></g>
<g clip-path="url(#cR)"><g filter="url(#cm)">
<rect x="1400" y="300" width="260" height="680" fill="#fff"/>
<path d="M1606.5 971.1L1606.6 964.5 L1606.7 957.9 L1606.7 951.3 L1606.8 944.7 L1606.9 938.1 L1606.9 931.5 L1606.5 928.4 L1606.1 925.2 L1605.8 922.1 L1605.4 918.9 L1605.0 915.8 L1604.6 912.6 L1604.1 909.3 L1603.7 906.0 L1603.3 902.7 L1602.9 899.3 L1602.5 896.0 L1602.1 892.7 L1601.8 889.6 L1601.4 886.6 L1601.1 883.5 L1600.8 880.5 L1600.5 877.4 L1600.2 874.4 L1600.2 871.6 L1600.1 868.9 L1600.0 866.2 L1600.0 863.5 L1599.9 860.7 L1599.8 858.0 L1599.9 855.1 L1599.9 852.1 L1599.9 849.2 L1599.9 846.3 L1599.9 843.3 L1599.9 840.4 L1600.0 830.3 L1600.0 820.3 L1600.1 810.2 L1600.1 800.1 L1600.2 790.1 L1600.2 780.0 L1600.6 758.3 L1600.9 736.7 L1601.3 715.0 L1601.6 693.3 L1601.9 671.7 L1602.3 650.0 L1602.4 638.4 L1602.5 626.9 L1602.5 615.3 L1602.6 603.7 L1602.7 592.2 L1602.8 580.6 L1602.7 575.9 L1602.7 571.2 L1602.6 566.6 L1602.5 561.9 L1602.4 557.2 L1602.3 552.5 L1601.9 549.1 L1601.4 545.6 L1600.9 542.1 L1600.4 538.7 L1599.9 535.2 L1599.5 531.7 L1598.8 528.2 L1598.1 524.6 L1597.4 521.0 L1596.8 517.5 L1596.1 513.9 L1595.4 510.4 L1594.3 507.0 L1593.1 503.7 L1592.0 500.4 L1590.8 497.1 L1589.7 493.8 L1588.5 490.4 L1587.6 487.9 L1586.6 485.4 L1585.7 482.8 L1584.7 480.3 L1583.8 477.7 L1582.8 475.2 L1582.4 474.0 L1582.0 472.9 L1581.5 471.7 L1581.1 470.6 L1580.7 469.4 L1580.2 468.3 L1578.9 465.7 L1577.5 463.1 L1576.2 460.5 L1574.8 457.9 L1573.5 455.2 L1572.1 452.6 L1572.0 451.3 L1571.8 449.9 L1571.7 448.5 L1571.5 447.2 L1571.4 445.8 L1571.2 444.5 L1572.1 442.7 L1572.9 441.0 L1573.8 439.3 L1574.6 437.6 L1575.5 435.8 L1576.3 434.1 L1576.7 431.8 L1577.2 429.4 L1577.6 427.1 L1578.0 424.8 L1578.4 422.4 L1578.8 420.1 L1578.8 405.1 L1578.8 390.1 L1578.8 375.1 L1578.8 360.1 L1578.8 345.1 L1578.8 330.1L1500.0 325.0 L1500.0 960.0Z" fill="#101010"/>
<path d="M1590.1 958.6L1590.2 952.0 L1590.2 945.3 L1590.3 938.7 L1590.3 932.1 L1590.4 925.5 L1590.4 918.9 L1590.5 915.8 L1590.6 912.8 L1590.7 909.8 L1590.8 906.7 L1590.9 903.7 L1591.0 900.6 L1591.0 898.1 L1591.1 895.5 L1591.2 892.9 L1591.3 890.3 L1591.4 887.7 L1591.5 885.1 L1591.6 882.5 L1591.7 879.9 L1591.7 877.3 L1591.8 874.7 L1591.9 872.1 L1592.0 869.4 L1592.0 867.0 L1592.1 864.5 L1592.1 862.0 L1592.1 859.6 L1592.2 857.1 L1592.2 854.6 L1592.3 851.8 L1592.3 849.0 L1592.3 846.2 L1592.4 843.3 L1592.4 840.5 L1592.5 837.7 L1592.5 828.1 L1592.6 818.5 L1592.7 808.8 L1592.8 799.2 L1592.9 789.6 L1593.0 780.0 L1593.2 758.3 L1593.5 736.7 L1593.7 715.0 L1594.0 693.3 L1594.3 671.7 L1594.5 650.0 L1594.6 638.3 L1594.6 626.6 L1594.7 615.0 L1594.8 603.3 L1594.8 591.6 L1594.9 579.9 L1594.8 575.0 L1594.8 570.1 L1594.7 565.2 L1594.6 560.4 L1594.6 555.5 L1594.5 550.6 L1594.1 547.3 L1593.7 543.9 L1593.3 540.6 L1593.0 537.3 L1592.6 534.0 L1592.2 530.7 L1591.5 527.4 L1590.9 524.1 L1590.3 520.8 L1589.7 517.5 L1589.0 514.2 L1588.4 510.9 L1587.4 507.8 L1586.4 504.8 L1585.3 501.7 L1584.3 498.6 L1583.3 495.6 L1582.3 492.5 L1581.3 490.0 L1580.4 487.4 L1579.4 484.9 L1578.4 482.3 L1577.4 479.8 L1576.5 477.2 L1575.9 475.9 L1575.3 474.6 L1574.7 473.3 L1574.1 472.0 L1573.6 470.6 L1573.0 469.3 L1571.7 467.1 L1570.5 464.8 L1569.2 462.5 L1568.0 460.3 L1566.7 458.0 L1565.4 455.8 L1565.1 454.2 L1564.8 452.6 L1564.5 451.1 L1564.2 449.5 L1563.9 448.0 L1563.6 446.4 L1564.0 444.0 L1564.4 441.5 L1564.7 439.1 L1565.1 436.6 L1565.4 434.2 L1565.8 431.7 L1566.0 428.8 L1566.3 425.9 L1566.5 423.0 L1566.7 420.1 L1566.9 417.2 L1567.2 414.3 L1567.2 399.3 L1567.2 384.3 L1567.2 369.3 L1567.2 354.3 L1567.2 339.3 L1567.2 324.3L1500.0 325.0 L1500.0 960.0Z" fill="#181818"/>
<path d="M1588.3 957.2L1588.3 950.5 L1588.4 943.9 L1588.4 937.3 L1588.5 930.7 L1588.5 924.1 L1588.5 917.4 L1588.7 914.4 L1588.8 911.4 L1589.0 908.4 L1589.1 905.3 L1589.3 902.3 L1589.4 899.3 L1589.6 896.8 L1589.7 894.3 L1589.9 891.8 L1590.0 889.3 L1590.2 886.8 L1590.3 884.3 L1590.4 881.7 L1590.5 879.2 L1590.7 876.6 L1590.8 874.0 L1590.9 871.4 L1591.0 868.9 L1591.1 866.4 L1591.1 864.0 L1591.2 861.6 L1591.3 859.1 L1591.3 856.7 L1591.4 854.2 L1591.4 851.4 L1591.4 848.6 L1591.5 845.8 L1591.5 843.0 L1591.6 840.2 L1591.6 837.4 L1591.7 827.8 L1591.8 818.3 L1591.9 808.7 L1592.0 799.1 L1592.1 789.6 L1592.1 780.0 L1592.4 758.3 L1592.6 736.7 L1592.9 715.0 L1593.1 693.3 L1593.4 671.7 L1593.6 650.0 L1593.7 638.3 L1593.8 626.6 L1593.8 614.9 L1593.9 603.2 L1593.9 591.5 L1594.0 579.8 L1593.9 574.9 L1593.9 570.0 L1593.8 565.1 L1593.7 560.2 L1593.7 555.3 L1593.6 550.4 L1593.2 547.1 L1592.9 543.8 L1592.5 540.5 L1592.1 537.2 L1591.7 533.9 L1591.3 530.6 L1590.7 527.3 L1590.1 524.0 L1589.5 520.7 L1588.9 517.5 L1588.2 514.2 L1587.6 510.9 L1586.6 507.9 L1585.6 504.9 L1584.6 501.8 L1583.6 498.8 L1582.6 495.8 L1581.6 492.8 L1580.6 490.2 L1579.6 487.7 L1578.7 485.1 L1577.7 482.6 L1576.7 480.0 L1575.8 477.5 L1575.2 476.1 L1574.6 474.8 L1574.0 473.5 L1573.4 472.1 L1572.7 470.8 L1572.1 469.4 L1570.9 467.2 L1569.7 465.0 L1568.4 462.8 L1567.2 460.6 L1565.9 458.3 L1564.7 456.1 L1564.4 454.5 L1564.0 453.0 L1563.7 451.4 L1563.4 449.8 L1563.1 448.2 L1562.8 446.6 L1563.1 444.1 L1563.4 441.6 L1563.7 439.1 L1564.0 436.5 L1564.3 434.0 L1564.6 431.5 L1564.8 428.5 L1565.0 425.5 L1565.2 422.6 L1565.4 419.6 L1565.6 416.7 L1565.8 413.7 L1565.8 398.7 L1565.8 383.7 L1565.8 368.7 L1565.8 353.7 L1565.8 338.7 L1565.8 323.7L1500.0 325.0 L1500.0 960.0Z" fill="#1f1f1f"/>
<path d="M1586.4 955.7L1586.4 949.1 L1586.5 942.5 L1586.5 935.9 L1586.6 929.2 L1586.6 922.6 L1586.7 916.0 L1586.9 913.0 L1587.1 910.0 L1587.3 906.9 L1587.5 903.9 L1587.7 900.9 L1587.9 897.9 L1588.1 895.5 L1588.3 893.1 L1588.5 890.7 L1588.7 888.3 L1588.9 885.8 L1589.1 883.4 L1589.3 880.9 L1589.4 878.4 L1589.6 875.9 L1589.8 873.4 L1589.9 870.8 L1590.1 868.3 L1590.2 865.9 L1590.2 863.5 L1590.3 861.1 L1590.4 858.7 L1590.4 856.3 L1590.5 853.8 L1590.5 851.1 L1590.6 848.3 L1590.6 845.5 L1590.7 842.7 L1590.7 839.9 L1590.8 837.1 L1590.8 827.6 L1590.9 818.1 L1591.0 808.5 L1591.1 799.0 L1591.2 789.5 L1591.3 780.0 L1591.6 758.3 L1591.8 736.7 L1592.0 715.0 L1592.3 693.3 L1592.5 671.7 L1592.8 650.0 L1592.8 638.3 L1592.9 626.6 L1592.9 614.9 L1593.0 603.2 L1593.0 591.5 L1593.1 579.8 L1593.0 574.8 L1593.0 569.9 L1592.9 564.9 L1592.9 560.0 L1592.8 555.1 L1592.7 550.1 L1592.4 546.8 L1592.0 543.6 L1591.6 540.3 L1591.3 537.0 L1590.9 533.7 L1590.5 530.4 L1589.9 527.2 L1589.3 524.0 L1588.7 520.7 L1588.0 517.5 L1587.4 514.2 L1586.8 511.0 L1585.8 508.0 L1584.8 505.0 L1583.8 502.0 L1582.9 499.0 L1581.9 496.0 L1580.9 493.0 L1579.9 490.5 L1578.9 487.9 L1578.0 485.4 L1577.0 482.8 L1576.0 480.2 L1575.0 477.7 L1574.4 476.3 L1573.8 475.0 L1573.2 473.6 L1572.6 472.3 L1571.9 470.9 L1571.3 469.6 L1570.1 467.4 L1568.9 465.2 L1567.6 463.0 L1566.4 460.8 L1565.2 458.6 L1563.9 456.5 L1563.6 454.9 L1563.3 453.3 L1562.9 451.7 L1562.6 450.1 L1562.2 448.5 L1561.9 446.9 L1562.2 444.3 L1562.4 441.6 L1562.7 439.0 L1562.9 436.4 L1563.2 433.8 L1563.4 431.2 L1563.6 428.2 L1563.8 425.1 L1564.0 422.1 L1564.2 419.1 L1564.3 416.1 L1564.5 413.0 L1564.5 398.0 L1564.5 383.0 L1564.5 368.0 L1564.5 353.0 L1564.5 338.0 L1564.5 323.0L1500.0 325.0 L1500.0 960.0Z" fill="#262626"/>
<path d="M1584.5 954.3L1584.6 947.7 L1584.6 941.1 L1584.7 934.4 L1584.7 927.8 L1584.8 921.2 L1584.8 914.6 L1585.0 911.6 L1585.3 908.6 L1585.6 905.5 L1585.8 902.5 L1586.1 899.5 L1586.3 896.5 L1586.6 894.2 L1586.8 891.9 L1587.1 889.6 L1587.4 887.2 L1587.6 884.9 L1587.9 882.6 L1588.1 880.1 L1588.3 877.6 L1588.5 875.2 L1588.7 872.7 L1588.9 870.2 L1589.1 867.8 L1589.2 865.4 L1589.3 863.0 L1589.4 860.6 L1589.5 858.2 L1589.6 855.8 L1589.6 853.5 L1589.7 850.7 L1589.7 847.9 L1589.8 845.1 L1589.8 842.3 L1589.9 839.6 L1589.9 836.8 L1590.0 827.3 L1590.1 817.8 L1590.2 808.4 L1590.3 798.9 L1590.4 789.5 L1590.5 780.0 L1590.7 758.3 L1591.0 736.7 L1591.2 715.0 L1591.4 693.3 L1591.6 671.7 L1591.9 650.0 L1591.9 638.3 L1592.0 626.6 L1592.0 614.8 L1592.1 603.1 L1592.1 591.4 L1592.2 579.7 L1592.1 574.7 L1592.1 569.8 L1592.0 564.8 L1592.0 559.8 L1591.9 554.9 L1591.8 549.9 L1591.5 546.6 L1591.1 543.4 L1590.8 540.1 L1590.4 536.9 L1590.1 533.6 L1589.7 530.3 L1589.1 527.1 L1588.5 523.9 L1587.9 520.7 L1587.2 517.5 L1586.6 514.2 L1586.0 511.0 L1585.0 508.1 L1584.1 505.1 L1583.1 502.1 L1582.1 499.2 L1581.1 496.2 L1580.2 493.3 L1579.2 490.7 L1578.2 488.1 L1577.2 485.6 L1576.3 483.0 L1575.3 480.5 L1574.3 477.9 L1573.7 476.5 L1573.0 475.2 L1572.4 473.8 L1571.8 472.4 L1571.1 471.1 L1570.5 469.7 L1569.3 467.5 L1568.1 465.4 L1566.8 463.2 L1565.6 461.1 L1564.4 459.0 L1563.2 456.8 L1562.8 455.2 L1562.5 453.6 L1562.1 452.0 L1561.7 450.3 L1561.4 448.7 L1561.0 447.1 L1561.2 444.4 L1561.4 441.7 L1561.6 439.0 L1561.8 436.3 L1562.0 433.6 L1562.2 430.9 L1562.4 427.8 L1562.6 424.7 L1562.7 421.7 L1562.9 418.6 L1563.0 415.5 L1563.2 412.4 L1563.2 397.4 L1563.2 382.4 L1563.2 367.4 L1563.2 352.4 L1563.2 337.4 L1563.2 322.4L1500.0 325.0 L1500.0 960.0Z" fill="#2e2e2e"/>
<path d="M1582.7 952.9L1582.7 946.3 L1582.8 939.6 L1582.8 933.0 L1582.8 926.4 L1582.9 919.8 L1582.9 913.1 L1583.2 910.1 L1583.5 907.1 L1583.8 904.1 L1584.2 901.2 L1584.5 898.2 L1584.8 895.2 L1585.1 892.9 L1585.4 890.7 L1585.7 888.5 L1586.1 886.2 L1586.4 884.0 L1586.7 881.7 L1587.0 879.3 L1587.2 876.9 L1587.5 874.5 L1587.7 872.0 L1588.0 869.6 L1588.2 867.2 L1588.3 864.8 L1588.4 862.5 L1588.5 860.1 L1588.6 857.8 L1588.7 855.4 L1588.8 853.1 L1588.8 850.3 L1588.9 847.5 L1588.9 844.8 L1589.0 842.0 L1589.0 839.2 L1589.0 836.5 L1589.2 827.1 L1589.3 817.6 L1589.4 808.2 L1589.5 798.8 L1589.6 789.4 L1589.7 780.0 L1589.9 758.3 L1590.1 736.7 L1590.3 715.0 L1590.6 693.3 L1590.8 671.7 L1591.0 650.0 L1591.0 638.3 L1591.1 626.5 L1591.1 614.8 L1591.2 603.1 L1591.2 591.3 L1591.3 579.6 L1591.2 574.6 L1591.2 569.6 L1591.1 564.6 L1591.1 559.7 L1591.0 554.7 L1591.0 549.7 L1590.6 546.4 L1590.3 543.2 L1589.9 539.9 L1589.6 536.7 L1589.2 533.5 L1588.9 530.2 L1588.3 527.0 L1587.7 523.8 L1587.0 520.6 L1586.4 517.5 L1585.8 514.3 L1585.2 511.1 L1584.3 508.2 L1583.3 505.2 L1582.3 502.3 L1581.4 499.4 L1580.4 496.4 L1579.5 493.5 L1578.5 490.9 L1577.5 488.4 L1576.5 485.8 L1575.6 483.3 L1574.6 480.7 L1573.6 478.2 L1572.9 476.8 L1572.3 475.4 L1571.6 474.0 L1571.0 472.6 L1570.3 471.2 L1569.7 469.8 L1568.5 467.7 L1567.2 465.6 L1566.0 463.5 L1564.8 461.4 L1563.6 459.3 L1562.4 457.2 L1562.0 455.5 L1561.7 453.9 L1561.3 452.2 L1560.9 450.6 L1560.5 449.0 L1560.2 447.3 L1560.3 444.5 L1560.5 441.8 L1560.6 439.0 L1560.8 436.2 L1560.9 433.4 L1561.0 430.7 L1561.2 427.5 L1561.3 424.3 L1561.5 421.2 L1561.6 418.0 L1561.7 414.9 L1561.9 411.7 L1561.9 396.7 L1561.9 381.7 L1561.9 366.7 L1561.9 351.7 L1561.9 336.7 L1561.9 321.7L1500.0 325.0 L1500.0 960.0Z" fill="#363636"/>
<path d="M1580.8 951.5L1580.8 944.8 L1580.9 938.2 L1580.9 931.6 L1581.0 924.9 L1581.0 918.3 L1581.0 911.7 L1581.4 908.7 L1581.8 905.7 L1582.1 902.8 L1582.5 899.8 L1582.9 896.8 L1583.2 893.8 L1583.6 891.7 L1584.0 889.5 L1584.4 887.3 L1584.7 885.2 L1585.1 883.0 L1585.5 880.9 L1585.8 878.5 L1586.1 876.1 L1586.4 873.8 L1586.7 871.4 L1587.0 869.0 L1587.3 866.6 L1587.4 864.3 L1587.5 862.0 L1587.6 859.7 L1587.7 857.3 L1587.8 855.0 L1587.9 852.7 L1588.0 849.9 L1588.0 847.2 L1588.1 844.4 L1588.1 841.7 L1588.2 838.9 L1588.2 836.2 L1588.3 826.8 L1588.4 817.4 L1588.5 808.1 L1588.6 798.7 L1588.7 789.4 L1588.8 780.0 L1589.1 758.3 L1589.3 736.7 L1589.5 715.0 L1589.7 693.3 L1589.9 671.7 L1590.1 650.0 L1590.2 638.3 L1590.2 626.5 L1590.3 614.8 L1590.3 603.0 L1590.4 591.3 L1590.4 579.5 L1590.3 574.5 L1590.3 569.5 L1590.2 564.5 L1590.2 559.5 L1590.1 554.5 L1590.1 549.5 L1589.7 546.2 L1589.4 543.0 L1589.1 539.8 L1588.7 536.5 L1588.4 533.3 L1588.0 530.1 L1587.4 526.9 L1586.8 523.8 L1586.2 520.6 L1585.6 517.5 L1585.0 514.3 L1584.4 511.1 L1583.5 508.2 L1582.5 505.3 L1581.6 502.4 L1580.6 499.5 L1579.7 496.6 L1578.8 493.7 L1577.8 491.2 L1576.8 488.6 L1575.8 486.1 L1574.8 483.5 L1573.9 480.9 L1572.9 478.4 L1572.2 477.0 L1571.5 475.6 L1570.9 474.2 L1570.2 472.7 L1569.5 471.3 L1568.8 469.9 L1567.6 467.8 L1566.4 465.8 L1565.2 463.7 L1564.0 461.7 L1562.9 459.6 L1561.7 457.5 L1561.3 455.9 L1560.9 454.2 L1560.5 452.5 L1560.1 450.9 L1559.7 449.2 L1559.3 447.5 L1559.4 444.7 L1559.5 441.8 L1559.6 439.0 L1559.7 436.1 L1559.8 433.2 L1559.8 430.4 L1560.0 427.2 L1560.1 423.9 L1560.2 420.7 L1560.3 417.5 L1560.4 414.3 L1560.5 411.1 L1560.5 396.1 L1560.5 381.1 L1560.5 366.1 L1560.5 351.1 L1560.5 336.1 L1560.5 321.1L1500.0 325.0 L1500.0 960.0Z" fill="#3f3f3f"/>
<path d="M1578.9 950.0L1579.0 943.4 L1579.0 936.8 L1579.1 930.1 L1579.1 923.5 L1579.1 916.9 L1579.2 910.3 L1579.6 907.3 L1580.0 904.3 L1580.4 901.4 L1580.8 898.4 L1581.3 895.4 L1581.7 892.4 L1582.1 890.4 L1582.6 888.3 L1583.0 886.2 L1583.4 884.2 L1583.9 882.1 L1584.3 880.0 L1584.6 877.7 L1585.0 875.4 L1585.3 873.0 L1585.7 870.7 L1586.0 868.4 L1586.3 866.1 L1586.4 863.8 L1586.6 861.5 L1586.7 859.2 L1586.8 856.9 L1586.9 854.6 L1587.0 852.3 L1587.1 849.6 L1587.1 846.8 L1587.2 844.1 L1587.2 841.3 L1587.3 838.6 L1587.3 835.8 L1587.5 826.5 L1587.6 817.2 L1587.7 807.9 L1587.8 798.6 L1587.9 789.3 L1588.0 780.0 L1588.2 758.3 L1588.4 736.7 L1588.6 715.0 L1588.8 693.3 L1589.0 671.7 L1589.2 650.0 L1589.3 638.2 L1589.3 626.5 L1589.4 614.7 L1589.4 603.0 L1589.5 591.2 L1589.5 579.5 L1589.4 574.4 L1589.4 569.4 L1589.3 564.4 L1589.3 559.3 L1589.2 554.3 L1589.2 549.2 L1588.9 546.0 L1588.5 542.8 L1588.2 539.6 L1587.9 536.4 L1587.5 533.2 L1587.2 530.0 L1586.6 526.8 L1586.0 523.7 L1585.4 520.6 L1584.8 517.5 L1584.2 514.3 L1583.6 511.2 L1582.7 508.3 L1581.8 505.5 L1580.8 502.6 L1579.9 499.7 L1579.0 496.8 L1578.0 494.0 L1577.1 491.4 L1576.1 488.9 L1575.1 486.3 L1574.1 483.7 L1573.1 481.2 L1572.2 478.6 L1571.5 477.2 L1570.8 475.8 L1570.1 474.3 L1569.4 472.9 L1568.7 471.5 L1568.0 470.0 L1566.8 468.0 L1565.6 466.0 L1564.5 464.0 L1563.3 461.9 L1562.1 459.9 L1560.9 457.9 L1560.5 456.2 L1560.1 454.5 L1559.7 452.8 L1559.3 451.1 L1558.9 449.4 L1558.4 447.8 L1558.5 444.8 L1558.5 441.9 L1558.5 438.9 L1558.6 436.0 L1558.6 433.1 L1558.7 430.1 L1558.7 426.8 L1558.8 423.6 L1558.9 420.3 L1559.0 417.0 L1559.1 413.7 L1559.2 410.4 L1559.2 395.4 L1559.2 380.4 L1559.2 365.4 L1559.2 350.4 L1559.2 335.4 L1559.2 320.4L1500.0 325.0 L1500.0 960.0Z" fill="#494949"/>
<path d="M1577.1 948.6L1577.1 942.0 L1577.1 935.4 L1577.2 928.7 L1577.2 922.1 L1577.2 915.5 L1577.3 908.8 L1577.8 905.9 L1578.2 902.9 L1578.7 899.9 L1579.2 897.0 L1579.7 894.0 L1580.1 891.1 L1580.6 889.1 L1581.1 887.1 L1581.6 885.1 L1582.1 883.1 L1582.6 881.2 L1583.1 879.2 L1583.5 876.9 L1583.9 874.6 L1584.2 872.3 L1584.6 870.1 L1585.0 867.8 L1585.4 865.5 L1585.5 863.2 L1585.7 861.0 L1585.8 858.7 L1585.9 856.5 L1586.0 854.2 L1586.2 851.9 L1586.2 849.2 L1586.3 846.5 L1586.3 843.7 L1586.4 841.0 L1586.4 838.3 L1586.5 835.5 L1586.6 826.3 L1586.7 817.0 L1586.8 807.8 L1587.0 798.5 L1587.1 789.3 L1587.2 780.0 L1587.4 758.3 L1587.6 736.7 L1587.8 715.0 L1588.0 693.3 L1588.2 671.7 L1588.4 650.0 L1588.4 638.2 L1588.4 626.5 L1588.5 614.7 L1588.5 602.9 L1588.6 591.2 L1588.6 579.4 L1588.5 574.3 L1588.5 569.3 L1588.4 564.2 L1588.4 559.1 L1588.3 554.1 L1588.3 549.0 L1588.0 545.8 L1587.7 542.6 L1587.3 539.4 L1587.0 536.2 L1586.7 533.0 L1586.4 529.8 L1585.8 526.7 L1585.2 523.7 L1584.6 520.6 L1584.0 517.5 L1583.4 514.4 L1582.8 511.3 L1581.9 508.4 L1581.0 505.6 L1580.1 502.7 L1579.2 499.9 L1578.3 497.1 L1577.3 494.2 L1576.4 491.6 L1575.4 489.1 L1574.4 486.5 L1573.4 484.0 L1572.4 481.4 L1571.4 478.8 L1570.7 477.4 L1570.0 475.9 L1569.3 474.5 L1568.6 473.1 L1567.9 471.6 L1567.2 470.2 L1566.0 468.2 L1564.8 466.2 L1563.7 464.2 L1562.5 462.2 L1561.3 460.2 L1560.1 458.2 L1559.7 456.5 L1559.3 454.8 L1558.9 453.1 L1558.4 451.4 L1558.0 449.7 L1557.6 448.0 L1557.6 445.0 L1557.5 441.9 L1557.5 438.9 L1557.5 435.9 L1557.5 432.9 L1557.5 429.8 L1557.5 426.5 L1557.6 423.2 L1557.7 419.8 L1557.7 416.5 L1557.8 413.1 L1557.9 409.8 L1557.9 394.8 L1557.9 379.8 L1557.9 364.8 L1557.9 349.8 L1557.9 334.8 L1557.9 319.8L1500.0 325.0 L1500.0 960.0Z" fill="#525252"/>
<path d="M1575.2 947.2L1575.2 940.6 L1575.3 933.9 L1575.3 927.3 L1575.3 920.7 L1575.4 914.0 L1575.4 907.4 L1575.9 904.4 L1576.5 901.5 L1577.0 898.5 L1577.5 895.6 L1578.1 892.7 L1578.6 889.7 L1579.1 887.8 L1579.7 885.9 L1580.2 884.0 L1580.8 882.1 L1581.3 880.2 L1581.9 878.3 L1582.3 876.1 L1582.8 873.9 L1583.2 871.6 L1583.6 869.4 L1584.0 867.2 L1584.5 864.9 L1584.6 862.7 L1584.7 860.5 L1584.9 858.2 L1585.0 856.0 L1585.2 853.8 L1585.3 851.5 L1585.4 848.8 L1585.4 846.1 L1585.5 843.4 L1585.5 840.7 L1585.6 837.9 L1585.7 835.2 L1585.8 826.0 L1585.9 816.8 L1586.0 807.6 L1586.1 798.4 L1586.2 789.2 L1586.4 780.0 L1586.5 758.3 L1586.7 736.7 L1586.9 715.0 L1587.1 693.3 L1587.3 671.7 L1587.5 650.0 L1587.5 638.2 L1587.5 626.4 L1587.6 614.7 L1587.6 602.9 L1587.7 591.1 L1587.7 579.3 L1587.7 574.2 L1587.6 569.1 L1587.6 564.0 L1587.5 559.0 L1587.5 553.9 L1587.4 548.8 L1587.1 545.6 L1586.8 542.4 L1586.5 539.3 L1586.2 536.1 L1585.9 532.9 L1585.6 529.7 L1585.0 526.7 L1584.4 523.6 L1583.8 520.5 L1583.2 517.5 L1582.6 514.4 L1582.0 511.3 L1581.1 508.5 L1580.2 505.7 L1579.3 502.9 L1578.4 500.1 L1577.5 497.3 L1576.6 494.4 L1575.6 491.9 L1574.7 489.3 L1573.7 486.8 L1572.7 484.2 L1571.7 481.6 L1570.7 479.1 L1570.0 477.6 L1569.3 476.1 L1568.5 474.7 L1567.8 473.2 L1567.1 471.7 L1566.4 470.3 L1565.2 468.3 L1564.0 466.4 L1562.9 464.4 L1561.7 462.5 L1560.5 460.5 L1559.4 458.6 L1558.9 456.9 L1558.5 455.1 L1558.0 453.4 L1557.6 451.7 L1557.2 449.9 L1556.7 448.2 L1556.6 445.1 L1556.6 442.0 L1556.5 438.9 L1556.4 435.8 L1556.3 432.7 L1556.3 429.6 L1556.3 426.2 L1556.4 422.8 L1556.4 419.3 L1556.5 415.9 L1556.5 412.5 L1556.6 409.1 L1556.6 394.1 L1556.6 379.1 L1556.6 364.1 L1556.6 349.1 L1556.6 334.1 L1556.6 319.1L1500.0 325.0 L1500.0 960.0Z" fill="#5c5c5c"/>
<path d="M1573.3 945.8L1573.4 939.1 L1573.4 932.5 L1573.4 925.9 L1573.5 919.2 L1573.5 912.6 L1573.5 906.0 L1574.1 903.0 L1574.7 900.1 L1575.3 897.1 L1575.9 894.2 L1576.5 891.3 L1577.0 888.3 L1577.6 886.5 L1578.3 884.7 L1578.9 882.9 L1579.5 881.1 L1580.1 879.3 L1580.7 877.5 L1581.2 875.3 L1581.6 873.1 L1582.1 870.9 L1582.6 868.7 L1583.0 866.6 L1583.5 864.4 L1583.7 862.2 L1583.8 860.0 L1584.0 857.8 L1584.1 855.6 L1584.3 853.4 L1584.4 851.2 L1584.5 848.4 L1584.6 845.7 L1584.6 843.0 L1584.7 840.3 L1584.7 837.6 L1584.8 834.9 L1584.9 825.8 L1585.0 816.6 L1585.2 807.5 L1585.3 798.3 L1585.4 789.2 L1585.5 780.0 L1585.7 758.3 L1585.9 736.7 L1586.1 715.0 L1586.2 693.3 L1586.4 671.7 L1586.6 650.0 L1586.6 638.2 L1586.7 626.4 L1586.7 614.6 L1586.7 602.8 L1586.8 591.0 L1586.8 579.2 L1586.8 574.1 L1586.7 569.0 L1586.7 563.9 L1586.6 558.8 L1586.6 553.7 L1586.5 548.6 L1586.2 545.4 L1585.9 542.2 L1585.6 539.1 L1585.3 535.9 L1585.0 532.8 L1584.7 529.6 L1584.1 526.6 L1583.6 523.5 L1583.0 520.5 L1582.4 517.5 L1581.8 514.4 L1581.2 511.4 L1580.4 508.6 L1579.5 505.8 L1578.6 503.0 L1577.7 500.2 L1576.8 497.5 L1575.9 494.7 L1574.9 492.1 L1574.0 489.6 L1573.0 487.0 L1572.0 484.4 L1571.0 481.9 L1570.0 479.3 L1569.3 477.8 L1568.5 476.3 L1567.8 474.9 L1567.0 473.4 L1566.3 471.9 L1565.5 470.4 L1564.4 468.5 L1563.2 466.6 L1562.1 464.7 L1560.9 462.8 L1559.8 460.8 L1558.6 458.9 L1558.2 457.2 L1557.7 455.4 L1557.2 453.7 L1556.8 451.9 L1556.3 450.2 L1555.8 448.4 L1555.7 445.2 L1555.6 442.1 L1555.5 438.9 L1555.3 435.7 L1555.2 432.5 L1555.1 429.3 L1555.1 425.8 L1555.1 422.4 L1555.2 418.9 L1555.2 415.4 L1555.2 411.9 L1555.2 408.5 L1555.2 393.5 L1555.2 378.5 L1555.2 363.5 L1555.2 348.5 L1555.2 333.5 L1555.2 318.5L1500.0 325.0 L1500.0 960.0Z" fill="#656565"/>
<path d="M1571.5 944.3L1571.5 937.7 L1571.5 931.1 L1571.6 924.4 L1571.6 917.8 L1571.6 911.2 L1571.7 904.5 L1572.3 901.6 L1572.9 898.7 L1573.6 895.8 L1574.2 892.8 L1574.9 889.9 L1575.5 887.0 L1576.2 885.3 L1576.8 883.5 L1577.5 881.8 L1578.2 880.1 L1578.8 878.3 L1579.5 876.6 L1580.0 874.5 L1580.5 872.3 L1581.0 870.2 L1581.6 868.1 L1582.1 866.0 L1582.6 863.8 L1582.7 861.6 L1582.9 859.5 L1583.1 857.3 L1583.2 855.1 L1583.4 852.9 L1583.6 850.8 L1583.6 848.1 L1583.7 845.4 L1583.8 842.7 L1583.8 840.0 L1583.9 837.3 L1584.0 834.6 L1584.1 825.5 L1584.2 816.4 L1584.3 807.3 L1584.5 798.2 L1584.6 789.1 L1584.7 780.0 L1584.9 758.3 L1585.0 736.7 L1585.2 715.0 L1585.4 693.3 L1585.5 671.7 L1585.7 650.0 L1585.7 638.2 L1585.8 626.4 L1585.8 614.6 L1585.8 602.8 L1585.9 591.0 L1585.9 579.2 L1585.9 574.0 L1585.8 568.9 L1585.8 563.8 L1585.7 558.6 L1585.7 553.5 L1585.6 548.3 L1585.3 545.2 L1585.1 542.1 L1584.8 538.9 L1584.5 535.8 L1584.2 532.6 L1583.9 529.5 L1583.3 526.5 L1582.8 523.5 L1582.2 520.5 L1581.6 517.5 L1581.0 514.4 L1580.4 511.4 L1579.6 508.7 L1578.7 505.9 L1577.8 503.2 L1577.0 500.4 L1576.1 497.7 L1575.2 494.9 L1574.2 492.4 L1573.2 489.8 L1572.3 487.2 L1571.3 484.7 L1570.3 482.1 L1569.3 479.5 L1568.5 478.0 L1567.8 476.5 L1567.0 475.0 L1566.2 473.5 L1565.5 472.0 L1564.7 470.5 L1563.6 468.6 L1562.4 466.8 L1561.3 464.9 L1560.1 463.0 L1559.0 461.2 L1557.9 459.3 L1557.4 457.5 L1556.9 455.7 L1556.4 454.0 L1555.9 452.2 L1555.5 450.4 L1555.0 448.7 L1554.8 445.4 L1554.6 442.1 L1554.4 438.8 L1554.2 435.6 L1554.1 432.3 L1553.9 429.0 L1553.9 425.5 L1553.9 422.0 L1553.9 418.4 L1553.9 414.9 L1553.9 411.3 L1553.9 407.8 L1553.9 392.8 L1553.9 377.8 L1553.9 362.8 L1553.9 347.8 L1553.9 332.8 L1553.9 317.8L1500.0 325.0 L1500.0 960.0Z" fill="#6f6f6f"/>
<path d="M1569.6 942.9L1569.6 936.3 L1569.7 929.6 L1569.7 923.0 L1569.7 916.4 L1569.8 909.7 L1569.8 903.1 L1570.5 900.2 L1571.2 897.3 L1571.9 894.4 L1572.6 891.4 L1573.3 888.5 L1573.9 885.6 L1574.7 884.0 L1575.4 882.3 L1576.1 880.7 L1576.8 879.0 L1577.6 877.4 L1578.3 875.8 L1578.9 873.7 L1579.4 871.6 L1580.0 869.5 L1580.5 867.4 L1581.1 865.3 L1581.6 863.3 L1581.8 861.1 L1582.0 859.0 L1582.2 856.8 L1582.4 854.7 L1582.5 852.5 L1582.7 850.4 L1582.8 847.7 L1582.8 845.0 L1582.9 842.3 L1583.0 839.7 L1583.0 837.0 L1583.1 834.3 L1583.2 825.3 L1583.4 816.2 L1583.5 807.2 L1583.6 798.1 L1583.7 789.1 L1583.9 780.0 L1584.0 758.3 L1584.2 736.7 L1584.4 715.0 L1584.5 693.3 L1584.7 671.7 L1584.8 650.0 L1584.9 638.2 L1584.9 626.4 L1584.9 614.5 L1584.9 602.7 L1585.0 590.9 L1585.0 579.1 L1585.0 573.9 L1584.9 568.8 L1584.9 563.6 L1584.8 558.4 L1584.8 553.3 L1584.7 548.1 L1584.5 545.0 L1584.2 541.9 L1583.9 538.7 L1583.6 535.6 L1583.4 532.5 L1583.1 529.4 L1582.5 526.4 L1581.9 523.4 L1581.4 520.4 L1580.8 517.5 L1580.2 514.5 L1579.6 511.5 L1578.8 508.8 L1577.9 506.0 L1577.1 503.3 L1576.2 500.6 L1575.4 497.9 L1574.5 495.2 L1573.5 492.6 L1572.5 490.0 L1571.5 487.5 L1570.5 484.9 L1569.6 482.3 L1568.6 479.8 L1567.8 478.2 L1567.0 476.7 L1566.2 475.2 L1565.4 473.7 L1564.7 472.2 L1563.9 470.6 L1562.7 468.8 L1561.6 467.0 L1560.5 465.1 L1559.4 463.3 L1558.2 461.5 L1557.1 459.6 L1556.6 457.9 L1556.1 456.1 L1555.6 454.3 L1555.1 452.5 L1554.6 450.7 L1554.1 448.9 L1553.9 445.5 L1553.6 442.2 L1553.4 438.8 L1553.2 435.5 L1552.9 432.1 L1552.7 428.8 L1552.7 425.2 L1552.7 421.6 L1552.6 418.0 L1552.6 414.4 L1552.6 410.8 L1552.6 407.2 L1552.6 392.2 L1552.6 377.2 L1552.6 362.2 L1552.6 347.2 L1552.6 332.2 L1552.6 317.2L1500.0 325.0 L1500.0 960.0Z" fill="#787878"/>
<path d="M1567.8 941.5L1567.8 934.9 L1567.8 928.2 L1567.8 921.6 L1567.8 914.9 L1567.9 908.3 L1567.9 901.6 L1568.7 898.8 L1569.4 895.8 L1570.2 893.0 L1570.9 890.0 L1571.7 887.1 L1572.4 884.2 L1573.2 882.7 L1574.0 881.1 L1574.8 879.6 L1575.5 878.0 L1576.3 876.5 L1577.1 874.9 L1577.7 872.9 L1578.3 870.8 L1578.9 868.8 L1579.5 866.8 L1580.1 864.7 L1580.7 862.7 L1580.9 860.6 L1581.1 858.5 L1581.3 856.4 L1581.5 854.2 L1581.7 852.1 L1581.8 850.0 L1581.9 847.3 L1582.0 844.7 L1582.0 842.0 L1582.1 839.3 L1582.2 836.7 L1582.2 834.0 L1582.4 825.0 L1582.5 816.0 L1582.7 807.0 L1582.8 798.0 L1582.9 789.0 L1583.0 780.0 L1583.2 758.3 L1583.3 736.7 L1583.5 715.0 L1583.7 693.3 L1583.8 671.7 L1584.0 650.0 L1584.0 638.2 L1584.0 626.3 L1584.0 614.5 L1584.1 602.7 L1584.1 590.8 L1584.1 579.0 L1584.1 573.8 L1584.0 568.6 L1584.0 563.5 L1583.9 558.3 L1583.9 553.1 L1583.8 547.9 L1583.6 544.8 L1583.3 541.7 L1583.1 538.6 L1582.8 535.5 L1582.5 532.4 L1582.2 529.2 L1581.7 526.3 L1581.1 523.4 L1580.5 520.4 L1580.0 517.5 L1579.4 514.5 L1578.8 511.5 L1578.0 508.9 L1577.2 506.2 L1576.3 503.5 L1575.5 500.8 L1574.6 498.1 L1573.8 495.4 L1572.8 492.8 L1571.8 490.3 L1570.8 487.7 L1569.8 485.1 L1568.8 482.6 L1567.8 480.0 L1567.1 478.5 L1566.2 476.9 L1565.5 475.4 L1564.7 473.8 L1563.8 472.3 L1563.0 470.8 L1561.9 469.0 L1560.8 467.2 L1559.7 465.4 L1558.6 463.6 L1557.5 461.8 L1556.3 460.0 L1555.8 458.2 L1555.3 456.4 L1554.8 454.5 L1554.3 452.7 L1553.8 450.9 L1553.2 449.1 L1553.0 445.7 L1552.7 442.2 L1552.4 438.8 L1552.1 435.4 L1551.8 431.9 L1551.5 428.5 L1551.5 424.8 L1551.4 421.2 L1551.4 417.5 L1551.3 413.8 L1551.3 410.2 L1551.2 406.5 L1551.2 391.5 L1551.2 376.5 L1551.2 361.5 L1551.2 346.5 L1551.2 331.5 L1551.2 316.5L1500.0 325.0 L1500.0 960.0Z" fill="#828282"/>
<path d="M1565.9 940.1L1565.9 933.4 L1565.9 926.8 L1566.0 920.1 L1566.0 913.5 L1566.0 906.9 L1566.0 900.2 L1566.8 897.3 L1567.6 894.4 L1568.4 891.5 L1569.2 888.7 L1570.0 885.8 L1570.9 882.9 L1571.7 881.4 L1572.5 879.9 L1573.4 878.5 L1574.2 877.0 L1575.1 875.5 L1575.9 874.0 L1576.5 872.1 L1577.2 870.1 L1577.8 868.1 L1578.5 866.1 L1579.1 864.1 L1579.8 862.1 L1580.0 860.1 L1580.2 858.0 L1580.4 855.9 L1580.6 853.8 L1580.8 851.7 L1581.0 849.6 L1581.1 847.0 L1581.1 844.3 L1581.2 841.7 L1581.3 839.0 L1581.3 836.3 L1581.4 833.7 L1581.5 824.7 L1581.7 815.8 L1581.8 806.8 L1581.9 797.9 L1582.1 788.9 L1582.2 780.0 L1582.4 758.3 L1582.5 736.7 L1582.6 715.0 L1582.8 693.3 L1582.9 671.7 L1583.1 650.0 L1583.1 638.2 L1583.1 626.3 L1583.1 614.5 L1583.2 602.6 L1583.2 590.8 L1583.2 578.9 L1583.2 573.7 L1583.1 568.5 L1583.1 563.3 L1583.0 558.1 L1583.0 552.9 L1583.0 547.7 L1582.7 544.6 L1582.4 541.5 L1582.2 538.4 L1581.9 535.3 L1581.7 532.2 L1581.4 529.1 L1580.9 526.2 L1580.3 523.3 L1579.7 520.4 L1579.2 517.4 L1578.6 514.5 L1578.1 511.6 L1577.2 508.9 L1576.4 506.3 L1575.6 503.6 L1574.7 501.0 L1573.9 498.3 L1573.1 495.6 L1572.1 493.1 L1571.1 490.5 L1570.1 487.9 L1569.1 485.4 L1568.1 482.8 L1567.1 480.2 L1566.3 478.7 L1565.5 477.1 L1564.7 475.6 L1563.9 474.0 L1563.0 472.4 L1562.2 470.9 L1561.1 469.1 L1560.0 467.4 L1558.9 465.6 L1557.8 463.9 L1556.7 462.1 L1555.6 460.4 L1555.1 458.5 L1554.5 456.7 L1554.0 454.8 L1553.5 453.0 L1552.9 451.2 L1552.4 449.3 L1552.0 445.8 L1551.7 442.3 L1551.3 438.8 L1551.0 435.3 L1550.7 431.7 L1550.3 428.2 L1550.2 424.5 L1550.2 420.8 L1550.1 417.0 L1550.1 413.3 L1550.0 409.6 L1549.9 405.8 L1549.9 390.8 L1549.9 375.8 L1549.9 360.8 L1549.9 345.8 L1549.9 330.8 L1549.9 315.8L1500.0 325.0 L1500.0 960.0Z" fill="#8b8b8b"/>
<path d="M1564.0 938.7L1564.0 932.0 L1564.1 925.4 L1564.1 918.7 L1564.1 912.1 L1564.1 905.4 L1564.1 898.8 L1565.0 895.9 L1565.9 893.0 L1566.7 890.1 L1567.6 887.3 L1568.4 884.4 L1569.3 881.5 L1570.2 880.1 L1571.1 878.7 L1572.0 877.4 L1572.9 876.0 L1573.8 874.6 L1574.7 873.2 L1575.4 871.3 L1576.1 869.3 L1576.8 867.4 L1577.4 865.4 L1578.1 863.5 L1578.8 861.6 L1579.0 859.5 L1579.3 857.5 L1579.5 855.4 L1579.7 853.3 L1579.9 851.3 L1580.1 849.2 L1580.2 846.6 L1580.3 843.9 L1580.3 841.3 L1580.4 838.7 L1580.5 836.0 L1580.5 833.4 L1580.7 824.5 L1580.8 815.6 L1581.0 806.7 L1581.1 797.8 L1581.3 788.9 L1581.4 780.0 L1581.5 758.3 L1581.7 736.7 L1581.8 715.0 L1581.9 693.3 L1582.1 671.7 L1582.2 650.0 L1582.2 638.1 L1582.2 626.3 L1582.2 614.4 L1582.3 602.6 L1582.3 590.7 L1582.3 578.8 L1582.3 573.6 L1582.2 568.4 L1582.2 563.1 L1582.1 557.9 L1582.1 552.7 L1582.1 547.5 L1581.8 544.4 L1581.6 541.3 L1581.3 538.2 L1581.1 535.2 L1580.8 532.1 L1580.6 529.0 L1580.0 526.1 L1579.5 523.2 L1578.9 520.3 L1578.4 517.4 L1577.8 514.6 L1577.3 511.7 L1576.4 509.0 L1575.6 506.4 L1574.8 503.8 L1574.0 501.1 L1573.2 498.5 L1572.4 495.9 L1571.4 493.3 L1570.4 490.7 L1569.4 488.2 L1568.4 485.6 L1567.4 483.0 L1566.4 480.5 L1565.6 478.9 L1564.7 477.3 L1563.9 475.7 L1563.1 474.1 L1562.2 472.6 L1561.4 471.0 L1560.3 469.3 L1559.2 467.6 L1558.1 465.8 L1557.0 464.1 L1555.9 462.4 L1554.8 460.7 L1554.3 458.8 L1553.7 457.0 L1553.2 455.1 L1552.6 453.3 L1552.1 451.4 L1551.5 449.5 L1551.1 445.9 L1550.7 442.4 L1550.3 438.8 L1549.9 435.2 L1549.5 431.6 L1549.1 428.0 L1549.0 424.2 L1548.9 420.4 L1548.9 416.6 L1548.8 412.8 L1548.7 409.0 L1548.6 405.2 L1548.6 390.2 L1548.6 375.2 L1548.6 360.2 L1548.6 345.2 L1548.6 330.2 L1548.6 315.2L1500.0 325.0 L1500.0 960.0Z" fill="#949494"/>
<path d="M1562.2 937.2L1562.2 930.6 L1562.2 923.9 L1562.2 917.3 L1562.2 910.6 L1562.2 904.0 L1562.3 897.3 L1563.2 894.5 L1564.1 891.6 L1565.0 888.8 L1565.9 885.9 L1566.8 883.0 L1567.8 880.2 L1568.7 878.9 L1569.7 877.5 L1570.6 876.2 L1571.6 874.9 L1572.5 873.6 L1573.5 872.3 L1574.2 870.5 L1575.0 868.6 L1575.7 866.7 L1576.4 864.8 L1577.2 862.9 L1577.9 861.0 L1578.1 859.0 L1578.3 857.0 L1578.6 854.9 L1578.8 852.9 L1579.0 850.9 L1579.3 848.8 L1579.3 846.2 L1579.4 843.6 L1579.5 841.0 L1579.6 838.3 L1579.6 835.7 L1579.7 833.1 L1579.8 824.2 L1580.0 815.4 L1580.1 806.5 L1580.3 797.7 L1580.4 788.8 L1580.6 780.0 L1580.7 758.3 L1580.8 736.7 L1580.9 715.0 L1581.1 693.3 L1581.2 671.7 L1581.3 650.0 L1581.3 638.1 L1581.3 626.3 L1581.4 614.4 L1581.4 602.5 L1581.4 590.6 L1581.4 578.8 L1581.4 573.5 L1581.3 568.3 L1581.3 563.0 L1581.3 557.7 L1581.2 552.5 L1581.2 547.2 L1580.9 544.2 L1580.7 541.1 L1580.5 538.1 L1580.2 535.0 L1580.0 531.9 L1579.8 528.9 L1579.2 526.0 L1578.7 523.2 L1578.1 520.3 L1577.6 517.4 L1577.0 514.6 L1576.5 511.7 L1575.7 509.1 L1574.9 506.5 L1574.1 503.9 L1573.3 501.3 L1572.5 498.7 L1571.7 496.1 L1570.7 493.5 L1569.7 491.0 L1568.7 488.4 L1567.7 485.8 L1566.7 483.3 L1565.7 480.7 L1564.8 479.1 L1564.0 477.5 L1563.1 475.9 L1562.3 474.3 L1561.4 472.7 L1560.6 471.1 L1559.5 469.4 L1558.4 467.8 L1557.3 466.1 L1556.2 464.4 L1555.2 462.7 L1554.1 461.1 L1553.5 459.2 L1552.9 457.3 L1552.4 455.4 L1551.8 453.5 L1551.2 451.7 L1550.7 449.8 L1550.2 446.1 L1549.7 442.4 L1549.3 438.7 L1548.8 435.1 L1548.4 431.4 L1547.9 427.7 L1547.8 423.8 L1547.7 420.0 L1547.6 416.1 L1547.5 412.3 L1547.4 408.4 L1547.3 404.5 L1547.3 389.5 L1547.3 374.5 L1547.3 359.5 L1547.3 344.5 L1547.3 329.5 L1547.3 314.5L1500.0 325.0 L1500.0 960.0Z" fill="#9e9e9e"/>
<path d="M1560.3 935.8L1560.3 929.2 L1560.3 922.5 L1560.3 915.9 L1560.4 909.2 L1560.4 902.6 L1560.4 895.9 L1561.4 893.1 L1562.3 890.2 L1563.3 887.4 L1564.3 884.5 L1565.2 881.6 L1566.2 878.8 L1567.2 877.6 L1568.2 876.4 L1569.3 875.1 L1570.3 873.9 L1571.3 872.7 L1572.3 871.5 L1573.1 869.6 L1573.8 867.8 L1574.6 866.0 L1575.4 864.1 L1576.2 862.3 L1576.9 860.5 L1577.2 858.5 L1577.4 856.5 L1577.7 854.5 L1577.9 852.5 L1578.1 850.5 L1578.4 848.5 L1578.5 845.8 L1578.5 843.2 L1578.6 840.6 L1578.7 838.0 L1578.8 835.4 L1578.8 832.8 L1579.0 824.0 L1579.1 815.2 L1579.3 806.4 L1579.4 797.6 L1579.6 788.8 L1579.7 780.0 L1579.9 758.3 L1580.0 736.7 L1580.1 715.0 L1580.2 693.3 L1580.3 671.7 L1580.4 650.0 L1580.4 638.1 L1580.5 626.2 L1580.5 614.3 L1580.5 602.5 L1580.5 590.6 L1580.5 578.7 L1580.5 573.4 L1580.4 568.1 L1580.4 562.9 L1580.4 557.6 L1580.3 552.3 L1580.3 547.0 L1580.1 544.0 L1579.8 540.9 L1579.6 537.9 L1579.4 534.9 L1579.2 531.8 L1578.9 528.8 L1578.4 525.9 L1577.8 523.1 L1577.3 520.3 L1576.8 517.4 L1576.2 514.6 L1575.7 511.8 L1574.9 509.2 L1574.1 506.6 L1573.3 504.1 L1572.5 501.5 L1571.8 498.9 L1571.0 496.4 L1570.0 493.8 L1569.0 491.2 L1568.0 488.6 L1567.0 486.1 L1566.0 483.5 L1565.0 480.9 L1564.1 479.3 L1563.2 477.7 L1562.4 476.1 L1561.5 474.5 L1560.6 472.8 L1559.7 471.2 L1558.7 469.6 L1557.6 468.0 L1556.5 466.3 L1555.5 464.7 L1554.4 463.1 L1553.3 461.4 L1552.7 459.5 L1552.1 457.6 L1551.6 455.7 L1551.0 453.8 L1550.4 451.9 L1549.8 450.0 L1549.3 446.2 L1548.8 442.5 L1548.3 438.7 L1547.8 434.9 L1547.2 431.2 L1546.7 427.4 L1546.6 423.5 L1546.5 419.6 L1546.3 415.7 L1546.2 411.7 L1546.1 407.8 L1545.9 403.9 L1545.9 388.9 L1545.9 373.9 L1545.9 358.9 L1545.9 343.9 L1545.9 328.9 L1545.9 313.9L1500.0 325.0 L1500.0 960.0Z" fill="#a8a8a8"/>
<path d="M1558.4 934.4L1558.4 927.7 L1558.5 921.1 L1558.5 914.4 L1558.5 907.8 L1558.5 901.1 L1558.5 894.5 L1559.5 891.6 L1560.6 888.8 L1561.6 886.0 L1562.6 883.1 L1563.6 880.3 L1564.7 877.4 L1565.7 876.3 L1566.8 875.2 L1567.9 874.0 L1569.0 872.9 L1570.0 871.8 L1571.1 870.6 L1571.9 868.8 L1572.7 867.1 L1573.6 865.3 L1574.4 863.5 L1575.2 861.7 L1576.0 859.9 L1576.3 857.9 L1576.5 856.0 L1576.8 854.0 L1577.0 852.0 L1577.3 850.0 L1577.5 848.1 L1577.6 845.5 L1577.7 842.9 L1577.8 840.3 L1577.8 837.7 L1577.9 835.1 L1578.0 832.5 L1578.2 823.7 L1578.3 815.0 L1578.5 806.2 L1578.6 797.5 L1578.8 788.7 L1578.9 780.0 L1579.0 758.3 L1579.1 736.7 L1579.2 715.0 L1579.3 693.3 L1579.4 671.7 L1579.5 650.0 L1579.6 638.1 L1579.6 626.2 L1579.6 614.3 L1579.6 602.4 L1579.6 590.5 L1579.6 578.6 L1579.6 573.3 L1579.5 568.0 L1579.5 562.7 L1579.5 557.4 L1579.4 552.1 L1579.4 546.8 L1579.2 543.8 L1579.0 540.7 L1578.8 537.7 L1578.5 534.7 L1578.3 531.7 L1578.1 528.7 L1577.6 525.9 L1577.0 523.0 L1576.5 520.2 L1576.0 517.4 L1575.4 514.6 L1574.9 511.8 L1574.1 509.3 L1573.3 506.8 L1572.6 504.2 L1571.8 501.7 L1571.0 499.1 L1570.3 496.6 L1569.3 494.0 L1568.3 491.4 L1567.3 488.9 L1566.3 486.3 L1565.3 483.7 L1564.3 481.2 L1563.4 479.5 L1562.5 477.9 L1561.6 476.2 L1560.7 474.6 L1559.8 473.0 L1558.9 471.3 L1557.9 469.8 L1556.8 468.2 L1555.7 466.6 L1554.7 465.0 L1553.6 463.4 L1552.6 461.8 L1552.0 459.8 L1551.3 457.9 L1550.7 456.0 L1550.1 454.1 L1549.5 452.1 L1548.9 450.2 L1548.4 446.4 L1547.8 442.5 L1547.2 438.7 L1546.7 434.8 L1546.1 431.0 L1545.5 427.2 L1545.4 423.2 L1545.2 419.2 L1545.1 415.2 L1544.9 411.2 L1544.8 407.2 L1544.6 403.2 L1544.6 388.2 L1544.6 373.2 L1544.6 358.2 L1544.6 343.2 L1544.6 328.2 L1544.6 313.2L1500.0 325.0 L1500.0 960.0Z" fill="#b2b2b2"/>
<path d="M1556.6 933.0L1556.6 926.3 L1556.6 919.7 L1556.6 913.0 L1556.6 906.3 L1556.6 899.7 L1556.6 893.0 L1557.7 890.2 L1558.8 887.4 L1559.9 884.5 L1561.0 881.7 L1562.0 878.9 L1563.1 876.1 L1564.3 875.0 L1565.4 874.0 L1566.5 872.9 L1567.6 871.9 L1568.8 870.8 L1569.9 869.8 L1570.8 868.0 L1571.6 866.3 L1572.5 864.6 L1573.3 862.8 L1574.2 861.1 L1575.1 859.3 L1575.3 857.4 L1575.6 855.5 L1575.9 853.5 L1576.1 851.6 L1576.4 849.6 L1576.7 847.7 L1576.7 845.1 L1576.8 842.5 L1576.9 839.9 L1577.0 837.3 L1577.1 834.7 L1577.2 832.2 L1577.3 823.5 L1577.5 814.8 L1577.6 806.1 L1577.8 797.4 L1577.9 788.7 L1578.1 780.0 L1578.2 758.3 L1578.3 736.7 L1578.4 715.0 L1578.5 693.3 L1578.6 671.7 L1578.7 650.0 L1578.7 638.1 L1578.7 626.2 L1578.7 614.3 L1578.7 602.4 L1578.7 590.4 L1578.7 578.5 L1578.7 573.2 L1578.6 567.9 L1578.6 562.5 L1578.6 557.2 L1578.5 551.9 L1578.5 546.6 L1578.3 543.6 L1578.1 540.6 L1577.9 537.5 L1577.7 534.5 L1577.5 531.5 L1577.3 528.5 L1576.8 525.8 L1576.2 523.0 L1575.7 520.2 L1575.1 517.4 L1574.6 514.7 L1574.1 511.9 L1573.3 509.4 L1572.6 506.9 L1571.8 504.4 L1571.1 501.9 L1570.3 499.3 L1569.6 496.8 L1568.6 494.3 L1567.5 491.7 L1566.5 489.1 L1565.5 486.5 L1564.5 484.0 L1563.5 481.4 L1562.6 479.7 L1561.7 478.1 L1560.8 476.4 L1559.9 474.8 L1559.0 473.1 L1558.1 471.5 L1557.0 469.9 L1556.0 468.4 L1554.9 466.8 L1553.9 465.2 L1552.9 463.7 L1551.8 462.1 L1551.2 460.2 L1550.6 458.2 L1549.9 456.3 L1549.3 454.3 L1548.7 452.4 L1548.1 450.4 L1547.4 446.5 L1546.8 442.6 L1546.2 438.7 L1545.6 434.7 L1545.0 430.8 L1544.3 426.9 L1544.2 422.8 L1544.0 418.8 L1543.8 414.7 L1543.6 410.7 L1543.5 406.6 L1543.3 402.6 L1543.3 387.6 L1543.3 372.6 L1543.3 357.6 L1543.3 342.6 L1543.3 327.6 L1543.3 312.6L1500.0 325.0 L1500.0 960.0Z" fill="#bdbdbd"/>
<path d="M1554.7 931.5L1554.7 924.9 L1554.7 918.2 L1554.7 911.6 L1554.7 904.9 L1554.8 898.3 L1554.8 891.6 L1555.9 888.8 L1557.0 886.0 L1558.2 883.1 L1559.3 880.3 L1560.4 877.5 L1561.6 874.7 L1562.8 873.7 L1564.0 872.8 L1565.1 871.8 L1566.3 870.8 L1567.5 869.9 L1568.7 868.9 L1569.6 867.2 L1570.5 865.5 L1571.4 863.8 L1572.3 862.2 L1573.2 860.5 L1574.1 858.8 L1574.4 856.9 L1574.7 854.9 L1575.0 853.0 L1575.2 851.1 L1575.5 849.2 L1575.8 847.3 L1575.9 844.7 L1576.0 842.2 L1576.0 839.6 L1576.1 837.0 L1576.2 834.4 L1576.3 831.8 L1576.5 823.2 L1576.6 814.6 L1576.8 805.9 L1576.9 797.3 L1577.1 788.6 L1577.3 780.0 L1577.3 758.3 L1577.4 736.7 L1577.5 715.0 L1577.6 693.3 L1577.7 671.7 L1577.8 650.0 L1577.8 638.1 L1577.8 626.2 L1577.8 614.2 L1577.8 602.3 L1577.8 590.4 L1577.8 578.5 L1577.8 573.1 L1577.7 567.8 L1577.7 562.4 L1577.7 557.0 L1577.7 551.7 L1577.6 546.3 L1577.4 543.4 L1577.2 540.4 L1577.0 537.4 L1576.9 534.4 L1576.7 531.4 L1576.5 528.4 L1575.9 525.7 L1575.4 522.9 L1574.9 520.2 L1574.3 517.4 L1573.8 514.7 L1573.3 512.0 L1572.5 509.5 L1571.8 507.0 L1571.1 504.5 L1570.3 502.0 L1569.6 499.6 L1568.8 497.1 L1567.8 494.5 L1566.8 491.9 L1565.8 489.3 L1564.8 486.8 L1563.8 484.2 L1562.8 481.6 L1561.9 479.9 L1561.0 478.3 L1560.0 476.6 L1559.1 474.9 L1558.2 473.3 L1557.3 471.6 L1556.2 470.1 L1555.2 468.5 L1554.2 467.0 L1553.1 465.5 L1552.1 464.0 L1551.0 462.5 L1550.4 460.5 L1549.8 458.5 L1549.1 456.6 L1548.5 454.6 L1547.8 452.6 L1547.2 450.7 L1546.5 446.7 L1545.8 442.6 L1545.2 438.6 L1544.5 434.6 L1543.8 430.6 L1543.2 426.6 L1543.0 422.5 L1542.8 418.4 L1542.6 414.3 L1542.4 410.2 L1542.2 406.0 L1542.0 401.9 L1542.0 386.9 L1542.0 371.9 L1542.0 356.9 L1542.0 341.9 L1542.0 326.9 L1542.0 311.9L1500.0 325.0 L1500.0 960.0Z" fill="#c7c7c7"/>
<path d="M1552.8 930.1L1552.8 923.5 L1552.8 916.8 L1552.9 910.1 L1552.9 903.5 L1552.9 896.8 L1552.9 890.2 L1554.1 887.4 L1555.3 884.6 L1556.5 881.8 L1557.6 878.9 L1558.8 876.1 L1560.0 873.3 L1561.3 872.5 L1562.5 871.6 L1563.8 870.7 L1565.0 869.8 L1566.3 868.9 L1567.5 868.1 L1568.4 866.4 L1569.4 864.8 L1570.3 863.1 L1571.3 861.5 L1572.2 859.9 L1573.2 858.2 L1573.5 856.3 L1573.8 854.4 L1574.1 852.6 L1574.3 850.7 L1574.6 848.8 L1574.9 846.9 L1575.0 844.4 L1575.1 841.8 L1575.2 839.2 L1575.3 836.7 L1575.4 834.1 L1575.5 831.5 L1575.6 822.9 L1575.8 814.4 L1575.9 805.8 L1576.1 797.2 L1576.3 788.6 L1576.4 780.0 L1576.5 758.3 L1576.6 736.7 L1576.7 715.0 L1576.7 693.3 L1576.8 671.7 L1576.9 650.0 L1576.9 638.1 L1576.9 626.1 L1576.9 614.2 L1576.9 602.3 L1576.9 590.3 L1576.9 578.4 L1576.9 573.0 L1576.8 567.6 L1576.8 562.2 L1576.8 556.9 L1576.8 551.5 L1576.7 546.1 L1576.6 543.1 L1576.4 540.2 L1576.2 537.2 L1576.0 534.2 L1575.8 531.3 L1575.6 528.3 L1575.1 525.6 L1574.6 522.9 L1574.1 520.2 L1573.5 517.4 L1573.0 514.7 L1572.5 512.0 L1571.8 509.6 L1571.0 507.1 L1570.3 504.7 L1569.6 502.2 L1568.9 499.8 L1568.1 497.3 L1567.1 494.7 L1566.1 492.2 L1565.1 489.6 L1564.1 487.0 L1563.1 484.4 L1562.1 481.8 L1561.2 480.2 L1560.2 478.5 L1559.3 476.8 L1558.3 475.1 L1557.4 473.4 L1556.4 471.7 L1555.4 470.2 L1554.4 468.7 L1553.4 467.3 L1552.3 465.8 L1551.3 464.3 L1550.3 462.8 L1549.6 460.8 L1549.0 458.8 L1548.3 456.9 L1547.6 454.9 L1547.0 452.9 L1546.3 450.9 L1545.6 446.8 L1544.9 442.7 L1544.1 438.6 L1543.4 434.5 L1542.7 430.4 L1542.0 426.3 L1541.7 422.2 L1541.5 418.0 L1541.3 413.8 L1541.1 409.6 L1540.9 405.4 L1540.6 401.3 L1540.6 386.3 L1540.6 371.3 L1540.6 356.3 L1540.6 341.3 L1540.6 326.3 L1540.6 311.3L1500.0 325.0 L1500.0 960.0Z" fill="#d1d1d1"/>
<path d="M1551.0 928.7L1551.0 922.0 L1551.0 915.4 L1551.0 908.7 L1551.0 902.1 L1551.0 895.4 L1551.0 888.7 L1552.3 885.9 L1553.5 883.1 L1554.7 880.4 L1556.0 877.6 L1557.2 874.8 L1558.5 872.0 L1559.8 871.2 L1561.1 870.4 L1562.4 869.6 L1563.7 868.8 L1565.0 868.0 L1566.3 867.2 L1567.3 865.6 L1568.3 864.0 L1569.3 862.4 L1570.3 860.8 L1571.3 859.2 L1572.3 857.6 L1572.6 855.8 L1572.9 853.9 L1573.2 852.1 L1573.5 850.2 L1573.8 848.4 L1574.1 846.5 L1574.2 844.0 L1574.2 841.4 L1574.3 838.9 L1574.4 836.3 L1574.5 833.8 L1574.6 831.2 L1574.8 822.7 L1574.9 814.2 L1575.1 805.6 L1575.3 797.1 L1575.4 788.5 L1575.6 780.0 L1575.7 758.3 L1575.7 736.7 L1575.8 715.0 L1575.9 693.3 L1576.0 671.7 L1576.0 650.0 L1576.0 638.1 L1576.0 626.1 L1576.0 614.2 L1576.0 602.2 L1576.0 590.3 L1576.0 578.3 L1576.0 572.9 L1576.0 567.5 L1575.9 562.1 L1575.9 556.7 L1575.9 551.3 L1575.9 545.9 L1575.7 542.9 L1575.5 540.0 L1575.3 537.0 L1575.2 534.1 L1575.0 531.1 L1574.8 528.2 L1574.3 525.5 L1573.8 522.8 L1573.2 520.1 L1572.7 517.4 L1572.2 514.8 L1571.7 512.1 L1571.0 509.6 L1570.3 507.2 L1569.6 504.8 L1568.8 502.4 L1568.1 500.0 L1567.4 497.5 L1566.4 495.0 L1565.4 492.4 L1564.4 489.8 L1563.4 487.2 L1562.4 484.7 L1561.4 482.1 L1560.4 480.4 L1559.5 478.7 L1558.5 476.9 L1557.5 475.2 L1556.6 473.5 L1555.6 471.8 L1554.6 470.4 L1553.6 468.9 L1552.6 467.5 L1551.6 466.1 L1550.5 464.6 L1549.5 463.2 L1548.9 461.2 L1548.2 459.2 L1547.5 457.1 L1546.8 455.1 L1546.1 453.1 L1545.5 451.1 L1544.7 446.9 L1543.9 442.8 L1543.1 438.6 L1542.3 434.4 L1541.6 430.2 L1540.8 426.1 L1540.5 421.8 L1540.3 417.6 L1540.0 413.3 L1539.8 409.1 L1539.6 404.9 L1539.3 400.6 L1539.3 385.6 L1539.3 370.6 L1539.3 355.6 L1539.3 340.6 L1539.3 325.6 L1539.3 310.6L1500.0 325.0 L1500.0 960.0Z" fill="#dbdbdb"/>
<path d="M1549.1 927.3L1549.1 920.6 L1549.1 913.9 L1549.1 907.3 L1549.1 900.6 L1549.1 894.0 L1549.1 887.3 L1550.4 884.5 L1551.7 881.7 L1553.0 879.0 L1554.3 876.2 L1555.6 873.4 L1556.9 870.6 L1558.3 869.9 L1559.7 869.2 L1561.0 868.5 L1562.4 867.8 L1563.7 867.1 L1565.1 866.4 L1566.1 864.8 L1567.2 863.3 L1568.2 861.7 L1569.2 860.2 L1570.3 858.6 L1571.3 857.1 L1571.6 855.3 L1571.9 853.4 L1572.3 851.6 L1572.6 849.8 L1572.9 848.0 L1573.2 846.2 L1573.3 843.6 L1573.4 841.1 L1573.5 838.5 L1573.6 836.0 L1573.7 833.5 L1573.8 830.9 L1573.9 822.4 L1574.1 813.9 L1574.3 805.5 L1574.4 797.0 L1574.6 788.5 L1574.8 780.0 L1574.8 758.3 L1574.9 736.7 L1575.0 715.0 L1575.0 693.3 L1575.1 671.7 L1575.1 650.0 L1575.1 638.0 L1575.1 626.1 L1575.1 614.1 L1575.1 602.2 L1575.1 590.2 L1575.1 578.2 L1575.1 572.8 L1575.1 567.4 L1575.0 562.0 L1575.0 556.5 L1575.0 551.1 L1575.0 545.7 L1574.8 542.7 L1574.6 539.8 L1574.5 536.9 L1574.3 533.9 L1574.1 531.0 L1574.0 528.1 L1573.5 525.4 L1573.0 522.7 L1572.4 520.1 L1571.9 517.4 L1571.4 514.8 L1570.9 512.1 L1570.2 509.7 L1569.5 507.3 L1568.8 505.0 L1568.1 502.6 L1567.4 500.2 L1566.7 497.8 L1565.7 495.2 L1564.7 492.6 L1563.7 490.0 L1562.7 487.5 L1561.7 484.9 L1560.7 482.3 L1559.7 480.6 L1558.7 478.9 L1557.7 477.1 L1556.7 475.4 L1555.8 473.7 L1554.8 471.9 L1553.8 470.5 L1552.8 469.1 L1551.8 467.7 L1550.8 466.3 L1549.8 464.9 L1548.8 463.5 L1548.1 461.5 L1547.4 459.5 L1546.7 457.4 L1546.0 455.4 L1545.3 453.4 L1544.6 451.3 L1543.8 447.1 L1542.9 442.8 L1542.1 438.6 L1541.2 434.3 L1540.4 430.1 L1539.6 425.8 L1539.3 421.5 L1539.0 417.2 L1538.8 412.9 L1538.5 408.6 L1538.2 404.3 L1538.0 400.0 L1538.0 385.0 L1538.0 370.0 L1538.0 355.0 L1538.0 340.0 L1538.0 325.0 L1538.0 310.0L1500.0 325.0 L1500.0 960.0Z" fill="#e5e5e5"/>
<path d="M1547.2 925.8L1547.2 919.2 L1547.2 912.5 L1547.2 905.9 L1547.2 899.2 L1547.2 892.5 L1547.3 885.9 L1548.6 883.1 L1550.0 880.3 L1551.3 877.5 L1552.7 874.8 L1554.0 872.0 L1555.4 869.2 L1556.8 868.6 L1558.2 868.0 L1559.6 867.4 L1561.1 866.7 L1562.5 866.1 L1563.9 865.5 L1565.0 864.0 L1566.1 862.5 L1567.1 861.0 L1568.2 859.5 L1569.3 858.0 L1570.4 856.5 L1570.7 854.7 L1571.0 852.9 L1571.4 851.1 L1571.7 849.4 L1572.0 847.6 L1572.3 845.8 L1572.4 843.2 L1572.5 840.7 L1572.6 838.2 L1572.7 835.7 L1572.8 833.1 L1572.9 830.6 L1573.1 822.2 L1573.3 813.7 L1573.4 805.3 L1573.6 796.9 L1573.8 788.4 L1574.0 780.0 L1574.0 758.3 L1574.1 736.7 L1574.1 715.0 L1574.2 693.3 L1574.2 671.7 L1574.3 650.0 L1574.3 638.0 L1574.2 626.1 L1574.2 614.1 L1574.2 602.1 L1574.2 590.1 L1574.2 578.2 L1574.2 572.7 L1574.2 567.3 L1574.1 561.8 L1574.1 556.3 L1574.1 550.9 L1574.1 545.4 L1573.9 542.5 L1573.8 539.6 L1573.6 536.7 L1573.5 533.8 L1573.3 530.9 L1573.2 527.9 L1572.6 525.3 L1572.1 522.7 L1571.6 520.1 L1571.1 517.4 L1570.6 514.8 L1570.1 512.2 L1569.4 509.8 L1568.7 507.5 L1568.1 505.1 L1567.4 502.7 L1566.7 500.4 L1566.0 498.0 L1565.0 495.4 L1564.0 492.9 L1563.0 490.3 L1562.0 487.7 L1561.0 485.1 L1559.9 482.5 L1558.9 480.8 L1557.9 479.0 L1556.9 477.3 L1555.9 475.6 L1555.0 473.8 L1554.0 472.1 L1553.0 470.7 L1552.0 469.3 L1551.0 468.0 L1550.0 466.6 L1549.0 465.3 L1548.0 463.9 L1547.3 461.8 L1546.6 459.8 L1545.9 457.7 L1545.2 455.7 L1544.4 453.6 L1543.7 451.6 L1542.8 447.2 L1541.9 442.9 L1541.1 438.5 L1540.2 434.2 L1539.3 429.9 L1538.4 425.5 L1538.1 421.2 L1537.8 416.8 L1537.5 412.4 L1537.2 408.1 L1536.9 403.7 L1536.7 399.3 L1536.7 384.3 L1536.7 369.3 L1536.7 354.3 L1536.7 339.3 L1536.7 324.3 L1536.7 309.3L1500.0 325.0 L1500.0 960.0Z" fill="#f0f0f0"/>
<path d="M1545.4 924.4L1545.4 917.8 L1545.4 911.1 L1545.4 904.4 L1545.4 897.8 L1545.4 891.1 L1545.4 884.4 L1546.8 881.7 L1548.2 878.9 L1549.6 876.1 L1551.0 873.4 L1552.4 870.6 L1553.8 867.9 L1555.3 867.3 L1556.8 866.8 L1558.3 866.3 L1559.7 865.7 L1561.2 865.2 L1562.7 864.7 L1563.8 863.2 L1564.9 861.8 L1566.1 860.3 L1567.2 858.9 L1568.3 857.4 L1569.4 856.0 L1569.8 854.2 L1570.1 852.4 L1570.5 850.7 L1570.8 848.9 L1571.1 847.1 L1571.5 845.4 L1571.6 842.9 L1571.7 840.4 L1571.8 837.8 L1571.9 835.3 L1572.0 832.8 L1572.0 830.3 L1572.2 821.9 L1572.4 813.5 L1572.6 805.2 L1572.8 796.8 L1572.9 788.4 L1573.1 780.0 L1573.2 758.3 L1573.2 736.7 L1573.3 715.0 L1573.3 693.3 L1573.3 671.7 L1573.4 650.0 L1573.4 638.0 L1573.4 626.0 L1573.3 614.0 L1573.3 602.1 L1573.3 590.1 L1573.3 578.1 L1573.3 572.6 L1573.3 567.1 L1573.2 561.6 L1573.2 556.2 L1573.2 550.7 L1573.2 545.2 L1573.0 542.3 L1572.9 539.4 L1572.8 536.5 L1572.6 533.6 L1572.5 530.7 L1572.3 527.8 L1571.8 525.2 L1571.3 522.6 L1570.8 520.0 L1570.3 517.4 L1569.8 514.8 L1569.3 512.2 L1568.6 509.9 L1568.0 507.6 L1567.3 505.3 L1566.6 502.9 L1566.0 500.6 L1565.3 498.3 L1564.3 495.7 L1563.3 493.1 L1562.3 490.5 L1561.2 487.9 L1560.2 485.4 L1559.2 482.8 L1558.2 481.0 L1557.2 479.2 L1556.2 477.5 L1555.2 475.7 L1554.1 473.9 L1553.1 472.2 L1552.1 470.9 L1551.2 469.5 L1550.2 468.2 L1549.2 466.9 L1548.2 465.6 L1547.3 464.2 L1546.5 462.2 L1545.8 460.1 L1545.1 458.0 L1544.3 455.9 L1543.6 453.9 L1542.9 451.8 L1541.9 447.4 L1541.0 442.9 L1540.0 438.5 L1539.1 434.1 L1538.1 429.7 L1537.2 425.3 L1536.9 420.8 L1536.6 416.4 L1536.3 412.0 L1535.9 407.5 L1535.6 403.1 L1535.3 398.7 L1535.3 383.7 L1535.3 368.7 L1535.3 353.7 L1535.3 338.7 L1535.3 323.7 L1535.3 308.7L1500.0 325.0 L1500.0 960.0Z" fill="#fafafa"/>
<path d="M1543.5 923.0L1543.5 916.3 L1543.5 909.7 L1543.5 903.0 L1543.5 896.3 L1543.5 889.7 L1543.5 883.0 L1545.0 880.2 L1546.4 877.5 L1547.9 874.8 L1549.4 872.0 L1550.8 869.2 L1552.3 866.5 L1553.8 866.0 L1555.4 865.6 L1556.9 865.1 L1558.4 864.7 L1560.0 864.2 L1561.5 863.8 L1562.7 862.4 L1563.8 861.0 L1565.0 859.6 L1566.2 858.2 L1567.3 856.8 L1568.5 855.4 L1568.8 853.7 L1569.2 851.9 L1569.5 850.2 L1569.9 848.5 L1570.2 846.7 L1570.6 845.0 L1570.7 842.5 L1570.8 840.0 L1570.9 837.5 L1571.0 835.0 L1571.1 832.5 L1571.2 830.0 L1571.4 821.7 L1571.6 813.3 L1571.8 805.0 L1571.9 796.7 L1572.1 788.3 L1572.3 780.0 L1572.3 758.3 L1572.4 736.7 L1572.4 715.0 L1572.4 693.3 L1572.5 671.7 L1572.5 650.0 L1572.5 638.0 L1572.5 626.0 L1572.5 614.0 L1572.4 602.0 L1572.4 590.0 L1572.4 578.0 L1572.4 572.5 L1572.4 567.0 L1572.3 561.5 L1572.3 556.0 L1572.3 550.5 L1572.3 545.0 L1572.2 542.1 L1572.0 539.2 L1571.9 536.4 L1571.8 533.5 L1571.6 530.6 L1571.5 527.7 L1571.0 525.1 L1570.5 522.6 L1570.0 520.0 L1569.5 517.4 L1569.0 514.9 L1568.5 512.3 L1567.8 510.0 L1567.2 507.7 L1566.5 505.4 L1565.9 503.1 L1565.2 500.8 L1564.6 498.5 L1563.6 495.9 L1562.6 493.3 L1561.5 490.8 L1560.5 488.2 L1559.5 485.6 L1558.5 483.0 L1557.5 481.2 L1556.4 479.4 L1555.4 477.6 L1554.4 475.9 L1553.3 474.1 L1552.3 472.3 L1551.3 471.0 L1550.4 469.7 L1549.4 468.5 L1548.4 467.2 L1547.5 465.9 L1546.5 464.6 L1545.8 462.5 L1545.0 460.4 L1544.2 458.3 L1543.5 456.2 L1542.8 454.1 L1542.0 452.0 L1541.0 447.5 L1540.0 443.0 L1539.0 438.5 L1538.0 434.0 L1537.0 429.5 L1536.0 425.0 L1535.7 420.5 L1535.3 416.0 L1535.0 411.5 L1534.7 407.0 L1534.3 402.5 L1534.0 398.0 L1534.0 383.0 L1534.0 368.0 L1534.0 353.0 L1534.0 338.0 L1534.0 323.0 L1534.0 308.0L1500.0 325.0 L1500.0 960.0Z" fill="#ffffff"/>
<rect x="1530" y="325" width="36" height="200" fill="url(#gNeckR)" style="mix-blend-mode:darken"/>
<g style="mix-blend-mode:darken"><path d="M1546.500 355 H1563.500 V444 L1546.500 452Z" fill="url(#gNWR)" filter="url(#b2)"/></g>
<path d="M1561.500 330 H1580 V480 L1561.500 446Z" fill="#121212"/>
<path d="M1533 330 H1580 V386 L1546.500 366.500 L1533 357Z" fill="#1a1a1a"/>
<path d="M1533 338 L1552 350 V368 L1533 358Z" fill="#333333" filter="url(#b2)"/>
</g></g>
<path d="M1462.800 335.800 C1464 322 1493 309.200 1533.800 309.200 C1574 309.200 1605 322 1606.600 340 C1607 352 1593 361 1577.200 366.500 L1533.800 340.500Z" fill="url(#gTop)" stroke="#1a0000" stroke-width=".9"/>
<path d="M1462.8 335.8L1533.8 340.5 L1534.6 876.2 L1440.8 868.0 C1440.5 853.3 1439.9 821.3 1439.2 780.0 C1438.5 738.7 1437.1 661.7 1436.4 620.0 C1435.7 578.3 1435.1 548.0 1434.8 530.0 C1434.5 512.0 1434.5 517.3 1434.6 512.3 C1434.7 507.3 1434.6 504.4 1435.4 500.0 C1436.2 495.6 1437.4 491.1 1439.2 486.2 C1441.0 481.3 1443.5 475.9 1446.2 470.8 C1448.9 465.7 1452.5 460.0 1455.4 455.4 C1458.3 450.8 1462.4 445.1 1463.8 443.0 L1462.8 335.8Z M1533.8 340.5L1577.2 366.5 L1577.2 477.0 C1578.2 479.6 1581.0 486.7 1583.0 492.3 C1585.0 497.9 1587.5 504.4 1589.2 510.8 C1590.9 517.2 1592.0 524.1 1593.0 530.8 C1594.0 537.5 1594.9 542.6 1595.4 550.8 C1595.9 559.0 1595.8 563.5 1595.8 580.0 C1595.8 596.5 1595.7 616.7 1595.4 650.0 C1595.1 683.3 1594.3 735.0 1593.8 780.0 C1593.3 825.0 1592.5 896.9 1592.3 920.3 L1534.6 876.2Z M1513.5 432.3 L1513.5 456.2 C1511.5 457.0 1505.2 458.8 1501.5 460.8 C1497.8 462.9 1494.2 465.9 1491.5 468.5 C1488.8 471.1 1487.5 473.0 1485.4 476.2 C1483.4 479.4 1481.0 484.1 1479.2 487.7 C1477.4 491.2 1475.7 494.0 1474.6 497.5 C1473.5 501.0 1473.2 503.5 1472.8 508.5 C1472.4 513.5 1472.4 524.5 1472.3 527.7 L1475.4 780.0 L1475.7 810.8 C1476.3 813.1 1477.2 820.2 1479.2 824.6 C1481.2 829.0 1484.0 833.1 1487.7 837.0 C1491.4 840.9 1496.9 844.9 1501.5 847.7 C1506.1 850.5 1509.9 852.0 1515.4 853.8 C1520.9 855.6 1531.4 857.7 1534.6 858.5 M1546.5 440.8 L1546.5 464.6 C1547.5 465.9 1550.3 469.2 1552.3 472.3 C1554.3 475.4 1556.5 478.6 1558.5 483.0 C1560.5 487.4 1562.9 493.6 1564.6 498.5 C1566.3 503.4 1567.3 507.4 1568.5 512.3 C1569.7 517.2 1570.9 522.2 1571.5 527.7 C1572.1 533.2 1572.2 542.1 1572.3 545.0 L1572.3 780.0 L1571.3 838.0 C1571.2 839.5 1571.1 844.1 1570.6 847.0 C1570.1 849.9 1569.3 853.1 1568.5 855.4 C1567.7 857.6 1566.7 859.1 1565.5 860.5 C1564.3 861.9 1562.9 862.9 1561.5 863.8 C1560.1 864.7 1558.5 865.3 1557.0 865.8 C1555.5 866.2 1553.9 866.5 1552.3 866.5 C1550.7 866.5 1549.0 866.2 1547.5 865.8 C1546.0 865.3 1544.5 864.6 1543.0 863.8 C1541.5 863.0 1539.9 861.9 1538.5 861.0 C1537.1 860.1 1535.2 858.9 1534.6 858.5 M1485.400 476.200 L1533.800 479.200 L1564.600 498.500 M1513.500 432.300 L1533.800 433.800 L1546.500 440.800 M1462.800 353.800 L1488.500 355.800 L1513.500 357.400 V432.300 M1488.500 355.800 L1490 425.800 L1463.800 443 M1546.500 440.800 V366.500 L1561.500 376 L1577.200 385.400 M1561.500 376 V446.200" fill="none" stroke="#0a0000" stroke-width="1" stroke-linejoin="round"/>
<g font-family="DejaVu Sans, Liberation Sans, sans-serif" font-size="12.450" fill="#111">
<text x="1391.5" y="441.5" text-anchor="middle">0.3</text>
<text x="1396" y="586.5" text-anchor="middle">0.2</text>
<text x="1399.5" y="725.5" text-anchor="middle">0.1</text>
<text x="1402.5" y="858.0" text-anchor="middle">0</text>
<text x="1421" y="886.0" text-anchor="middle">0.05</text>
<text x="1467" y="922.5" text-anchor="middle">0</text>
<text x="1515" y="961.0" text-anchor="middle">-0.05</text>
<text x="1603" y="946.0" text-anchor="middle">0</text>
<text x="1665.5" y="918.0" text-anchor="middle">0.05</text>
<text x="1438" y="213.500" textLength="66.200">Time=10 h</text><text x="1517.800" y="213.500" textLength="182.800">Surface: Temperature (degC)</text>
<rect x="1857.500" y="251.500" width="15" height="720" fill="url(#gBar)" stroke="#111" stroke-width="1"/>
<path d="M1857.500 912.0 h2.500 M1872.500 912.0 h-2.500" stroke="#111" stroke-width="1"/><text x="1880" y="916.5">34</text>
<path d="M1857.500 845.2 h2.500 M1872.500 845.2 h-2.500" stroke="#111" stroke-width="1"/><text x="1880" y="849.7">36</text>
<path d="M1857.500 778.5 h2.500 M1872.500 778.5 h-2.500" stroke="#111" stroke-width="1"/><text x="1880" y="783.0">38</text>
<path d="M1857.500 711.7 h2.500 M1872.500 711.7 h-2.500" stroke="#111" stroke-width="1"/><text x="1880" y="716.2">40</text>
<path d="M1857.500 644.9 h2.500 M1872.500 644.9 h-2.500" stroke="#111" stroke-width="1"/><text x="1880" y="649.4">42</text>
<path d="M1857.500 578.1 h2.500 M1872.500 578.1 h-2.500" stroke="#111" stroke-width="1"/><text x="1880" y="582.6">44</text>
<path d="M1857.500 511.3 h2.500 M1872.500 511.3 h-2.500" stroke="#111" stroke-width="1"/><text x="1880" y="515.8">46</text>
<path d="M1857.500 444.6 h2.500 M1872.500 444.6 h-2.500" stroke="#111" stroke-width="1"/><text x="1880" y="449.1">48</text>
<path d="M1857.500 377.8 h2.500 M1872.500 377.8 h-2.500" stroke="#111" stroke-width="1"/><text x="1880" y="382.3">50</text>
<path d="M1857.500 311.0 h2.500 M1872.500 311.0 h-2.500" stroke="#111" stroke-width="1"/><text x="1880" y="315.5">52</text>
<text x="1291.500" y="937">z</text><text x="1269.500" y="954">y</text><text x="1321" y="958">x</text>
</g>
<path d="M1295 966 V944" stroke="#0000ff" stroke-width="1.800"/><path d="M1291.800 946 L1295 938.500 L1298.200 946Z" fill="#0000ff"/>
<path d="M1295 966 L1314 959.500" stroke="#ff0000" stroke-width="1.800"/><path d="M1311.500 956.800 L1319 957.500 L1313.500 962.800Z" fill="#ff0000"/>
<path d="M1295 966 L1281 957" stroke="#00d000" stroke-width="1.800"/><path d="M1284.500 955 L1276.500 953.500 L1281 960.500Z" fill="#00d000"/>
<g transform="translate(1900.5 213.5) scale(1.250)"><path d="M-8.500 -5 L6.500 -8 L9.500 4.500 L-5 8Z" fill="#eef3f8" opacity=".92"/><path d="M-5.500 -3.500 L5 -4.500 L6 3.500 L-4.500 4.500Z" fill="#1d3f9c"/><path d="M-3.800 3.300 L-4 -2.300 L3.500 -2 L0 3.300Z" fill="#f4e04a"/><path d="M0.500 3.300 L3.800 -1.500 L4.500 3Z" fill="#2c7fe0"/></g>
</svg>
<div id="status" class="a"><div class="t" style="left:1538px;top:7px;font-size:11.500px;letter-spacing:-.4px;color:#1a1a1a">1.21 GB | 1.27 GB</div></div>
</body></html>
